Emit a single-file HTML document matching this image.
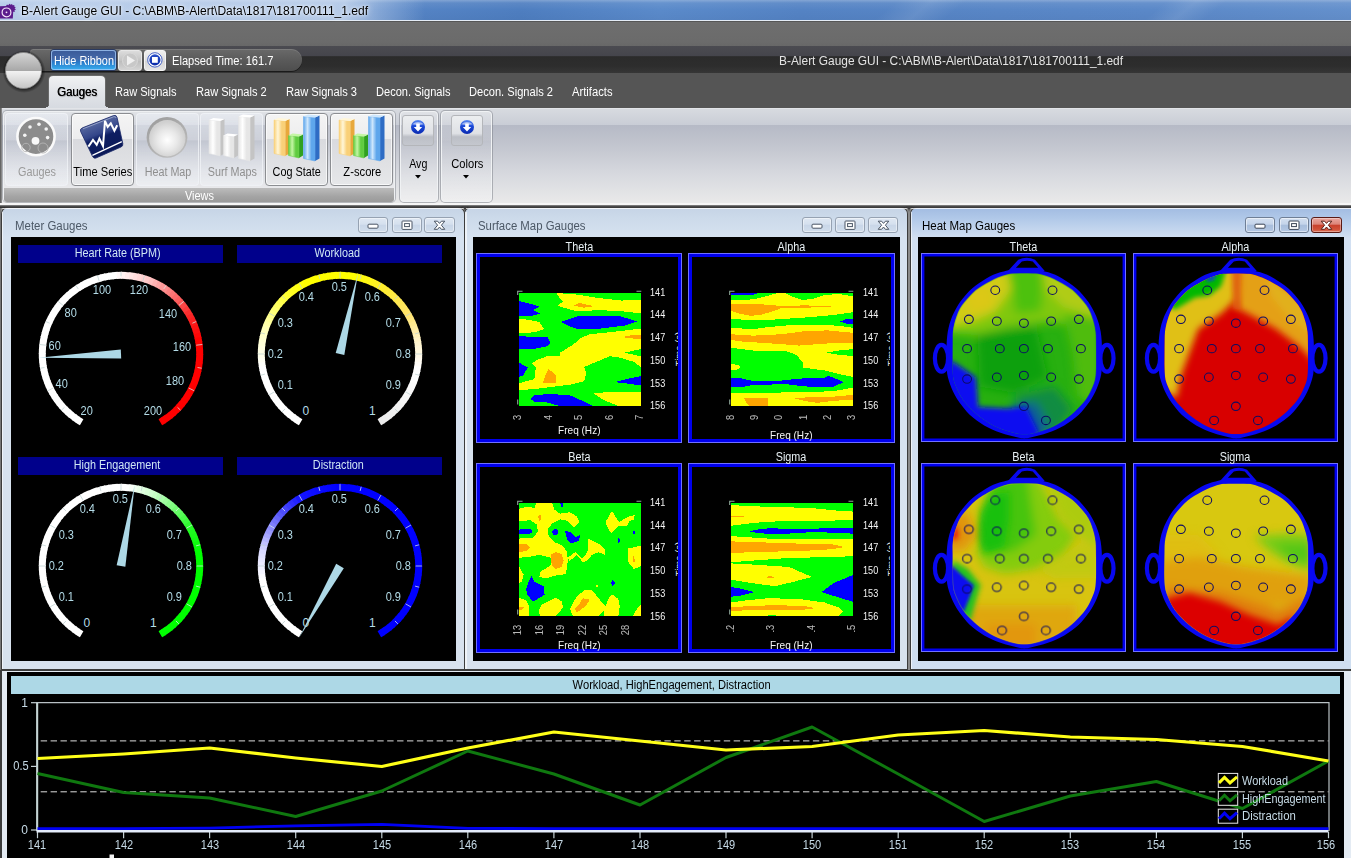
<!DOCTYPE html>
<html><head><meta charset="utf-8"><title>B-Alert Gauge GUI</title>
<style>
html,body{margin:0;padding:0;}
body{width:1351px;height:858px;position:relative;overflow:hidden;background:#d5dae2;font-family:"Liberation Sans",sans-serif;font-size:12px;}
#root{position:absolute;left:0;top:0;width:1351px;height:858px;overflow:hidden;}
svg{display:block;overflow:visible}
</style></head><body><div id="root">
<div style="position:absolute;left:0px;top:0px;width:1351px;height:21px;background:linear-gradient(90deg,#5a88c8 0px,#5584c5 400px,#4e7ec0 520px,#5a8aca 660px,#5483c4 800px,#5886c6 1000px,#5a88c8 1150px,#6490cc 1351px);"></div>
<div style="position:absolute;left:0px;top:0px;width:1351px;height:21px;background:linear-gradient(rgba(255,255,255,.28) 0,rgba(255,255,255,.08) 3px,rgba(255,255,255,0) 10px,rgba(0,0,30,.04) 21px);"></div>
<div style="position:absolute;left:0px;top:0px;width:430px;height:21px;background:linear-gradient(90deg,rgba(235,242,252,.64) 0,rgba(235,242,252,.62) 345px,rgba(235,242,252,.3) 380px,rgba(235,242,252,0) 425px);"></div>
<div style="position:absolute;left:0;top:0;width:1351px;height:21px;overflow:hidden"><div style="position:absolute;left:880px;top:-30px;width:70px;height:90px;transform:skewX(-50deg);background:linear-gradient(90deg,rgba(255,255,255,0),rgba(255,255,255,.10),rgba(255,255,255,0))"></div><div style="position:absolute;left:1150px;top:-30px;width:60px;height:90px;transform:skewX(-50deg);background:linear-gradient(90deg,rgba(255,255,255,0),rgba(255,255,255,.10),rgba(255,255,255,0))"></div></div>
<div style="position:absolute;left:0px;top:20px;width:1351px;height:1px;background:#e4ecf6;"></div>
<div style="position:absolute;left:0px;top:21px;width:1351px;height:1px;background:#565656;"></div>
<svg style="position:absolute;left:0;top:0px" width="18" height="21" viewBox="0 0 18 21"><path d="M0 6.2 L6 6 L7 4.6 L8.3 5.2 L9.4 3.8 L10.6 4.8 L12 3.9 L12.6 5.3 L14.4 5 L14.2 6.6 L15.8 7.2 L14.6 8.3 L16 9.6 L14.4 10.2 L15 11.8 L13.2 11.8 L12.8 18.6 L0 18.6 Z" fill="#5c1c8c"/><circle cx="6.5" cy="12.4" r="4.4" fill="none" stroke="#f4e6fa" stroke-width="1.2"/><circle cx="6.5" cy="12.3" r="0.9" fill="#f4e6fa"/></svg>
<div style="position:absolute;left:21.00px;top:2.50px;font-size:12px;line-height:16px;color:#000;white-space:nowrap;transform:scaleX(1.0017);transform-origin:0 50%;text-shadow:0 0 6px rgba(255,255,255,.9),0 0 3px rgba(255,255,255,.8);">B-Alert Gauge GUI - C:\ABM\B-Alert\Data\1817\181700111_1.edf</div>
<div style="position:absolute;left:0px;top:21.8px;width:1351px;height:24.2px;background:linear-gradient(#6e6e6e,#6b6b6b 80%,#686868);"></div>
<div style="position:absolute;left:0px;top:46px;width:1351px;height:27px;background:linear-gradient(#4b4b51 0,#45454c 10px,#2b2b2b 10.6px,#2d2d2d 20px,#363636 27px);"></div>
<div style="position:absolute;left:0px;top:73px;width:1351px;height:35px;background:#555555;"></div>
<div style="position:absolute;left:30px;top:49px;width:272px;height:22px;border-radius:4px 12px 12px 4px;background:linear-gradient(#6a6a6a,#5a5a5a 50%,#4e4e4e);box-shadow:0 1px 0 rgba(0,0,0,.5), inset 0 1px 0 rgba(255,255,255,.12);"></div>
<svg style="position:absolute;left:2px;top:49px" width="44" height="44" viewBox="0 0 44 44"><defs><linearGradient id="orbt" x1="0" y1="0" x2="0" y2="1"><stop offset="0" stop-color="#d6d6d6"/><stop offset="0.5" stop-color="#a8a8a8"/><stop offset="0.5" stop-color="#f4f4f4"/><stop offset="1" stop-color="#c4c4c4"/></linearGradient><radialGradient id="orbs" cx="0.5" cy="0.5" r="0.5"><stop offset="0.8" stop-color="#000" stop-opacity="0.6"/><stop offset="1" stop-color="#000" stop-opacity="0"/></radialGradient></defs><circle cx="22" cy="22.5" r="21.5" fill="url(#orbs)"/><circle cx="21.5" cy="21.5" r="18" fill="url(#orbt)" stroke="#8a8a8a" stroke-width="0.8"/></svg>
<div style="position:absolute;left:51px;top:50px;width:65px;height:20px;border-radius:3px;background:linear-gradient(#3a5a98 0,#4468a8 45%,#2878c8 60%,#38b0f0 100%);box-shadow:0 0 0 1px #2a3a60, inset 0 0 0 1px rgba(170,205,250,.75);"></div>
<div style="position:absolute;left:54.00px;top:52.50px;font-size:12px;line-height:16px;color:#fff;white-space:nowrap;transform:scaleX(0.9085);transform-origin:0 50%;">Hide Ribbon</div>
<div style="position:absolute;left:118px;top:49.5px;width:23.5px;height:21px;border-radius:3px;background:linear-gradient(#dcdcdc,#c4c4c4 50%,#bcbcbc 52%,#d4d4d4);border:1px solid #e8e8e8;box-sizing:border-box;"></div>
<svg style="position:absolute;left:118px;top:50px" width="24" height="21"><circle cx="12" cy="10.5" r="7.5" fill="#c8c8c8" stroke="#d8d8d8"/><path d="M9 5.5 L17 10.5 L9 15.5 Z" fill="#f0f0f0"/></svg>
<div style="position:absolute;left:144px;top:49.5px;width:22px;height:21px;border-radius:3px;background:linear-gradient(#f0f0f0,#dedede 50%,#d4d4d4 52%,#e6e6e6);border:1px solid #f4f4f4;box-sizing:border-box;"></div>
<svg style="position:absolute;left:144px;top:50px" width="22" height="21"><defs><linearGradient id="stg" x1="0" y1="0" x2="0" y2="1"><stop offset="0" stop-color="#2a50c8"/><stop offset="1" stop-color="#0a2aa8"/></linearGradient></defs><circle cx="10.9" cy="9.9" r="7.2" fill="#fff" stroke="#3050c0" stroke-width="0.9"/><circle cx="10.9" cy="9.9" r="5.6" fill="url(#stg)"/><rect x="8" y="7" width="5.8" height="5.8" fill="#fff"/></svg>
<div style="position:absolute;left:171.50px;top:53.00px;font-size:12px;line-height:16px;color:#fff;white-space:nowrap;transform:scaleX(0.9278);transform-origin:0 50%;">Elapsed Time: 161.7</div>
<div style="position:absolute;left:778.50px;top:52.50px;font-size:12px;line-height:16px;color:#e4e4e4;white-space:nowrap;transform:scaleX(0.9931);transform-origin:0 50%;">B-Alert Gauge GUI - C:\ABM\B-Alert\Data\1817\181700111_1.edf</div>
<div style="position:absolute;left:49px;top:76px;width:55.5px;height:33px;border-radius:4px 4px 0 0;background:linear-gradient(#f0f1f3,#e4e6ea 40%,#d6dae0);box-shadow:0 0 0 1px rgba(120,120,120,.6);"></div>
<div style="position:absolute;left:46px;top:104px;width:3px;height:4px;background:radial-gradient(circle at 0 0,rgba(0,0,0,0) 3px,#d6dae0 3.5px);"></div>
<div style="position:absolute;left:104.5px;top:104px;width:3px;height:4px;background:radial-gradient(circle at 100% 0,rgba(0,0,0,0) 3px,#d6dae0 3.5px);"></div>
<div style="position:absolute;left:56.50px;top:84.00px;font-size:12px;line-height:16px;color:#000;white-space:nowrap;transform:scaleX(0.9517);transform-origin:0 50%;text-shadow:0.4px 0 0 #000,1px 1px 1px rgba(0,0,0,.25);">Gauges</div>
<div style="position:absolute;left:115.00px;top:84.00px;font-size:12px;line-height:16px;color:#fff;white-space:nowrap;transform:scaleX(0.9221);transform-origin:0 50%;">Raw Signals</div>
<div style="position:absolute;left:196.30px;top:84.00px;font-size:12px;line-height:16px;color:#fff;white-space:nowrap;transform:scaleX(0.9217);transform-origin:0 50%;">Raw Signals 2</div>
<div style="position:absolute;left:286.00px;top:84.00px;font-size:12px;line-height:16px;color:#fff;white-space:nowrap;transform:scaleX(0.9256);transform-origin:0 50%;">Raw Signals 3</div>
<div style="position:absolute;left:376.00px;top:84.00px;font-size:12px;line-height:16px;color:#fff;white-space:nowrap;transform:scaleX(0.9230);transform-origin:0 50%;">Decon. Signals</div>
<div style="position:absolute;left:469.00px;top:84.00px;font-size:12px;line-height:16px;color:#fff;white-space:nowrap;transform:scaleX(0.9259);transform-origin:0 50%;">Decon. Signals 2</div>
<div style="position:absolute;left:572.00px;top:84.00px;font-size:12px;line-height:16px;color:#fff;white-space:nowrap;transform:scaleX(0.9344);transform-origin:0 50%;">Artifacts</div>
<div style="position:absolute;left:0px;top:108px;width:1351px;height:97px;background:linear-gradient(#d8dbe0 0,#c9cdd6 17px,#b6bac6 17.5px,#c4c7d0 40px,#d6d8de 65px,#eaeaea 96px);"></div>
<div style="position:absolute;left:0px;top:108px;width:1351px;height:1px;background:#e2e4e8;"></div>
<div style="position:absolute;left:0px;top:108px;width:2px;height:97px;background:linear-gradient(90deg,#555,#999);"></div>
<div style="position:absolute;left:0px;top:203.2px;width:1351px;height:2.2px;background:#f6f6f6;"></div>
<div style="position:absolute;left:0px;top:205.4px;width:1351px;height:2.2px;background:linear-gradient(#909090,#3a3a3a 60%,#2a2a2a);"></div>
<div style="position:absolute;left:3px;top:110.6px;width:392px;height:91.8px;box-sizing:border-box;border:1px solid #eef0f2;border-radius:4px;background:linear-gradient(rgba(255,255,255,.25),rgba(255,255,255,.05) 28px,rgba(255,255,255,0) 29px,rgba(255,255,255,.35));box-shadow:0 0 0 1px rgba(120,124,132,.45);"></div>
<div style="position:absolute;left:4px;top:188.2px;width:390px;height:13.4px;border-radius:0 0 3px 3px;background:linear-gradient(#bcbcbc,#a4a4a4 60%,#9a9a9a);"></div>
<div style="position:absolute;left:185.40px;top:187.50px;font-size:12px;line-height:16px;color:#fff;white-space:nowrap;transform:scaleX(0.9122);transform-origin:0 50%;">Views</div>
<div style="position:absolute;left:5px;top:112.5px;width:63px;height:73px;box-sizing:border-box;border:1px solid rgba(240,242,246,.8);border-radius:4px;background:linear-gradient(rgba(236,240,246,.55),rgba(226,230,238,.35) 36%,rgba(200,206,218,.35) 38%,rgba(238,240,244,.7) 100%);"></div>
<div style="position:absolute;left:70.5px;top:112.5px;width:63px;height:73px;box-sizing:border-box;border:1px solid #8c8e92;border-radius:4px;background:linear-gradient(#f4f4f4,#ededee 34.5%,#d9dade 35.5%,#e6e7e9 100%);box-shadow:inset 0 0 0 1px rgba(255,255,255,.7);"></div>
<div style="position:absolute;left:136px;top:112.5px;width:62.5px;height:73px;box-sizing:border-box;border:1px solid rgba(240,242,246,.8);border-radius:4px;background:linear-gradient(rgba(236,240,246,.55),rgba(226,230,238,.35) 36%,rgba(200,206,218,.35) 38%,rgba(238,240,244,.7) 100%);"></div>
<div style="position:absolute;left:200px;top:112.5px;width:63px;height:73px;box-sizing:border-box;border:1px solid rgba(240,242,246,.8);border-radius:4px;background:linear-gradient(rgba(236,240,246,.55),rgba(226,230,238,.35) 36%,rgba(200,206,218,.35) 38%,rgba(238,240,244,.7) 100%);"></div>
<div style="position:absolute;left:265px;top:112.5px;width:63px;height:73px;box-sizing:border-box;border:1px solid #8c8e92;border-radius:4px;background:linear-gradient(#f4f4f4,#ededee 34.5%,#d9dade 35.5%,#e6e7e9 100%);box-shadow:inset 0 0 0 1px rgba(255,255,255,.7);"></div>
<div style="position:absolute;left:330px;top:112.5px;width:63px;height:73px;box-sizing:border-box;border:1px solid #8c8e92;border-radius:4px;background:linear-gradient(#f4f4f4,#ededee 34.5%,#d9dade 35.5%,#e6e7e9 100%);box-shadow:inset 0 0 0 1px rgba(255,255,255,.7);"></div>
<svg style="position:absolute;left:15px;top:116px" width="42" height="42" viewBox="0 0 42 42"><circle cx="21" cy="20.6" r="18.6" fill="#8c8c8c" stroke="#fafafa" stroke-width="2.6"/><circle cx="20.5" cy="24.8" r="3.9" fill="#f8f8f8"/><circle cx="9.8" cy="19.2" r="1.8" fill="#f4f4f4"/><circle cx="15" cy="11" r="1.8" fill="#f4f4f4"/><circle cx="24" cy="8.2" r="1.8" fill="#f4f4f4"/><circle cx="31.2" cy="13" r="1.8" fill="#f4f4f4"/><circle cx="32.6" cy="21.6" r="1.8" fill="#f4f4f4"/><circle cx="11" cy="31.5" r="4.2" fill="none" stroke="#b4b4b4" stroke-width="0.9"/><circle cx="28" cy="32" r="5" fill="none" stroke="#b4b4b4" stroke-width="0.9"/></svg>
<div style="position:absolute;left:15.79px;top:164.00px;font-size:12px;line-height:16px;color:#9a9a9a;white-space:nowrap;transform:scaleX(0.9041);transform-origin:50% 50%;">Gauges</div>
<svg style="position:absolute;left:76px;top:112px" width="52" height="50" viewBox="76 112 52 50"><defs><linearGradient id="tsg" x1="0.2" y1="0" x2="0.6" y2="1"><stop offset="0" stop-color="#7080b0"/><stop offset="0.45" stop-color="#34468a"/><stop offset="0.55" stop-color="#0e1e62"/><stop offset="1" stop-color="#0a1856"/></linearGradient></defs><path d="M82.5 127.8 L113.5 115.6 Q116.2 114.6 117 117.2 L122.8 143.6 Q123.3 146 121 147 L96 158 Q93.6 158.8 92.6 156.6 L80.6 131.4 Q79.6 129 82.5 127.8 Z" fill="url(#tsg)" stroke="#1a2868" stroke-width="0.8"/><path d="M83 128.8 L113.6 116.8 Q115.6 116.2 116.2 118" fill="none" stroke="#c8d0e8" stroke-width="0.7" opacity=".8"/><path d="M88.4 146.6 L93 139.9 L96.7 144.8 L99.4 138.7 L103 146 L105 120.9 L107.7 127 L110.8 123.4 L114.4 130.7 L117.2 125.2" fill="none" stroke="#fff" stroke-width="2" stroke-linejoin="miter"/><path d="M92.4 155.4 L121.8 141.7" stroke="#fff" stroke-width="1.4"/></svg>
<div style="position:absolute;left:71.02px;top:164.00px;font-size:12px;line-height:16px;color:#000;white-space:nowrap;transform:scaleX(0.9281);transform-origin:50% 50%;">Time Series</div>
<svg style="position:absolute;left:145px;top:115px" width="44" height="44" viewBox="0 0 44 44"><defs><radialGradient id="hmg" cx="0.5" cy="0.55" r="0.5"><stop offset="0" stop-color="#ffffff"/><stop offset="0.55" stop-color="#e8e8e8"/><stop offset="1" stop-color="#d0d0d0"/></radialGradient><linearGradient id="hmr" x1="0" y1="0" x2="0.6" y2="1"><stop offset="0" stop-color="#9a9a9a"/><stop offset="1" stop-color="#bcbcbc"/></linearGradient></defs><circle cx="22" cy="22.4" r="20.4" fill="url(#hmr)"/><circle cx="22.3" cy="23.2" r="18.2" fill="url(#hmg)"/></svg>
<div style="position:absolute;left:141.69px;top:164.00px;font-size:12px;line-height:16px;color:#8e8e8e;white-space:nowrap;transform:scaleX(0.8957);transform-origin:50% 50%;">Heat Map</div>
<svg style="position:absolute;left:209px;top:112px" width="50" height="52" viewBox="0 0 50 52"><defs><linearGradient id="bg209_0" x1="0" y1="0" x2="1" y2="0"><stop offset="0" stop-color="#e6e6e6"/><stop offset="0.35" stop-color="#ffffff"/><stop offset="0.7" stop-color="#e6e6e6"/><stop offset="1" stop-color="#e6e6e6"/></linearGradient><linearGradient id="bg209_1" x1="0" y1="0" x2="1" y2="0"><stop offset="0" stop-color="#e6e6e6"/><stop offset="0.35" stop-color="#ffffff"/><stop offset="0.7" stop-color="#e6e6e6"/><stop offset="1" stop-color="#e6e6e6"/></linearGradient><linearGradient id="bg209_2" x1="0" y1="0" x2="1" y2="0"><stop offset="0" stop-color="#e6e6e6"/><stop offset="0.35" stop-color="#ffffff"/><stop offset="0.7" stop-color="#e6e6e6"/><stop offset="1" stop-color="#e6e6e6"/></linearGradient></defs><path d="M11.16 9.0 L15.5 7.0 L15.5 41.5 L11.16 44 Z" fill="#c4c4c4"/><path d="M0 8.0 L11.16 9.0 L11.16 44 L0 41.5 Z" fill="url(#bg209_0)" stroke="#e6e6e6" stroke-width="0.5"/><path d="M0 8.0 L4.34 6.0 L15.5 7.0 L11.16 9.0 Z" fill="#ffffff"/><path d="M24.939999999999998 24.5 L29.0 22.5 L29.0 43.5 L24.939999999999998 46 Z" fill="#c4c4c4"/><path d="M14.5 23.5 L24.939999999999998 24.5 L24.939999999999998 46 L14.5 43.5 Z" fill="url(#bg209_1)" stroke="#e6e6e6" stroke-width="0.5"/><path d="M14.5 23.5 L18.560000000000002 21.5 L29.0 22.5 L24.939999999999998 24.5 Z" fill="#ffffff"/><path d="M41.019999999999996 5.5 L45.5 3.5 L45.5 46.5 L41.019999999999996 49 Z" fill="#c4c4c4"/><path d="M29.5 4.5 L41.019999999999996 5.5 L41.019999999999996 49 L29.5 46.5 Z" fill="url(#bg209_2)" stroke="#e6e6e6" stroke-width="0.5"/><path d="M29.5 4.5 L33.980000000000004 2.5 L45.5 3.5 L41.019999999999996 5.5 Z" fill="#ffffff"/></svg>
<div style="position:absolute;left:204.56px;top:164.00px;font-size:12px;line-height:16px;color:#8e8e8e;white-space:nowrap;transform:scaleX(0.8960);transform-origin:50% 50%;">Surf Maps</div>
<svg style="position:absolute;left:274px;top:112px" width="50" height="52" viewBox="0 0 50 52"><defs><linearGradient id="bg274_0" x1="0" y1="0" x2="1" y2="0"><stop offset="0" stop-color="#f9d078"/><stop offset="0.35" stop-color="#fff6d8"/><stop offset="0.7" stop-color="#f9d078"/><stop offset="1" stop-color="#f9d078"/></linearGradient><linearGradient id="bg274_1" x1="0" y1="0" x2="1" y2="0"><stop offset="0" stop-color="#60cc40"/><stop offset="0.35" stop-color="#c4f6a4"/><stop offset="0.7" stop-color="#60cc40"/><stop offset="1" stop-color="#60cc40"/></linearGradient><linearGradient id="bg274_2" x1="0" y1="0" x2="1" y2="0"><stop offset="0" stop-color="#5ea6ec"/><stop offset="0.35" stop-color="#cde6fc"/><stop offset="0.7" stop-color="#5ea6ec"/><stop offset="1" stop-color="#5ea6ec"/></linearGradient></defs><path d="M11.16 9.0 L15.5 7.0 L15.5 41.5 L11.16 44 Z" fill="#e8a83c"/><path d="M0 8.0 L11.16 9.0 L11.16 44 L0 41.5 Z" fill="url(#bg274_0)" stroke="#f9d078" stroke-width="0.5"/><path d="M0 8.0 L4.34 6.0 L15.5 7.0 L11.16 9.0 Z" fill="#fff6d8"/><path d="M24.939999999999998 24.5 L29.0 22.5 L29.0 43.5 L24.939999999999998 46 Z" fill="#30a020"/><path d="M14.5 23.5 L24.939999999999998 24.5 L24.939999999999998 46 L14.5 43.5 Z" fill="url(#bg274_1)" stroke="#60cc40" stroke-width="0.5"/><path d="M14.5 23.5 L18.560000000000002 21.5 L29.0 22.5 L24.939999999999998 24.5 Z" fill="#c4f6a4"/><path d="M41.019999999999996 5.5 L45.5 3.5 L45.5 46.5 L41.019999999999996 49 Z" fill="#2e6cc4"/><path d="M29.5 4.5 L41.019999999999996 5.5 L41.019999999999996 49 L29.5 46.5 Z" fill="url(#bg274_2)" stroke="#5ea6ec" stroke-width="0.5"/><path d="M29.5 4.5 L33.980000000000004 2.5 L45.5 3.5 L41.019999999999996 5.5 Z" fill="#cde6fc"/></svg>
<div style="position:absolute;left:270.42px;top:164.00px;font-size:12px;line-height:16px;color:#000;white-space:nowrap;transform:scaleX(0.9032);transform-origin:50% 50%;">Cog State</div>
<svg style="position:absolute;left:339px;top:112px" width="50" height="52" viewBox="0 0 50 52"><defs><linearGradient id="bg339_0" x1="0" y1="0" x2="1" y2="0"><stop offset="0" stop-color="#f9d078"/><stop offset="0.35" stop-color="#fff6d8"/><stop offset="0.7" stop-color="#f9d078"/><stop offset="1" stop-color="#f9d078"/></linearGradient><linearGradient id="bg339_1" x1="0" y1="0" x2="1" y2="0"><stop offset="0" stop-color="#60cc40"/><stop offset="0.35" stop-color="#c4f6a4"/><stop offset="0.7" stop-color="#60cc40"/><stop offset="1" stop-color="#60cc40"/></linearGradient><linearGradient id="bg339_2" x1="0" y1="0" x2="1" y2="0"><stop offset="0" stop-color="#5ea6ec"/><stop offset="0.35" stop-color="#cde6fc"/><stop offset="0.7" stop-color="#5ea6ec"/><stop offset="1" stop-color="#5ea6ec"/></linearGradient></defs><path d="M11.16 9.0 L15.5 7.0 L15.5 41.5 L11.16 44 Z" fill="#e8a83c"/><path d="M0 8.0 L11.16 9.0 L11.16 44 L0 41.5 Z" fill="url(#bg339_0)" stroke="#f9d078" stroke-width="0.5"/><path d="M0 8.0 L4.34 6.0 L15.5 7.0 L11.16 9.0 Z" fill="#fff6d8"/><path d="M24.939999999999998 24.5 L29.0 22.5 L29.0 43.5 L24.939999999999998 46 Z" fill="#30a020"/><path d="M14.5 23.5 L24.939999999999998 24.5 L24.939999999999998 46 L14.5 43.5 Z" fill="url(#bg339_1)" stroke="#60cc40" stroke-width="0.5"/><path d="M14.5 23.5 L18.560000000000002 21.5 L29.0 22.5 L24.939999999999998 24.5 Z" fill="#c4f6a4"/><path d="M41.019999999999996 5.5 L45.5 3.5 L45.5 46.5 L41.019999999999996 49 Z" fill="#2e6cc4"/><path d="M29.5 4.5 L41.019999999999996 5.5 L41.019999999999996 49 L29.5 46.5 Z" fill="url(#bg339_2)" stroke="#5ea6ec" stroke-width="0.5"/><path d="M29.5 4.5 L33.980000000000004 2.5 L45.5 3.5 L41.019999999999996 5.5 Z" fill="#cde6fc"/></svg>
<div style="position:absolute;left:341.87px;top:164.00px;font-size:12px;line-height:16px;color:#000;white-space:nowrap;transform:scaleX(0.9344);transform-origin:50% 50%;">Z-score</div>
<div style="position:absolute;left:399.5px;top:110.8px;width:38px;height:91.2px;box-sizing:border-box;border:1px solid #f0f2f4;border-radius:4px;background:linear-gradient(rgba(255,255,255,.25),rgba(255,255,255,.05) 28px,rgba(255,255,255,0) 29px,rgba(255,255,255,.3));box-shadow:0 0 0 1px rgba(120,124,132,.5);"></div>
<div style="position:absolute;left:441px;top:110.8px;width:51px;height:91.2px;box-sizing:border-box;border:1px solid #f0f2f4;border-radius:4px;background:linear-gradient(rgba(255,255,255,.25),rgba(255,255,255,.05) 28px,rgba(255,255,255,0) 29px,rgba(255,255,255,.3));box-shadow:0 0 0 1px rgba(120,124,132,.5);"></div>
<div style="position:absolute;left:402px;top:115px;width:32px;height:31px;box-sizing:border-box;border:1px solid #b4b6ba;border-radius:3px;background:linear-gradient(#eceef0,#dfe1e5 60%,#bcbfc6 72%,#c4c7ce);"></div><svg style="position:absolute;left:410px;top:119px" width="16" height="16" viewBox="0 0 16 16"><defs><linearGradient id="ab418" x1="0" y1="0" x2="0" y2="1"><stop offset="0" stop-color="#5a8af0"/><stop offset="0.45" stop-color="#1a48d8"/><stop offset="1" stop-color="#0a2ab0"/></linearGradient></defs><circle cx="8" cy="8" r="7" fill="url(#ab418)"/><path d="M2.2 5.2 Q8 1 13.8 5.2 Q8 6.6 2.2 5.2Z" fill="#fff" opacity="0.55"/><path d="M6.2 4.6 H9.8 V8 H12.2 L8 12.6 L3.8 8 H6.2 Z" fill="#fff"/></svg>
<div style="position:absolute;left:450.7px;top:115px;width:32px;height:31px;box-sizing:border-box;border:1px solid #b4b6ba;border-radius:3px;background:linear-gradient(#eceef0,#dfe1e5 60%,#bcbfc6 72%,#c4c7ce);"></div><svg style="position:absolute;left:458.7px;top:119px" width="16" height="16" viewBox="0 0 16 16"><defs><linearGradient id="ab466" x1="0" y1="0" x2="0" y2="1"><stop offset="0" stop-color="#5a8af0"/><stop offset="0.45" stop-color="#1a48d8"/><stop offset="1" stop-color="#0a2ab0"/></linearGradient></defs><circle cx="8" cy="8" r="7" fill="url(#ab466)"/><path d="M2.2 5.2 Q8 1 13.8 5.2 Q8 6.6 2.2 5.2Z" fill="#fff" opacity="0.55"/><path d="M6.2 4.6 H9.8 V8 H12.2 L8 12.6 L3.8 8 H6.2 Z" fill="#fff"/></svg>
<div style="position:absolute;left:408.07px;top:156.00px;font-size:12px;line-height:16px;color:#000;white-space:nowrap;transform:scaleX(0.8895);transform-origin:50% 50%;">Avg</div>
<div style="position:absolute;left:449.66px;top:156.00px;font-size:12px;line-height:16px;color:#000;white-space:nowrap;transform:scaleX(0.9286);transform-origin:50% 50%;">Colors</div>
<svg style="position:absolute;left:415.4px;top:175px" width="6" height="4"><path d="M0 0 H6 L3 3.4 Z" fill="#000"/></svg>
<svg style="position:absolute;left:463.3px;top:175px" width="6" height="4"><path d="M0 0 H6 L3 3.4 Z" fill="#000"/></svg>
<div style="position:absolute;left:0px;top:207.5px;width:1351px;height:465px;background:#8a8a8a;"></div>
<div style="position:absolute;left:0px;top:207.5px;width:2.2px;height:651px;background:linear-gradient(90deg,#6a6a6a,#a0a0a0);"></div>
<div style="position:absolute;left:2.3px;top:207.8px;width:461.5px;height:461.2px;border-radius:6px 6px 0 0;background:linear-gradient(#c6d4e6 0,#ccdaea 10px,#d6e2f0 30px,#d8e2ee 100%);box-shadow:0 0 0 1px #3c3c3c;"></div>
<div style="position:absolute;left:2.3px;top:208px;width:461.5px;height:1.2px;border-radius:6px 6px 0 0;background:rgba(255,255,255,.75);"></div>
<div style="position:absolute;left:2.3px;top:212px;width:1.2px;height:457px;background:rgba(255,255,255,.6);"></div>
<div style="position:absolute;left:10.7px;top:237.4px;width:445.8px;height:423.4px;background:#000;"></div>
<div style="position:absolute;left:14.50px;top:217.55px;font-size:12.5px;line-height:16.5px;color:#4c5866;white-space:nowrap;transform:scaleX(0.9153);transform-origin:0 50%;">Meter Gauges</div>
<div style="position:absolute;left:358.2px;top:217.3px;width:30.3px;height:16.2px;box-sizing:border-box;border:1px solid #96a2b2;border-radius:3px;background:linear-gradient(#dfe8f3 0,#d5e0ee 45%,#c8d6e8 50%,#d2deec 100%);box-shadow:inset 0 0 0 1px rgba(255,255,255,.45);"></div>
<svg style="position:absolute;left:367.3px;top:222px" width="12" height="8"><rect x="1" y="2.2" width="10" height="4" rx="1" fill="#fff" stroke="#4a5564" stroke-width="1"/></svg>
<div style="position:absolute;left:391.59999999999997px;top:217.3px;width:30.3px;height:16.2px;box-sizing:border-box;border:1px solid #96a2b2;border-radius:3px;background:linear-gradient(#dfe8f3 0,#d5e0ee 45%,#c8d6e8 50%,#d2deec 100%);box-shadow:inset 0 0 0 1px rgba(255,255,255,.45);"></div>
<svg style="position:absolute;left:400.7px;top:219.5px" width="12" height="11"><rect x="1" y="1" width="10" height="8.4" rx="0.8" fill="#fff" stroke="#4a5564" stroke-width="1"/><rect x="3.6" y="3.6" width="4.8" height="3" fill="#fff" stroke="#4a5564" stroke-width="1"/></svg>
<div style="position:absolute;left:424.4px;top:217.3px;width:30.3px;height:16.2px;box-sizing:border-box;border:1px solid #96a2b2;border-radius:3px;background:linear-gradient(#dfe8f3 0,#d5e0ee 45%,#c8d6e8 50%,#d2deec 100%);box-shadow:inset 0 0 0 1px rgba(255,255,255,.45);"></div>
<svg style="position:absolute;left:433.0px;top:220px" width="13" height="11"><path d="M1.2 1.2 L4.6 1.2 L6.5 3.4 L8.4 1.2 L11.8 1.2 L8.4 5.2 L11.8 9.3 L8.4 9.3 L6.5 7 L4.6 9.3 L1.2 9.3 L4.6 5.2 Z" fill="#fff" stroke="#4a5564" stroke-width="1" stroke-linejoin="round"/></svg>
<div style="position:absolute;left:465.4px;top:207.8px;width:441.9px;height:461.2px;border-radius:6px 6px 0 0;background:linear-gradient(#c6d4e6 0,#ccdaea 10px,#d6e2f0 30px,#d8e2ee 100%);box-shadow:0 0 0 1px #3c3c3c;"></div>
<div style="position:absolute;left:465.4px;top:208px;width:441.9px;height:1.2px;border-radius:6px 6px 0 0;background:rgba(255,255,255,.75);"></div>
<div style="position:absolute;left:465.4px;top:212px;width:1.2px;height:457px;background:rgba(255,255,255,.6);"></div>
<div style="position:absolute;left:473px;top:237.4px;width:427px;height:423.4px;background:#000;"></div>
<div style="position:absolute;left:477.50px;top:217.55px;font-size:12.5px;line-height:16.5px;color:#4c5866;white-space:nowrap;transform:scaleX(0.9101);transform-origin:0 50%;">Surface Map Gauges</div>
<div style="position:absolute;left:801.7px;top:217.3px;width:30.3px;height:16.2px;box-sizing:border-box;border:1px solid #96a2b2;border-radius:3px;background:linear-gradient(#dfe8f3 0,#d5e0ee 45%,#c8d6e8 50%,#d2deec 100%);box-shadow:inset 0 0 0 1px rgba(255,255,255,.45);"></div>
<svg style="position:absolute;left:810.8000000000001px;top:222px" width="12" height="8"><rect x="1" y="2.2" width="10" height="4" rx="1" fill="#fff" stroke="#4a5564" stroke-width="1"/></svg>
<div style="position:absolute;left:835.1px;top:217.3px;width:30.3px;height:16.2px;box-sizing:border-box;border:1px solid #96a2b2;border-radius:3px;background:linear-gradient(#dfe8f3 0,#d5e0ee 45%,#c8d6e8 50%,#d2deec 100%);box-shadow:inset 0 0 0 1px rgba(255,255,255,.45);"></div>
<svg style="position:absolute;left:844.2px;top:219.5px" width="12" height="11"><rect x="1" y="1" width="10" height="8.4" rx="0.8" fill="#fff" stroke="#4a5564" stroke-width="1"/><rect x="3.6" y="3.6" width="4.8" height="3" fill="#fff" stroke="#4a5564" stroke-width="1"/></svg>
<div style="position:absolute;left:867.9000000000001px;top:217.3px;width:30.3px;height:16.2px;box-sizing:border-box;border:1px solid #96a2b2;border-radius:3px;background:linear-gradient(#dfe8f3 0,#d5e0ee 45%,#c8d6e8 50%,#d2deec 100%);box-shadow:inset 0 0 0 1px rgba(255,255,255,.45);"></div>
<svg style="position:absolute;left:876.5000000000001px;top:220px" width="13" height="11"><path d="M1.2 1.2 L4.6 1.2 L6.5 3.4 L8.4 1.2 L11.8 1.2 L8.4 5.2 L11.8 9.3 L8.4 9.3 L6.5 7 L4.6 9.3 L1.2 9.3 L4.6 5.2 Z" fill="#fff" stroke="#4a5564" stroke-width="1" stroke-linejoin="round"/></svg>
<div style="position:absolute;left:911.3px;top:207.8px;width:444.70000000000005px;height:461.2px;border-radius:6px 6px 0 0;background:linear-gradient(#a2bce2 0,#b0c8e8 10px,#c4d6ee 22px,#d2e0f2 30px,#cfdef0 100%);box-shadow:0 0 0 1px #3c3c3c;"></div>
<div style="position:absolute;left:911.3px;top:208px;width:444.70000000000005px;height:1.2px;border-radius:6px 6px 0 0;background:rgba(255,255,255,.75);"></div>
<div style="position:absolute;left:911.3px;top:212px;width:1.2px;height:457px;background:rgba(255,255,255,.6);"></div>
<div style="position:absolute;left:918px;top:237.4px;width:425.79999999999995px;height:423.4px;background:#000;"></div>
<div style="position:absolute;left:922.40px;top:217.55px;font-size:12.5px;line-height:16.5px;color:#000;white-space:nowrap;transform:scaleX(0.9187);transform-origin:0 50%;">Heat Map Gauges</div>
<div style="position:absolute;left:1245.2px;top:217.3px;width:30.3px;height:16.2px;box-sizing:border-box;border:1px solid #6f7f96;border-radius:3px;background:linear-gradient(#d4e0f0 0,#c4d4ea 45%,#a8bedc 50%,#b4c8e4 100%);box-shadow:inset 0 0 0 1px rgba(255,255,255,.5);"></div>
<svg style="position:absolute;left:1254.3px;top:222px" width="12" height="8"><rect x="1" y="2.2" width="10" height="4" rx="1" fill="#fff" stroke="#3a4454" stroke-width="1"/></svg>
<div style="position:absolute;left:1278.6000000000001px;top:217.3px;width:30.3px;height:16.2px;box-sizing:border-box;border:1px solid #6f7f96;border-radius:3px;background:linear-gradient(#d4e0f0 0,#c4d4ea 45%,#a8bedc 50%,#b4c8e4 100%);box-shadow:inset 0 0 0 1px rgba(255,255,255,.5);"></div>
<svg style="position:absolute;left:1287.7px;top:219.5px" width="12" height="11"><rect x="1" y="1" width="10" height="8.4" rx="0.8" fill="#fff" stroke="#3a4454" stroke-width="1"/><rect x="3.6" y="3.6" width="4.8" height="3" fill="#fff" stroke="#3a4454" stroke-width="1"/></svg>
<div style="position:absolute;left:1311.4px;top:217.3px;width:30.3px;height:16.2px;box-sizing:border-box;border:1px solid #5a1a14;border-radius:3px;background:linear-gradient(#eaa8a0 0,#dc8478 45%,#c8402c 50%,#d05038 80%,#dc7058 100%);box-shadow:inset 0 0 0 1px rgba(255,255,255,.35);"></div>
<svg style="position:absolute;left:1320.0px;top:220px" width="13" height="11"><path d="M1.2 1.2 L4.6 1.2 L6.5 3.4 L8.4 1.2 L11.8 1.2 L8.4 5.2 L11.8 9.3 L8.4 9.3 L6.5 7 L4.6 9.3 L1.2 9.3 L4.6 5.2 Z" fill="#fff" stroke="#5a2018" stroke-width="1" stroke-linejoin="round"/></svg>
<svg style="position:absolute;left:460.6px;top:205.5px" width="8" height="8"><path d="M0 0.5 Q3.6 1.2 4 6 Q4.4 1.2 8 0.5 Z" fill="#3c3c3c"/></svg>
<svg style="position:absolute;left:905.3px;top:205.5px" width="8" height="8"><path d="M0 0.5 Q3.6 1.2 4 6 Q4.4 1.2 8 0.5 Z" fill="#3c3c3c"/></svg>
<div style="position:absolute;left:18px;top:245px;width:205px;height:18px;background:#00008b;"></div>
<div style="position:absolute;left:69.72px;top:245.40px;font-size:12px;line-height:16px;color:#cfe6f4;white-space:nowrap;transform:scaleX(0.9000);transform-origin:50% 50%;">Heart Rate (BPM)</div>
<svg style="position:absolute;left:20.5px;top:254.2px" width="200" height="200" viewBox="20.5 254.2 200 200"><path d="M79.40 425.39 A82.2 82.2 0 0 1 75.01 422.67 L78.88 416.84 A75.2 75.2 0 0 0 82.90 419.33Z" fill="rgb(255,255,255)"/><path d="M75.73 423.14 A82.2 82.2 0 0 1 71.49 420.19 L75.66 414.57 A75.2 75.2 0 0 0 79.54 417.27Z" fill="rgb(255,255,255)"/><path d="M72.18 420.70 A82.2 82.2 0 0 1 68.10 417.54 L72.57 412.14 A75.2 75.2 0 0 0 76.30 415.04Z" fill="rgb(255,255,255)"/><path d="M68.77 418.08 A82.2 82.2 0 0 1 64.86 414.71 L69.60 409.55 A75.2 75.2 0 0 0 73.18 412.64Z" fill="rgb(255,255,255)"/><path d="M65.50 415.29 A82.2 82.2 0 0 1 61.77 411.71 L66.77 406.81 A75.2 75.2 0 0 0 70.18 410.08Z" fill="rgb(255,255,255)"/><path d="M62.38 412.32 A82.2 82.2 0 0 1 58.84 408.56 L64.09 403.93 A75.2 75.2 0 0 0 67.33 407.37Z" fill="rgb(255,255,255)"/><path d="M59.41 409.20 A82.2 82.2 0 0 1 56.08 405.26 L61.57 400.91 A75.2 75.2 0 0 0 64.62 404.52Z" fill="rgb(255,255,255)"/><path d="M56.62 405.93 A82.2 82.2 0 0 1 53.50 401.82 L59.20 397.76 A75.2 75.2 0 0 0 62.06 401.52Z" fill="rgb(255,255,255)"/><path d="M54.00 402.52 A82.2 82.2 0 0 1 51.10 398.24 L57.01 394.49 A75.2 75.2 0 0 0 59.66 398.40Z" fill="rgb(255,255,255)"/><path d="M51.56 398.97 A82.2 82.2 0 0 1 48.89 394.55 L54.98 391.12 A75.2 75.2 0 0 0 57.43 395.16Z" fill="rgb(255,255,255)"/><path d="M49.31 395.30 A82.2 82.2 0 0 1 46.87 390.75 L53.14 387.64 A75.2 75.2 0 0 0 55.37 391.80Z" fill="rgb(255,255,255)"/><path d="M47.26 391.52 A82.2 82.2 0 0 1 45.06 386.85 L51.48 384.07 A75.2 75.2 0 0 0 53.50 388.34Z" fill="rgb(255,255,255)"/><path d="M45.41 387.63 A82.2 82.2 0 0 1 43.46 382.85 L50.02 380.41 A75.2 75.2 0 0 0 51.80 384.79Z" fill="rgb(255,255,255)"/><path d="M43.76 383.66 A82.2 82.2 0 0 1 42.06 378.78 L48.74 376.69 A75.2 75.2 0 0 0 50.29 381.15Z" fill="rgb(255,255,255)"/><path d="M42.32 379.60 A82.2 82.2 0 0 1 40.88 374.64 L47.66 372.90 A75.2 75.2 0 0 0 48.98 377.44Z" fill="rgb(255,255,255)"/><path d="M41.10 375.47 A82.2 82.2 0 0 1 39.92 370.45 L46.78 369.06 A75.2 75.2 0 0 0 47.86 373.66Z" fill="rgb(255,255,255)"/><path d="M40.10 371.29 A82.2 82.2 0 0 1 39.18 366.21 L46.11 365.19 A75.2 75.2 0 0 0 46.94 369.83Z" fill="rgb(255,255,255)"/><path d="M39.31 367.06 A82.2 82.2 0 0 1 38.66 361.94 L45.63 361.28 A75.2 75.2 0 0 0 46.23 365.96Z" fill="rgb(255,255,255)"/><path d="M38.75 362.79 A82.2 82.2 0 0 1 38.37 357.64 L45.37 357.35 A75.2 75.2 0 0 0 45.71 362.06Z" fill="rgb(255,255,255)"/><path d="M38.41 358.50 A82.2 82.2 0 0 1 38.30 353.34 L45.30 353.41 A75.2 75.2 0 0 0 45.40 358.14Z" fill="rgb(255,255,255)"/><path d="M38.30 354.20 A82.2 82.2 0 0 1 38.46 349.04 L45.45 349.48 A75.2 75.2 0 0 0 45.30 354.20Z" fill="rgb(255,255,255)"/><path d="M38.41 349.90 A82.2 82.2 0 0 1 38.84 344.75 L45.80 345.56 A75.2 75.2 0 0 0 45.40 350.26Z" fill="rgb(255,255,255)"/><path d="M38.75 345.61 A82.2 82.2 0 0 1 39.45 340.49 L46.35 341.66 A75.2 75.2 0 0 0 45.71 346.34Z" fill="rgb(255,255,255)"/><path d="M39.31 341.34 A82.2 82.2 0 0 1 40.28 336.27 L47.11 337.80 A75.2 75.2 0 0 0 46.23 342.44Z" fill="rgb(255,255,255)"/><path d="M40.10 337.11 A82.2 82.2 0 0 1 41.33 332.09 L48.07 333.98 A75.2 75.2 0 0 0 46.94 338.57Z" fill="rgb(255,255,255)"/><path d="M41.10 332.93 A82.2 82.2 0 0 1 42.59 327.98 L49.23 330.21 A75.2 75.2 0 0 0 47.86 334.74Z" fill="rgb(255,255,255)"/><path d="M42.32 328.80 A82.2 82.2 0 0 1 44.07 323.94 L50.58 326.52 A75.2 75.2 0 0 0 48.98 330.96Z" fill="rgb(255,255,255)"/><path d="M43.76 324.74 A82.2 82.2 0 0 1 45.76 319.98 L52.13 322.90 A75.2 75.2 0 0 0 50.29 327.25Z" fill="rgb(255,255,255)"/><path d="M45.41 320.77 A82.2 82.2 0 0 1 47.65 316.12 L53.86 319.36 A75.2 75.2 0 0 0 51.80 323.61Z" fill="rgb(255,255,255)"/><path d="M47.26 316.88 A82.2 82.2 0 0 1 49.75 312.36 L55.77 315.92 A75.2 75.2 0 0 0 53.50 320.06Z" fill="rgb(255,255,255)"/><path d="M49.31 313.10 A82.2 82.2 0 0 1 52.03 308.71 L57.86 312.58 A75.2 75.2 0 0 0 55.37 316.60Z" fill="rgb(255,255,255)"/><path d="M51.56 309.43 A82.2 82.2 0 0 1 54.51 305.19 L60.13 309.36 A75.2 75.2 0 0 0 57.43 313.24Z" fill="rgb(255,255,255)"/><path d="M54.00 305.88 A82.2 82.2 0 0 1 57.16 301.80 L62.56 306.27 A75.2 75.2 0 0 0 59.66 310.00Z" fill="rgb(255,255,255)"/><path d="M56.62 302.47 A82.2 82.2 0 0 1 59.99 298.56 L65.15 303.30 A75.2 75.2 0 0 0 62.06 306.88Z" fill="rgb(255,255,255)"/><path d="M59.41 299.20 A82.2 82.2 0 0 1 62.99 295.47 L67.89 300.47 A75.2 75.2 0 0 0 64.62 303.88Z" fill="rgb(255,255,255)"/><path d="M62.38 296.08 A82.2 82.2 0 0 1 66.14 292.54 L70.77 297.79 A75.2 75.2 0 0 0 67.33 301.03Z" fill="rgb(255,255,255)"/><path d="M65.50 293.11 A82.2 82.2 0 0 1 69.44 289.78 L73.79 295.27 A75.2 75.2 0 0 0 70.18 298.32Z" fill="rgb(255,255,255)"/><path d="M68.77 290.32 A82.2 82.2 0 0 1 72.88 287.20 L76.94 292.90 A75.2 75.2 0 0 0 73.18 295.76Z" fill="rgb(255,255,255)"/><path d="M72.18 287.70 A82.2 82.2 0 0 1 76.46 284.80 L80.21 290.71 A75.2 75.2 0 0 0 76.30 293.36Z" fill="rgb(255,255,255)"/><path d="M75.73 285.26 A82.2 82.2 0 0 1 80.15 282.59 L83.58 288.68 A75.2 75.2 0 0 0 79.54 291.13Z" fill="rgb(255,255,255)"/><path d="M79.40 283.01 A82.2 82.2 0 0 1 83.95 280.57 L87.06 286.84 A75.2 75.2 0 0 0 82.90 289.07Z" fill="rgb(255,255,255)"/><path d="M83.18 280.96 A82.2 82.2 0 0 1 87.85 278.76 L90.63 285.18 A75.2 75.2 0 0 0 86.36 287.20Z" fill="rgb(255,255,255)"/><path d="M87.07 279.11 A82.2 82.2 0 0 1 91.85 277.16 L94.29 283.72 A75.2 75.2 0 0 0 89.91 285.50Z" fill="rgb(255,255,255)"/><path d="M91.04 277.46 A82.2 82.2 0 0 1 95.92 275.76 L98.01 282.44 A75.2 75.2 0 0 0 93.55 283.99Z" fill="rgb(255,255,255)"/><path d="M95.10 276.02 A82.2 82.2 0 0 1 100.06 274.58 L101.80 281.36 A75.2 75.2 0 0 0 97.26 282.68Z" fill="rgb(255,255,255)"/><path d="M99.23 274.80 A82.2 82.2 0 0 1 104.25 273.62 L105.64 280.48 A75.2 75.2 0 0 0 101.04 281.56Z" fill="rgb(255,255,255)"/><path d="M103.41 273.80 A82.2 82.2 0 0 1 108.49 272.88 L109.51 279.81 A75.2 75.2 0 0 0 104.87 280.64Z" fill="rgb(255,255,255)"/><path d="M107.64 273.01 A82.2 82.2 0 0 1 112.76 272.36 L113.42 279.33 A75.2 75.2 0 0 0 108.74 279.93Z" fill="rgb(255,255,255)"/><path d="M111.91 272.45 A82.2 82.2 0 0 1 117.06 272.07 L117.35 279.07 A75.2 75.2 0 0 0 112.64 279.41Z" fill="rgb(255,254,254)"/><path d="M116.20 272.11 A82.2 82.2 0 0 1 121.36 272.00 L121.29 279.00 A75.2 75.2 0 0 0 116.56 279.10Z" fill="rgb(255,247,247)"/><path d="M120.50 272.00 A82.2 82.2 0 0 1 125.66 272.16 L125.22 279.15 A75.2 75.2 0 0 0 120.50 279.00Z" fill="rgb(255,241,241)"/><path d="M124.80 272.11 A82.2 82.2 0 0 1 129.95 272.54 L129.14 279.50 A75.2 75.2 0 0 0 124.44 279.10Z" fill="rgb(255,234,234)"/><path d="M129.09 272.45 A82.2 82.2 0 0 1 134.21 273.15 L133.04 280.05 A75.2 75.2 0 0 0 128.36 279.41Z" fill="rgb(255,228,228)"/><path d="M133.36 273.01 A82.2 82.2 0 0 1 138.43 273.98 L136.90 280.81 A75.2 75.2 0 0 0 132.26 279.93Z" fill="rgb(255,221,221)"/><path d="M137.59 273.80 A82.2 82.2 0 0 1 142.61 275.03 L140.72 281.77 A75.2 75.2 0 0 0 136.13 280.64Z" fill="rgb(255,214,214)"/><path d="M141.77 274.80 A82.2 82.2 0 0 1 146.72 276.29 L144.49 282.93 A75.2 75.2 0 0 0 139.96 281.56Z" fill="rgb(255,208,208)"/><path d="M145.90 276.02 A82.2 82.2 0 0 1 150.76 277.77 L148.18 284.28 A75.2 75.2 0 0 0 143.74 282.68Z" fill="rgb(255,201,201)"/><path d="M149.96 277.46 A82.2 82.2 0 0 1 154.72 279.46 L151.80 285.83 A75.2 75.2 0 0 0 147.45 283.99Z" fill="rgb(255,190,190)"/><path d="M153.93 279.11 A82.2 82.2 0 0 1 158.58 281.35 L155.34 287.56 A75.2 75.2 0 0 0 151.09 285.50Z" fill="rgb(254,178,178)"/><path d="M157.82 280.96 A82.2 82.2 0 0 1 162.34 283.45 L158.78 289.47 A75.2 75.2 0 0 0 154.64 287.20Z" fill="rgb(254,166,166)"/><path d="M161.60 283.01 A82.2 82.2 0 0 1 165.99 285.73 L162.12 291.56 A75.2 75.2 0 0 0 158.10 289.07Z" fill="rgb(254,154,154)"/><path d="M165.27 285.26 A82.2 82.2 0 0 1 169.51 288.21 L165.34 293.83 A75.2 75.2 0 0 0 161.46 291.13Z" fill="rgb(253,142,142)"/><path d="M168.82 287.70 A82.2 82.2 0 0 1 172.90 290.86 L168.43 296.26 A75.2 75.2 0 0 0 164.70 293.36Z" fill="rgb(253,130,130)"/><path d="M172.23 290.32 A82.2 82.2 0 0 1 176.14 293.69 L171.40 298.85 A75.2 75.2 0 0 0 167.82 295.76Z" fill="rgb(252,118,118)"/><path d="M175.50 293.11 A82.2 82.2 0 0 1 179.23 296.69 L174.23 301.59 A75.2 75.2 0 0 0 170.82 298.32Z" fill="rgb(252,106,106)"/><path d="M178.62 296.08 A82.2 82.2 0 0 1 182.16 299.84 L176.91 304.47 A75.2 75.2 0 0 0 173.67 301.03Z" fill="rgb(252,94,94)"/><path d="M181.59 299.20 A82.2 82.2 0 0 1 184.92 303.14 L179.43 307.49 A75.2 75.2 0 0 0 176.38 303.88Z" fill="rgb(251,82,82)"/><path d="M184.38 302.47 A82.2 82.2 0 0 1 187.50 306.58 L181.80 310.64 A75.2 75.2 0 0 0 178.94 306.88Z" fill="rgb(251,70,70)"/><path d="M187.00 305.88 A82.2 82.2 0 0 1 189.90 310.16 L183.99 313.91 A75.2 75.2 0 0 0 181.34 310.00Z" fill="rgb(251,58,58)"/><path d="M189.44 309.43 A82.2 82.2 0 0 1 192.11 313.85 L186.02 317.28 A75.2 75.2 0 0 0 183.57 313.24Z" fill="rgb(250,46,46)"/><path d="M191.69 313.10 A82.2 82.2 0 0 1 194.13 317.65 L187.86 320.76 A75.2 75.2 0 0 0 185.63 316.60Z" fill="rgb(250,37,37)"/><path d="M193.74 316.88 A82.2 82.2 0 0 1 195.94 321.55 L189.52 324.33 A75.2 75.2 0 0 0 187.50 320.06Z" fill="rgb(251,31,31)"/><path d="M195.59 320.77 A82.2 82.2 0 0 1 197.54 325.55 L190.98 327.99 A75.2 75.2 0 0 0 189.20 323.61Z" fill="rgb(252,25,25)"/><path d="M197.24 324.74 A82.2 82.2 0 0 1 198.94 329.62 L192.26 331.71 A75.2 75.2 0 0 0 190.71 327.25Z" fill="rgb(253,19,19)"/><path d="M198.68 328.80 A82.2 82.2 0 0 1 200.12 333.76 L193.34 335.50 A75.2 75.2 0 0 0 192.02 330.96Z" fill="rgb(253,13,13)"/><path d="M199.90 332.93 A82.2 82.2 0 0 1 201.08 337.95 L194.22 339.34 A75.2 75.2 0 0 0 193.14 334.74Z" fill="rgb(254,7,7)"/><path d="M200.90 337.11 A82.2 82.2 0 0 1 201.82 342.19 L194.89 343.21 A75.2 75.2 0 0 0 194.06 338.57Z" fill="rgb(255,1,1)"/><path d="M201.69 341.34 A82.2 82.2 0 0 1 202.34 346.46 L195.37 347.12 A75.2 75.2 0 0 0 194.77 342.44Z" fill="rgb(255,0,0)"/><path d="M202.25 345.61 A82.2 82.2 0 0 1 202.63 350.76 L195.63 351.05 A75.2 75.2 0 0 0 195.29 346.34Z" fill="rgb(255,0,0)"/><path d="M202.59 349.90 A82.2 82.2 0 0 1 202.70 355.06 L195.70 354.99 A75.2 75.2 0 0 0 195.60 350.26Z" fill="rgb(255,0,0)"/><path d="M202.70 354.20 A82.2 82.2 0 0 1 202.54 359.36 L195.55 358.92 A75.2 75.2 0 0 0 195.70 354.20Z" fill="rgb(255,0,0)"/><path d="M202.59 358.50 A82.2 82.2 0 0 1 202.16 363.65 L195.20 362.84 A75.2 75.2 0 0 0 195.60 358.14Z" fill="rgb(255,0,0)"/><path d="M202.25 362.79 A82.2 82.2 0 0 1 201.55 367.91 L194.65 366.74 A75.2 75.2 0 0 0 195.29 362.06Z" fill="rgb(255,0,0)"/><path d="M201.69 367.06 A82.2 82.2 0 0 1 200.72 372.13 L193.89 370.60 A75.2 75.2 0 0 0 194.77 365.96Z" fill="rgb(255,0,0)"/><path d="M200.90 371.29 A82.2 82.2 0 0 1 199.67 376.31 L192.93 374.42 A75.2 75.2 0 0 0 194.06 369.83Z" fill="rgb(255,0,0)"/><path d="M199.90 375.47 A82.2 82.2 0 0 1 198.41 380.42 L191.77 378.19 A75.2 75.2 0 0 0 193.14 373.66Z" fill="rgb(255,0,0)"/><path d="M198.68 379.60 A82.2 82.2 0 0 1 196.93 384.46 L190.42 381.88 A75.2 75.2 0 0 0 192.02 377.44Z" fill="rgb(255,0,0)"/><path d="M197.24 383.66 A82.2 82.2 0 0 1 195.24 388.42 L188.87 385.50 A75.2 75.2 0 0 0 190.71 381.15Z" fill="rgb(255,0,0)"/><path d="M195.59 387.63 A82.2 82.2 0 0 1 193.35 392.28 L187.14 389.04 A75.2 75.2 0 0 0 189.20 384.79Z" fill="rgb(255,0,0)"/><path d="M193.74 391.52 A82.2 82.2 0 0 1 191.25 396.04 L185.23 392.48 A75.2 75.2 0 0 0 187.50 388.34Z" fill="rgb(255,0,0)"/><path d="M191.69 395.30 A82.2 82.2 0 0 1 188.97 399.69 L183.14 395.82 A75.2 75.2 0 0 0 185.63 391.80Z" fill="rgb(255,0,0)"/><path d="M189.44 398.97 A82.2 82.2 0 0 1 186.49 403.21 L180.87 399.04 A75.2 75.2 0 0 0 183.57 395.16Z" fill="rgb(255,0,0)"/><path d="M187.00 402.52 A82.2 82.2 0 0 1 183.84 406.60 L178.44 402.13 A75.2 75.2 0 0 0 181.34 398.40Z" fill="rgb(255,0,0)"/><path d="M184.38 405.93 A82.2 82.2 0 0 1 181.01 409.84 L175.85 405.10 A75.2 75.2 0 0 0 178.94 401.52Z" fill="rgb(255,0,0)"/><path d="M181.59 409.20 A82.2 82.2 0 0 1 178.01 412.93 L173.11 407.93 A75.2 75.2 0 0 0 176.38 404.52Z" fill="rgb(255,0,0)"/><path d="M178.62 412.32 A82.2 82.2 0 0 1 174.86 415.86 L170.23 410.61 A75.2 75.2 0 0 0 173.67 407.37Z" fill="rgb(255,0,0)"/><path d="M175.50 415.29 A82.2 82.2 0 0 1 171.56 418.62 L167.21 413.13 A75.2 75.2 0 0 0 170.82 410.08Z" fill="rgb(255,0,0)"/><path d="M172.23 418.08 A82.2 82.2 0 0 1 168.12 421.20 L164.06 415.50 A75.2 75.2 0 0 0 167.82 412.64Z" fill="rgb(255,0,0)"/><path d="M168.82 420.70 A82.2 82.2 0 0 1 164.54 423.60 L160.79 417.69 A75.2 75.2 0 0 0 164.70 415.04Z" fill="rgb(255,0,0)"/><path d="M165.27 423.14 A82.2 82.2 0 0 1 161.60 425.39 L158.10 419.33 A75.2 75.2 0 0 0 161.46 417.27Z" fill="rgb(255,0,0)"/><path d="M63.98 407.52 L60.93 410.40" stroke="#c0d4d4" stroke-width="0.9" opacity="0.85"/><path d="M52.85 388.17 L47.31 390.96" stroke="#c0d4d4" stroke-width="0.9" opacity="0.85"/><path d="M43.98 367.69 L39.84 368.42" stroke="#c0d4d4" stroke-width="0.9" opacity="0.85"/><path d="M45.31 345.41 L39.15 344.69" stroke="#c0d4d4" stroke-width="0.9" opacity="0.85"/><path d="M49.15 323.42 L45.30 321.76" stroke="#c0d4d4" stroke-width="0.9" opacity="0.85"/><path d="M62.51 305.54 L57.76 301.56" stroke="#c0d4d4" stroke-width="0.9" opacity="0.85"/><path d="M77.80 289.28 L75.50 285.77" stroke="#c0d4d4" stroke-width="0.9" opacity="0.85"/><path d="M98.79 281.68 L97.01 275.74" stroke="#c0d4d4" stroke-width="0.9" opacity="0.85"/><path d="M120.50 276.50 L120.50 272.30" stroke="#c0d4d4" stroke-width="0.9" opacity="0.85"/><path d="M142.21 281.68 L143.99 275.74" stroke="#c0d4d4" stroke-width="0.9" opacity="0.85"/><path d="M163.20 289.28 L165.50 285.77" stroke="#d8e8e8" stroke-width="0.9" opacity="0.85"/><path d="M178.49 305.54 L183.24 301.56" stroke="#d8e8e8" stroke-width="0.9" opacity="0.85"/><path d="M191.85 323.42 L195.70 321.76" stroke="#d8e8e8" stroke-width="0.9" opacity="0.85"/><path d="M195.69 345.41 L201.85 344.69" stroke="#d8e8e8" stroke-width="0.9" opacity="0.85"/><path d="M197.02 367.69 L201.16 368.42" stroke="#d8e8e8" stroke-width="0.9" opacity="0.85"/><path d="M188.15 388.17 L193.69 390.96" stroke="#d8e8e8" stroke-width="0.9" opacity="0.85"/><path d="M177.02 407.52 L180.07 410.40" stroke="#d8e8e8" stroke-width="0.9" opacity="0.85"/></svg>
<div style="position:absolute;left:80.33px;top:403.40px;font-size:12px;line-height:16px;color:#b4dce8;white-space:nowrap;transform:scaleX(0.9150);transform-origin:50% 50%;">20</div>
<div style="position:absolute;left:55.23px;top:375.50px;font-size:12px;line-height:16px;color:#b4dce8;white-space:nowrap;transform:scaleX(0.9150);transform-origin:50% 50%;">40</div>
<div style="position:absolute;left:48.33px;top:338.00px;font-size:12px;line-height:16px;color:#b4dce8;white-space:nowrap;transform:scaleX(0.9150);transform-origin:50% 50%;">60</div>
<div style="position:absolute;left:64.33px;top:305.30px;font-size:12px;line-height:16px;color:#b4dce8;white-space:nowrap;transform:scaleX(0.9150);transform-origin:50% 50%;">80</div>
<div style="position:absolute;left:91.99px;top:282.00px;font-size:12px;line-height:16px;color:#b4dce8;white-space:nowrap;transform:scaleX(0.9150);transform-origin:50% 50%;">100</div>
<div style="position:absolute;left:129.49px;top:282.00px;font-size:12px;line-height:16px;color:#b4dce8;white-space:nowrap;transform:scaleX(0.9150);transform-origin:50% 50%;">120</div>
<div style="position:absolute;left:158.39px;top:306.30px;font-size:12px;line-height:16px;color:#b4dce8;white-space:nowrap;transform:scaleX(0.9150);transform-origin:50% 50%;">140</div>
<div style="position:absolute;left:172.29px;top:339.40px;font-size:12px;line-height:16px;color:#b4dce8;white-space:nowrap;transform:scaleX(0.9150);transform-origin:50% 50%;">160</div>
<div style="position:absolute;left:164.69px;top:373.40px;font-size:12px;line-height:16px;color:#b4dce8;white-space:nowrap;transform:scaleX(0.9150);transform-origin:50% 50%;">180</div>
<div style="position:absolute;left:143.09px;top:403.40px;font-size:12px;line-height:16px;color:#b4dce8;white-space:nowrap;transform:scaleX(0.9150);transform-origin:50% 50%;">200</div>
<svg style="position:absolute;left:20.5px;top:254.2px" width="200" height="200" viewBox="20.5 254.2 200 200"><path d="M120.30 349.80 L37.89 357.95 L120.70 358.60Z" fill="#add8e6"/></svg>
<div style="position:absolute;left:237px;top:245px;width:205px;height:18px;background:#00008b;"></div>
<div style="position:absolute;left:312.37px;top:245.40px;font-size:12px;line-height:16px;color:#cfe6f4;white-space:nowrap;transform:scaleX(0.9000);transform-origin:50% 50%;">Workload</div>
<svg style="position:absolute;left:239.5px;top:254.2px" width="200" height="200" viewBox="239.5 254.2 200 200"><path d="M298.40 425.39 A82.2 82.2 0 0 1 294.01 422.67 L297.88 416.84 A75.2 75.2 0 0 0 301.90 419.33Z" fill="rgb(255,255,255)"/><path d="M294.73 423.14 A82.2 82.2 0 0 1 290.49 420.19 L294.66 414.57 A75.2 75.2 0 0 0 298.54 417.27Z" fill="rgb(255,255,255)"/><path d="M291.18 420.70 A82.2 82.2 0 0 1 287.10 417.54 L291.57 412.14 A75.2 75.2 0 0 0 295.30 415.04Z" fill="rgb(255,255,255)"/><path d="M287.77 418.08 A82.2 82.2 0 0 1 283.86 414.71 L288.60 409.55 A75.2 75.2 0 0 0 292.18 412.64Z" fill="rgb(255,255,255)"/><path d="M284.50 415.29 A82.2 82.2 0 0 1 280.77 411.71 L285.77 406.81 A75.2 75.2 0 0 0 289.18 410.08Z" fill="rgb(255,255,255)"/><path d="M281.38 412.32 A82.2 82.2 0 0 1 277.84 408.56 L283.09 403.93 A75.2 75.2 0 0 0 286.33 407.37Z" fill="rgb(255,255,255)"/><path d="M278.41 409.20 A82.2 82.2 0 0 1 275.08 405.26 L280.57 400.91 A75.2 75.2 0 0 0 283.62 404.52Z" fill="rgb(255,255,255)"/><path d="M275.62 405.93 A82.2 82.2 0 0 1 272.50 401.82 L278.20 397.76 A75.2 75.2 0 0 0 281.06 401.52Z" fill="rgb(255,255,255)"/><path d="M273.00 402.52 A82.2 82.2 0 0 1 270.10 398.24 L276.01 394.49 A75.2 75.2 0 0 0 278.66 398.40Z" fill="rgb(255,255,255)"/><path d="M270.56 398.97 A82.2 82.2 0 0 1 267.89 394.55 L273.98 391.12 A75.2 75.2 0 0 0 276.43 395.16Z" fill="rgb(255,255,255)"/><path d="M268.31 395.30 A82.2 82.2 0 0 1 265.87 390.75 L272.14 387.64 A75.2 75.2 0 0 0 274.37 391.80Z" fill="rgb(255,255,255)"/><path d="M266.26 391.52 A82.2 82.2 0 0 1 264.06 386.85 L270.48 384.07 A75.2 75.2 0 0 0 272.50 388.34Z" fill="rgb(255,255,255)"/><path d="M264.41 387.63 A82.2 82.2 0 0 1 262.46 382.85 L269.02 380.41 A75.2 75.2 0 0 0 270.80 384.79Z" fill="rgb(255,255,255)"/><path d="M262.76 383.66 A82.2 82.2 0 0 1 261.06 378.78 L267.74 376.69 A75.2 75.2 0 0 0 269.29 381.15Z" fill="rgb(255,255,255)"/><path d="M261.32 379.60 A82.2 82.2 0 0 1 259.88 374.64 L266.66 372.90 A75.2 75.2 0 0 0 267.98 377.44Z" fill="rgb(255,255,255)"/><path d="M260.10 375.47 A82.2 82.2 0 0 1 258.92 370.45 L265.78 369.06 A75.2 75.2 0 0 0 266.86 373.66Z" fill="rgb(255,255,255)"/><path d="M259.10 371.29 A82.2 82.2 0 0 1 258.18 366.21 L265.11 365.19 A75.2 75.2 0 0 0 265.94 369.83Z" fill="rgb(255,255,255)"/><path d="M258.31 367.06 A82.2 82.2 0 0 1 257.66 361.94 L264.63 361.28 A75.2 75.2 0 0 0 265.23 365.96Z" fill="rgb(255,255,250)"/><path d="M257.75 362.79 A82.2 82.2 0 0 1 257.37 357.64 L264.37 357.35 A75.2 75.2 0 0 0 264.71 362.06Z" fill="rgb(255,255,243)"/><path d="M257.41 358.50 A82.2 82.2 0 0 1 257.30 353.34 L264.30 353.41 A75.2 75.2 0 0 0 264.40 358.14Z" fill="rgb(255,255,236)"/><path d="M257.30 354.20 A82.2 82.2 0 0 1 257.46 349.04 L264.45 349.48 A75.2 75.2 0 0 0 264.30 354.20Z" fill="rgb(255,255,230)"/><path d="M257.41 349.90 A82.2 82.2 0 0 1 257.84 344.75 L264.80 345.56 A75.2 75.2 0 0 0 264.40 350.26Z" fill="rgb(255,255,223)"/><path d="M257.75 345.61 A82.2 82.2 0 0 1 258.45 340.49 L265.35 341.66 A75.2 75.2 0 0 0 264.71 346.34Z" fill="rgb(255,255,216)"/><path d="M258.31 341.34 A82.2 82.2 0 0 1 259.28 336.27 L266.11 337.80 A75.2 75.2 0 0 0 265.23 342.44Z" fill="rgb(255,255,210)"/><path d="M259.10 337.11 A82.2 82.2 0 0 1 260.33 332.09 L267.07 333.98 A75.2 75.2 0 0 0 265.94 338.57Z" fill="rgb(255,255,203)"/><path d="M260.10 332.93 A82.2 82.2 0 0 1 261.59 327.98 L268.23 330.21 A75.2 75.2 0 0 0 266.86 334.74Z" fill="rgb(255,255,193)"/><path d="M261.32 328.80 A82.2 82.2 0 0 1 263.07 323.94 L269.58 326.52 A75.2 75.2 0 0 0 267.98 330.96Z" fill="rgb(255,255,179)"/><path d="M262.76 324.74 A82.2 82.2 0 0 1 264.76 319.98 L271.13 322.90 A75.2 75.2 0 0 0 269.29 327.25Z" fill="rgb(255,255,166)"/><path d="M264.41 320.77 A82.2 82.2 0 0 1 266.65 316.12 L272.86 319.36 A75.2 75.2 0 0 0 270.80 323.61Z" fill="rgb(255,255,152)"/><path d="M266.26 316.88 A82.2 82.2 0 0 1 268.75 312.36 L274.77 315.92 A75.2 75.2 0 0 0 272.50 320.06Z" fill="rgb(255,255,138)"/><path d="M268.31 313.10 A82.2 82.2 0 0 1 271.03 308.71 L276.86 312.58 A75.2 75.2 0 0 0 274.37 316.60Z" fill="rgb(255,255,125)"/><path d="M270.56 309.43 A82.2 82.2 0 0 1 273.51 305.19 L279.13 309.36 A75.2 75.2 0 0 0 276.43 313.24Z" fill="rgb(255,255,111)"/><path d="M273.00 305.88 A82.2 82.2 0 0 1 276.16 301.80 L281.56 306.27 A75.2 75.2 0 0 0 278.66 310.00Z" fill="rgb(255,255,97)"/><path d="M275.62 302.47 A82.2 82.2 0 0 1 278.99 298.56 L284.15 303.30 A75.2 75.2 0 0 0 281.06 306.88Z" fill="rgb(255,255,83)"/><path d="M278.41 299.20 A82.2 82.2 0 0 1 281.99 295.47 L286.89 300.47 A75.2 75.2 0 0 0 283.62 303.88Z" fill="rgb(255,255,70)"/><path d="M281.38 296.08 A82.2 82.2 0 0 1 285.14 292.54 L289.77 297.79 A75.2 75.2 0 0 0 286.33 301.03Z" fill="rgb(255,255,56)"/><path d="M284.50 293.11 A82.2 82.2 0 0 1 288.44 289.78 L292.79 295.27 A75.2 75.2 0 0 0 289.18 298.32Z" fill="rgb(255,255,42)"/><path d="M287.77 290.32 A82.2 82.2 0 0 1 291.88 287.20 L295.94 292.90 A75.2 75.2 0 0 0 292.18 295.76Z" fill="rgb(255,255,33)"/><path d="M291.18 287.70 A82.2 82.2 0 0 1 295.46 284.80 L299.21 290.71 A75.2 75.2 0 0 0 295.30 293.36Z" fill="rgb(255,255,25)"/><path d="M294.73 285.26 A82.2 82.2 0 0 1 299.15 282.59 L302.58 288.68 A75.2 75.2 0 0 0 298.54 291.13Z" fill="rgb(255,255,17)"/><path d="M298.40 283.01 A82.2 82.2 0 0 1 302.95 280.57 L306.06 286.84 A75.2 75.2 0 0 0 301.90 289.07Z" fill="rgb(255,255,9)"/><path d="M302.18 280.96 A82.2 82.2 0 0 1 306.85 278.76 L309.63 285.18 A75.2 75.2 0 0 0 305.36 287.20Z" fill="rgb(255,255,1)"/><path d="M306.07 279.11 A82.2 82.2 0 0 1 310.85 277.16 L313.29 283.72 A75.2 75.2 0 0 0 308.91 285.50Z" fill="rgb(255,255,0)"/><path d="M310.04 277.46 A82.2 82.2 0 0 1 314.92 275.76 L317.01 282.44 A75.2 75.2 0 0 0 312.55 283.99Z" fill="rgb(255,255,0)"/><path d="M314.10 276.02 A82.2 82.2 0 0 1 319.06 274.58 L320.80 281.36 A75.2 75.2 0 0 0 316.26 282.68Z" fill="rgb(255,255,0)"/><path d="M318.23 274.80 A82.2 82.2 0 0 1 323.25 273.62 L324.64 280.48 A75.2 75.2 0 0 0 320.04 281.56Z" fill="rgb(255,255,0)"/><path d="M322.41 273.80 A82.2 82.2 0 0 1 327.49 272.88 L328.51 279.81 A75.2 75.2 0 0 0 323.87 280.64Z" fill="rgb(255,255,0)"/><path d="M326.64 273.01 A82.2 82.2 0 0 1 331.76 272.36 L332.42 279.33 A75.2 75.2 0 0 0 327.74 279.93Z" fill="rgb(255,255,0)"/><path d="M330.91 272.45 A82.2 82.2 0 0 1 336.06 272.07 L336.35 279.07 A75.2 75.2 0 0 0 331.64 279.41Z" fill="rgb(255,255,0)"/><path d="M335.20 272.11 A82.2 82.2 0 0 1 340.36 272.00 L340.29 279.00 A75.2 75.2 0 0 0 335.56 279.10Z" fill="rgb(255,255,0)"/><path d="M339.50 272.00 A82.2 82.2 0 0 1 344.66 272.16 L344.22 279.15 A75.2 75.2 0 0 0 339.50 279.00Z" fill="rgb(255,255,0)"/><path d="M343.80 272.11 A82.2 82.2 0 0 1 348.95 272.54 L348.14 279.50 A75.2 75.2 0 0 0 343.44 279.10Z" fill="rgb(255,255,0)"/><path d="M348.09 272.45 A82.2 82.2 0 0 1 353.21 273.15 L352.04 280.05 A75.2 75.2 0 0 0 347.36 279.41Z" fill="rgb(255,255,0)"/><path d="M352.36 273.01 A82.2 82.2 0 0 1 357.43 273.98 L355.90 280.81 A75.2 75.2 0 0 0 351.26 279.93Z" fill="rgb(255,255,1)"/><path d="M356.59 273.80 A82.2 82.2 0 0 1 361.61 275.03 L359.72 281.77 A75.2 75.2 0 0 0 355.13 280.64Z" fill="rgb(255,252,7)"/><path d="M360.77 274.80 A82.2 82.2 0 0 1 365.72 276.29 L363.49 282.93 A75.2 75.2 0 0 0 358.96 281.56Z" fill="rgb(255,250,13)"/><path d="M364.90 276.02 A82.2 82.2 0 0 1 369.76 277.77 L367.18 284.28 A75.2 75.2 0 0 0 362.74 282.68Z" fill="rgb(255,248,19)"/><path d="M368.96 277.46 A82.2 82.2 0 0 1 373.72 279.46 L370.80 285.83 A75.2 75.2 0 0 0 366.45 283.99Z" fill="rgb(255,246,25)"/><path d="M372.93 279.11 A82.2 82.2 0 0 1 377.58 281.35 L374.34 287.56 A75.2 75.2 0 0 0 370.09 285.50Z" fill="rgb(255,243,31)"/><path d="M376.82 280.96 A82.2 82.2 0 0 1 381.34 283.45 L377.78 289.47 A75.2 75.2 0 0 0 373.64 287.20Z" fill="rgb(255,241,37)"/><path d="M380.60 283.01 A82.2 82.2 0 0 1 384.99 285.73 L381.12 291.56 A75.2 75.2 0 0 0 377.10 289.07Z" fill="rgb(255,239,43)"/><path d="M384.27 285.26 A82.2 82.2 0 0 1 388.51 288.21 L384.34 293.83 A75.2 75.2 0 0 0 380.46 291.13Z" fill="rgb(255,236,49)"/><path d="M387.82 287.70 A82.2 82.2 0 0 1 391.90 290.86 L387.43 296.26 A75.2 75.2 0 0 0 383.70 293.36Z" fill="rgb(255,235,56)"/><path d="M391.23 290.32 A82.2 82.2 0 0 1 395.14 293.69 L390.40 298.85 A75.2 75.2 0 0 0 386.82 295.76Z" fill="rgb(255,234,63)"/><path d="M394.50 293.11 A82.2 82.2 0 0 1 398.23 296.69 L393.23 301.59 A75.2 75.2 0 0 0 389.82 298.32Z" fill="rgb(255,233,70)"/><path d="M397.62 296.08 A82.2 82.2 0 0 1 401.16 299.84 L395.91 304.47 A75.2 75.2 0 0 0 392.67 301.03Z" fill="rgb(255,232,78)"/><path d="M400.59 299.20 A82.2 82.2 0 0 1 403.92 303.14 L398.43 307.49 A75.2 75.2 0 0 0 395.38 303.88Z" fill="rgb(255,231,85)"/><path d="M403.38 302.47 A82.2 82.2 0 0 1 406.50 306.58 L400.80 310.64 A75.2 75.2 0 0 0 397.94 306.88Z" fill="rgb(255,230,92)"/><path d="M406.00 305.88 A82.2 82.2 0 0 1 408.90 310.16 L402.99 313.91 A75.2 75.2 0 0 0 400.34 310.00Z" fill="rgb(255,229,99)"/><path d="M408.44 309.43 A82.2 82.2 0 0 1 411.11 313.85 L405.02 317.28 A75.2 75.2 0 0 0 402.57 313.24Z" fill="rgb(255,228,106)"/><path d="M410.69 313.10 A82.2 82.2 0 0 1 413.13 317.65 L406.86 320.76 A75.2 75.2 0 0 0 404.63 316.60Z" fill="rgb(255,229,117)"/><path d="M412.74 316.88 A82.2 82.2 0 0 1 414.94 321.55 L408.52 324.33 A75.2 75.2 0 0 0 406.50 320.06Z" fill="rgb(255,231,130)"/><path d="M414.59 320.77 A82.2 82.2 0 0 1 416.54 325.55 L409.98 327.99 A75.2 75.2 0 0 0 408.20 323.61Z" fill="rgb(255,233,144)"/><path d="M416.24 324.74 A82.2 82.2 0 0 1 417.94 329.62 L411.26 331.71 A75.2 75.2 0 0 0 409.71 327.25Z" fill="rgb(255,235,157)"/><path d="M417.68 328.80 A82.2 82.2 0 0 1 419.12 333.76 L412.34 335.50 A75.2 75.2 0 0 0 411.02 330.96Z" fill="rgb(255,237,171)"/><path d="M418.90 332.93 A82.2 82.2 0 0 1 420.08 337.95 L413.22 339.34 A75.2 75.2 0 0 0 412.14 334.74Z" fill="rgb(255,240,184)"/><path d="M419.90 337.11 A82.2 82.2 0 0 1 420.82 342.19 L413.89 343.21 A75.2 75.2 0 0 0 413.06 338.57Z" fill="rgb(255,242,198)"/><path d="M420.69 341.34 A82.2 82.2 0 0 1 421.34 346.46 L414.37 347.12 A75.2 75.2 0 0 0 413.77 342.44Z" fill="rgb(255,244,207)"/><path d="M421.25 345.61 A82.2 82.2 0 0 1 421.63 350.76 L414.63 351.05 A75.2 75.2 0 0 0 414.29 346.34Z" fill="rgb(255,246,215)"/><path d="M421.59 349.90 A82.2 82.2 0 0 1 421.70 355.06 L414.70 354.99 A75.2 75.2 0 0 0 414.60 350.26Z" fill="rgb(255,248,223)"/><path d="M421.70 354.20 A82.2 82.2 0 0 1 421.54 359.36 L414.55 358.92 A75.2 75.2 0 0 0 414.70 354.20Z" fill="rgb(255,249,232)"/><path d="M421.59 358.50 A82.2 82.2 0 0 1 421.16 363.65 L414.20 362.84 A75.2 75.2 0 0 0 414.60 358.14Z" fill="rgb(255,251,240)"/><path d="M421.25 362.79 A82.2 82.2 0 0 1 420.55 367.91 L413.65 366.74 A75.2 75.2 0 0 0 414.29 362.06Z" fill="rgb(255,253,248)"/><path d="M420.69 367.06 A82.2 82.2 0 0 1 419.72 372.13 L412.89 370.60 A75.2 75.2 0 0 0 413.77 365.96Z" fill="rgb(255,255,255)"/><path d="M419.90 371.29 A82.2 82.2 0 0 1 418.67 376.31 L411.93 374.42 A75.2 75.2 0 0 0 413.06 369.83Z" fill="rgb(254,254,254)"/><path d="M418.90 375.47 A82.2 82.2 0 0 1 417.41 380.42 L410.77 378.19 A75.2 75.2 0 0 0 412.14 373.66Z" fill="rgb(253,253,253)"/><path d="M417.68 379.60 A82.2 82.2 0 0 1 415.93 384.46 L409.42 381.88 A75.2 75.2 0 0 0 411.02 377.44Z" fill="rgb(252,252,252)"/><path d="M416.24 383.66 A82.2 82.2 0 0 1 414.24 388.42 L407.87 385.50 A75.2 75.2 0 0 0 409.71 381.15Z" fill="rgb(250,250,250)"/><path d="M414.59 387.63 A82.2 82.2 0 0 1 412.35 392.28 L406.14 389.04 A75.2 75.2 0 0 0 408.20 384.79Z" fill="rgb(249,249,249)"/><path d="M412.74 391.52 A82.2 82.2 0 0 1 410.25 396.04 L404.23 392.48 A75.2 75.2 0 0 0 406.50 388.34Z" fill="rgb(248,248,248)"/><path d="M410.69 395.30 A82.2 82.2 0 0 1 407.97 399.69 L402.14 395.82 A75.2 75.2 0 0 0 404.63 391.80Z" fill="rgb(247,247,247)"/><path d="M408.44 398.97 A82.2 82.2 0 0 1 405.49 403.21 L399.87 399.04 A75.2 75.2 0 0 0 402.57 395.16Z" fill="rgb(246,246,246)"/><path d="M406.00 402.52 A82.2 82.2 0 0 1 402.84 406.60 L397.44 402.13 A75.2 75.2 0 0 0 400.34 398.40Z" fill="rgb(245,245,245)"/><path d="M403.38 405.93 A82.2 82.2 0 0 1 400.01 409.84 L394.85 405.10 A75.2 75.2 0 0 0 397.94 401.52Z" fill="rgb(243,243,243)"/><path d="M400.59 409.20 A82.2 82.2 0 0 1 397.01 412.93 L392.11 407.93 A75.2 75.2 0 0 0 395.38 404.52Z" fill="rgb(242,242,242)"/><path d="M397.62 412.32 A82.2 82.2 0 0 1 393.86 415.86 L389.23 410.61 A75.2 75.2 0 0 0 392.67 407.37Z" fill="rgb(240,240,240)"/><path d="M394.50 415.29 A82.2 82.2 0 0 1 390.56 418.62 L386.21 413.13 A75.2 75.2 0 0 0 389.82 410.08Z" fill="rgb(239,239,239)"/><path d="M391.23 418.08 A82.2 82.2 0 0 1 387.12 421.20 L383.06 415.50 A75.2 75.2 0 0 0 386.82 412.64Z" fill="rgb(238,238,238)"/><path d="M387.82 420.70 A82.2 82.2 0 0 1 383.54 423.60 L379.79 417.69 A75.2 75.2 0 0 0 383.70 415.04Z" fill="rgb(236,236,236)"/><path d="M384.27 423.14 A82.2 82.2 0 0 1 380.60 425.39 L377.10 419.33 A75.2 75.2 0 0 0 380.46 417.27Z" fill="rgb(235,235,235)"/><path d="M284.56 409.14 L281.59 412.11" stroke="#c0d4d4" stroke-width="0.9" opacity="0.85"/><path d="M273.94 392.05 L268.57 395.15" stroke="#c0d4d4" stroke-width="0.9" opacity="0.85"/><path d="M264.45 374.31 L260.39 375.40" stroke="#c0d4d4" stroke-width="0.9" opacity="0.85"/><path d="M263.80 354.20 L257.60 354.20" stroke="#c0d4d4" stroke-width="0.9" opacity="0.85"/><path d="M264.45 334.09 L260.39 333.00" stroke="#c0d4d4" stroke-width="0.9" opacity="0.85"/><path d="M273.94 316.35 L268.57 313.25" stroke="#c0d4d4" stroke-width="0.9" opacity="0.85"/><path d="M284.56 299.26 L281.59 296.29" stroke="#c0d4d4" stroke-width="0.9" opacity="0.85"/><path d="M301.65 288.64 L298.55 283.27" stroke="#c0d4d4" stroke-width="0.9" opacity="0.85"/><path d="M319.39 279.15 L318.30 275.09" stroke="#c0d4d4" stroke-width="0.9" opacity="0.85"/><path d="M339.50 278.50 L339.50 272.30" stroke="#c0d4d4" stroke-width="0.9" opacity="0.85"/><path d="M359.61 279.15 L360.70 275.09" stroke="#c0d4d4" stroke-width="0.9" opacity="0.85"/><path d="M377.35 288.64 L380.45 283.27" stroke="#c0d4d4" stroke-width="0.9" opacity="0.85"/><path d="M394.44 299.26 L397.41 296.29" stroke="#c0d4d4" stroke-width="0.9" opacity="0.85"/><path d="M405.06 316.35 L410.43 313.25" stroke="#c0d4d4" stroke-width="0.9" opacity="0.85"/><path d="M414.55 334.09 L418.61 333.00" stroke="#c0d4d4" stroke-width="0.9" opacity="0.85"/><path d="M415.20 354.20 L421.40 354.20" stroke="#c0d4d4" stroke-width="0.9" opacity="0.85"/><path d="M414.55 374.31 L418.61 375.40" stroke="#c0d4d4" stroke-width="0.9" opacity="0.85"/><path d="M405.06 392.05 L410.43 395.15" stroke="#c0d4d4" stroke-width="0.9" opacity="0.85"/><path d="M394.44 409.14 L397.41 412.11" stroke="#c0d4d4" stroke-width="0.9" opacity="0.85"/></svg>
<div style="position:absolute;left:302.46px;top:403.40px;font-size:12px;line-height:16px;color:#b4dce8;white-space:nowrap;">0</div>
<div style="position:absolute;left:276.96px;top:377.30px;font-size:12px;line-height:16px;color:#b4dce8;white-space:nowrap;transform:scaleX(0.9150);transform-origin:50% 50%;">0.1</div>
<div style="position:absolute;left:267.26px;top:346.30px;font-size:12px;line-height:16px;color:#b4dce8;white-space:nowrap;transform:scaleX(0.9150);transform-origin:50% 50%;">0.2</div>
<div style="position:absolute;left:276.96px;top:315.00px;font-size:12px;line-height:16px;color:#b4dce8;white-space:nowrap;transform:scaleX(0.9150);transform-origin:50% 50%;">0.3</div>
<div style="position:absolute;left:298.16px;top:289.30px;font-size:12px;line-height:16px;color:#b4dce8;white-space:nowrap;transform:scaleX(0.9150);transform-origin:50% 50%;">0.4</div>
<div style="position:absolute;left:331.26px;top:279.30px;font-size:12px;line-height:16px;color:#b4dce8;white-space:nowrap;transform:scaleX(0.9150);transform-origin:50% 50%;">0.5</div>
<div style="position:absolute;left:363.96px;top:289.30px;font-size:12px;line-height:16px;color:#b4dce8;white-space:nowrap;transform:scaleX(0.9150);transform-origin:50% 50%;">0.6</div>
<div style="position:absolute;left:385.16px;top:315.00px;font-size:12px;line-height:16px;color:#b4dce8;white-space:nowrap;transform:scaleX(0.9150);transform-origin:50% 50%;">0.7</div>
<div style="position:absolute;left:395.26px;top:346.30px;font-size:12px;line-height:16px;color:#b4dce8;white-space:nowrap;transform:scaleX(0.9150);transform-origin:50% 50%;">0.8</div>
<div style="position:absolute;left:385.16px;top:377.30px;font-size:12px;line-height:16px;color:#b4dce8;white-space:nowrap;transform:scaleX(0.9150);transform-origin:50% 50%;">0.9</div>
<div style="position:absolute;left:368.96px;top:403.40px;font-size:12px;line-height:16px;color:#b4dce8;white-space:nowrap;">1</div>
<svg style="position:absolute;left:239.5px;top:254.2px" width="200" height="200" viewBox="239.5 254.2 200 200"><path d="M343.79 355.16 L357.54 273.49 L335.21 353.24Z" fill="#add8e6"/></svg>
<div style="position:absolute;left:18px;top:457px;width:205px;height:18px;background:#00008b;"></div>
<div style="position:absolute;left:68.77px;top:457.40px;font-size:12px;line-height:16px;color:#cfe6f4;white-space:nowrap;transform:scaleX(0.9000);transform-origin:50% 50%;">High Engagement</div>
<svg style="position:absolute;left:20.5px;top:466.20000000000005px" width="200" height="200" viewBox="20.5 466.20000000000005 200 200"><path d="M79.40 637.39 A82.2 82.2 0 0 1 75.01 634.67 L78.88 628.84 A75.2 75.2 0 0 0 82.90 631.33Z" fill="rgb(255,255,255)"/><path d="M75.73 635.14 A82.2 82.2 0 0 1 71.49 632.19 L75.66 626.57 A75.2 75.2 0 0 0 79.54 629.27Z" fill="rgb(255,255,255)"/><path d="M72.18 632.70 A82.2 82.2 0 0 1 68.10 629.54 L72.57 624.14 A75.2 75.2 0 0 0 76.30 627.04Z" fill="rgb(255,255,255)"/><path d="M68.77 630.08 A82.2 82.2 0 0 1 64.86 626.71 L69.60 621.55 A75.2 75.2 0 0 0 73.18 624.64Z" fill="rgb(255,255,255)"/><path d="M65.50 627.29 A82.2 82.2 0 0 1 61.77 623.71 L66.77 618.81 A75.2 75.2 0 0 0 70.18 622.08Z" fill="rgb(255,255,255)"/><path d="M62.38 624.32 A82.2 82.2 0 0 1 58.84 620.56 L64.09 615.93 A75.2 75.2 0 0 0 67.33 619.37Z" fill="rgb(255,255,255)"/><path d="M59.41 621.20 A82.2 82.2 0 0 1 56.08 617.26 L61.57 612.91 A75.2 75.2 0 0 0 64.62 616.52Z" fill="rgb(255,255,255)"/><path d="M56.62 617.93 A82.2 82.2 0 0 1 53.50 613.82 L59.20 609.76 A75.2 75.2 0 0 0 62.06 613.52Z" fill="rgb(255,255,255)"/><path d="M54.00 614.52 A82.2 82.2 0 0 1 51.10 610.24 L57.01 606.49 A75.2 75.2 0 0 0 59.66 610.40Z" fill="rgb(255,255,255)"/><path d="M51.56 610.97 A82.2 82.2 0 0 1 48.89 606.55 L54.98 603.12 A75.2 75.2 0 0 0 57.43 607.16Z" fill="rgb(255,255,255)"/><path d="M49.31 607.30 A82.2 82.2 0 0 1 46.87 602.75 L53.14 599.64 A75.2 75.2 0 0 0 55.37 603.80Z" fill="rgb(255,255,255)"/><path d="M47.26 603.52 A82.2 82.2 0 0 1 45.06 598.85 L51.48 596.07 A75.2 75.2 0 0 0 53.50 600.34Z" fill="rgb(255,255,255)"/><path d="M45.41 599.63 A82.2 82.2 0 0 1 43.46 594.85 L50.02 592.41 A75.2 75.2 0 0 0 51.80 596.79Z" fill="rgb(255,255,255)"/><path d="M43.76 595.66 A82.2 82.2 0 0 1 42.06 590.78 L48.74 588.69 A75.2 75.2 0 0 0 50.29 593.15Z" fill="rgb(255,255,255)"/><path d="M42.32 591.60 A82.2 82.2 0 0 1 40.88 586.64 L47.66 584.90 A75.2 75.2 0 0 0 48.98 589.44Z" fill="rgb(255,255,255)"/><path d="M41.10 587.47 A82.2 82.2 0 0 1 39.92 582.45 L46.78 581.06 A75.2 75.2 0 0 0 47.86 585.66Z" fill="rgb(255,255,255)"/><path d="M40.10 583.29 A82.2 82.2 0 0 1 39.18 578.21 L46.11 577.19 A75.2 75.2 0 0 0 46.94 581.83Z" fill="rgb(255,255,255)"/><path d="M39.31 579.06 A82.2 82.2 0 0 1 38.66 573.94 L45.63 573.28 A75.2 75.2 0 0 0 46.23 577.96Z" fill="rgb(255,255,255)"/><path d="M38.75 574.79 A82.2 82.2 0 0 1 38.37 569.64 L45.37 569.35 A75.2 75.2 0 0 0 45.71 574.06Z" fill="rgb(255,255,255)"/><path d="M38.41 570.50 A82.2 82.2 0 0 1 38.30 565.34 L45.30 565.41 A75.2 75.2 0 0 0 45.40 570.14Z" fill="rgb(255,255,255)"/><path d="M38.30 566.20 A82.2 82.2 0 0 1 38.46 561.04 L45.45 561.48 A75.2 75.2 0 0 0 45.30 566.20Z" fill="rgb(255,255,255)"/><path d="M38.41 561.90 A82.2 82.2 0 0 1 38.84 556.75 L45.80 557.56 A75.2 75.2 0 0 0 45.40 562.26Z" fill="rgb(255,255,255)"/><path d="M38.75 557.61 A82.2 82.2 0 0 1 39.45 552.49 L46.35 553.66 A75.2 75.2 0 0 0 45.71 558.34Z" fill="rgb(255,255,255)"/><path d="M39.31 553.34 A82.2 82.2 0 0 1 40.28 548.27 L47.11 549.80 A75.2 75.2 0 0 0 46.23 554.44Z" fill="rgb(255,255,255)"/><path d="M40.10 549.11 A82.2 82.2 0 0 1 41.33 544.09 L48.07 545.98 A75.2 75.2 0 0 0 46.94 550.57Z" fill="rgb(255,255,255)"/><path d="M41.10 544.93 A82.2 82.2 0 0 1 42.59 539.98 L49.23 542.21 A75.2 75.2 0 0 0 47.86 546.74Z" fill="rgb(255,255,255)"/><path d="M42.32 540.80 A82.2 82.2 0 0 1 44.07 535.94 L50.58 538.52 A75.2 75.2 0 0 0 48.98 542.96Z" fill="rgb(255,255,255)"/><path d="M43.76 536.74 A82.2 82.2 0 0 1 45.76 531.98 L52.13 534.90 A75.2 75.2 0 0 0 50.29 539.25Z" fill="rgb(255,255,255)"/><path d="M45.41 532.77 A82.2 82.2 0 0 1 47.65 528.12 L53.86 531.36 A75.2 75.2 0 0 0 51.80 535.61Z" fill="rgb(255,255,255)"/><path d="M47.26 528.88 A82.2 82.2 0 0 1 49.75 524.36 L55.77 527.92 A75.2 75.2 0 0 0 53.50 532.06Z" fill="rgb(255,255,255)"/><path d="M49.31 525.10 A82.2 82.2 0 0 1 52.03 520.71 L57.86 524.58 A75.2 75.2 0 0 0 55.37 528.60Z" fill="rgb(255,255,255)"/><path d="M51.56 521.43 A82.2 82.2 0 0 1 54.51 517.19 L60.13 521.36 A75.2 75.2 0 0 0 57.43 525.24Z" fill="rgb(255,255,255)"/><path d="M54.00 517.88 A82.2 82.2 0 0 1 57.16 513.80 L62.56 518.27 A75.2 75.2 0 0 0 59.66 522.00Z" fill="rgb(255,255,255)"/><path d="M56.62 514.47 A82.2 82.2 0 0 1 59.99 510.56 L65.15 515.30 A75.2 75.2 0 0 0 62.06 518.88Z" fill="rgb(255,255,255)"/><path d="M59.41 511.20 A82.2 82.2 0 0 1 62.99 507.47 L67.89 512.47 A75.2 75.2 0 0 0 64.62 515.88Z" fill="rgb(255,255,255)"/><path d="M62.38 508.08 A82.2 82.2 0 0 1 66.14 504.54 L70.77 509.79 A75.2 75.2 0 0 0 67.33 513.03Z" fill="rgb(255,255,255)"/><path d="M65.50 505.11 A82.2 82.2 0 0 1 69.44 501.78 L73.79 507.27 A75.2 75.2 0 0 0 70.18 510.32Z" fill="rgb(255,255,255)"/><path d="M68.77 502.32 A82.2 82.2 0 0 1 72.88 499.20 L76.94 504.90 A75.2 75.2 0 0 0 73.18 507.76Z" fill="rgb(255,255,255)"/><path d="M72.18 499.70 A82.2 82.2 0 0 1 76.46 496.80 L80.21 502.71 A75.2 75.2 0 0 0 76.30 505.36Z" fill="rgb(255,255,255)"/><path d="M75.73 497.26 A82.2 82.2 0 0 1 80.15 494.59 L83.58 500.68 A75.2 75.2 0 0 0 79.54 503.13Z" fill="rgb(255,255,255)"/><path d="M79.40 495.01 A82.2 82.2 0 0 1 83.95 492.57 L87.06 498.84 A75.2 75.2 0 0 0 82.90 501.07Z" fill="rgb(255,255,255)"/><path d="M83.18 492.96 A82.2 82.2 0 0 1 87.85 490.76 L90.63 497.18 A75.2 75.2 0 0 0 86.36 499.20Z" fill="rgb(255,255,255)"/><path d="M87.07 491.11 A82.2 82.2 0 0 1 91.85 489.16 L94.29 495.72 A75.2 75.2 0 0 0 89.91 497.50Z" fill="rgb(255,255,255)"/><path d="M91.04 489.46 A82.2 82.2 0 0 1 95.92 487.76 L98.01 494.44 A75.2 75.2 0 0 0 93.55 495.99Z" fill="rgb(255,255,255)"/><path d="M95.10 488.02 A82.2 82.2 0 0 1 100.06 486.58 L101.80 493.36 A75.2 75.2 0 0 0 97.26 494.68Z" fill="rgb(255,255,255)"/><path d="M99.23 486.80 A82.2 82.2 0 0 1 104.25 485.62 L105.64 492.48 A75.2 75.2 0 0 0 101.04 493.56Z" fill="rgb(255,255,255)"/><path d="M103.41 485.80 A82.2 82.2 0 0 1 108.49 484.88 L109.51 491.81 A75.2 75.2 0 0 0 104.87 492.64Z" fill="rgb(255,255,255)"/><path d="M107.64 485.01 A82.2 82.2 0 0 1 112.76 484.36 L113.42 491.33 A75.2 75.2 0 0 0 108.74 491.93Z" fill="rgb(255,255,255)"/><path d="M111.91 484.45 A82.2 82.2 0 0 1 117.06 484.07 L117.35 491.07 A75.2 75.2 0 0 0 112.64 491.41Z" fill="rgb(255,255,255)"/><path d="M116.20 484.11 A82.2 82.2 0 0 1 121.36 484.00 L121.29 491.00 A75.2 75.2 0 0 0 116.56 491.10Z" fill="rgb(255,255,255)"/><path d="M120.50 484.00 A82.2 82.2 0 0 1 125.66 484.16 L125.22 491.15 A75.2 75.2 0 0 0 120.50 491.00Z" fill="rgb(255,255,255)"/><path d="M124.80 484.11 A82.2 82.2 0 0 1 129.95 484.54 L129.14 491.50 A75.2 75.2 0 0 0 124.44 491.10Z" fill="rgb(255,255,255)"/><path d="M129.09 484.45 A82.2 82.2 0 0 1 134.21 485.15 L133.04 492.05 A75.2 75.2 0 0 0 128.36 491.41Z" fill="rgb(248,255,248)"/><path d="M133.36 485.01 A82.2 82.2 0 0 1 138.43 485.98 L136.90 492.81 A75.2 75.2 0 0 0 132.26 491.93Z" fill="rgb(240,255,240)"/><path d="M137.59 485.80 A82.2 82.2 0 0 1 142.61 487.03 L140.72 493.77 A75.2 75.2 0 0 0 136.13 492.64Z" fill="rgb(232,255,232)"/><path d="M141.77 486.80 A82.2 82.2 0 0 1 146.72 488.29 L144.49 494.93 A75.2 75.2 0 0 0 139.96 493.56Z" fill="rgb(223,255,223)"/><path d="M145.90 488.02 A82.2 82.2 0 0 1 150.76 489.77 L148.18 496.28 A75.2 75.2 0 0 0 143.74 494.68Z" fill="rgb(215,255,215)"/><path d="M149.96 489.46 A82.2 82.2 0 0 1 154.72 491.46 L151.80 497.83 A75.2 75.2 0 0 0 147.45 495.99Z" fill="rgb(207,255,207)"/><path d="M153.93 491.11 A82.2 82.2 0 0 1 158.58 493.35 L155.34 499.56 A75.2 75.2 0 0 0 151.09 497.50Z" fill="rgb(198,255,198)"/><path d="M157.82 492.96 A82.2 82.2 0 0 1 162.34 495.45 L158.78 501.47 A75.2 75.2 0 0 0 154.64 499.20Z" fill="rgb(184,254,184)"/><path d="M161.60 495.01 A82.2 82.2 0 0 1 165.99 497.73 L162.12 503.56 A75.2 75.2 0 0 0 158.10 501.07Z" fill="rgb(170,254,170)"/><path d="M165.27 497.26 A82.2 82.2 0 0 1 169.51 500.21 L165.34 505.83 A75.2 75.2 0 0 0 161.46 503.13Z" fill="rgb(157,254,157)"/><path d="M168.82 499.70 A82.2 82.2 0 0 1 172.90 502.86 L168.43 508.26 A75.2 75.2 0 0 0 164.70 505.36Z" fill="rgb(143,253,143)"/><path d="M172.23 502.32 A82.2 82.2 0 0 1 176.14 505.69 L171.40 510.85 A75.2 75.2 0 0 0 167.82 507.76Z" fill="rgb(129,253,129)"/><path d="M175.50 505.11 A82.2 82.2 0 0 1 179.23 508.69 L174.23 513.59 A75.2 75.2 0 0 0 170.82 510.32Z" fill="rgb(115,252,115)"/><path d="M178.62 508.08 A82.2 82.2 0 0 1 182.16 511.84 L176.91 516.47 A75.2 75.2 0 0 0 173.67 513.03Z" fill="rgb(102,252,102)"/><path d="M181.59 511.20 A82.2 82.2 0 0 1 184.92 515.14 L179.43 519.49 A75.2 75.2 0 0 0 176.38 515.88Z" fill="rgb(88,252,88)"/><path d="M184.38 514.47 A82.2 82.2 0 0 1 187.50 518.58 L181.80 522.64 A75.2 75.2 0 0 0 178.94 518.88Z" fill="rgb(74,251,74)"/><path d="M187.00 517.88 A82.2 82.2 0 0 1 189.90 522.16 L183.99 525.91 A75.2 75.2 0 0 0 181.34 522.00Z" fill="rgb(61,251,61)"/><path d="M189.44 521.43 A82.2 82.2 0 0 1 192.11 525.85 L186.02 529.28 A75.2 75.2 0 0 0 183.57 525.24Z" fill="rgb(47,250,47)"/><path d="M191.69 525.10 A82.2 82.2 0 0 1 194.13 529.65 L187.86 532.76 A75.2 75.2 0 0 0 185.63 528.60Z" fill="rgb(37,250,37)"/><path d="M193.74 528.88 A82.2 82.2 0 0 1 195.94 533.55 L189.52 536.33 A75.2 75.2 0 0 0 187.50 532.06Z" fill="rgb(31,251,31)"/><path d="M195.59 532.77 A82.2 82.2 0 0 1 197.54 537.55 L190.98 539.99 A75.2 75.2 0 0 0 189.20 535.61Z" fill="rgb(25,252,25)"/><path d="M197.24 536.74 A82.2 82.2 0 0 1 198.94 541.62 L192.26 543.71 A75.2 75.2 0 0 0 190.71 539.25Z" fill="rgb(19,253,19)"/><path d="M198.68 540.80 A82.2 82.2 0 0 1 200.12 545.76 L193.34 547.50 A75.2 75.2 0 0 0 192.02 542.96Z" fill="rgb(13,253,13)"/><path d="M199.90 544.93 A82.2 82.2 0 0 1 201.08 549.95 L194.22 551.34 A75.2 75.2 0 0 0 193.14 546.74Z" fill="rgb(7,254,7)"/><path d="M200.90 549.11 A82.2 82.2 0 0 1 201.82 554.19 L194.89 555.21 A75.2 75.2 0 0 0 194.06 550.57Z" fill="rgb(1,255,1)"/><path d="M201.69 553.34 A82.2 82.2 0 0 1 202.34 558.46 L195.37 559.12 A75.2 75.2 0 0 0 194.77 554.44Z" fill="rgb(0,255,0)"/><path d="M202.25 557.61 A82.2 82.2 0 0 1 202.63 562.76 L195.63 563.05 A75.2 75.2 0 0 0 195.29 558.34Z" fill="rgb(0,255,0)"/><path d="M202.59 561.90 A82.2 82.2 0 0 1 202.70 567.06 L195.70 566.99 A75.2 75.2 0 0 0 195.60 562.26Z" fill="rgb(0,255,0)"/><path d="M202.70 566.20 A82.2 82.2 0 0 1 202.54 571.36 L195.55 570.92 A75.2 75.2 0 0 0 195.70 566.20Z" fill="rgb(0,255,0)"/><path d="M202.59 570.50 A82.2 82.2 0 0 1 202.16 575.65 L195.20 574.84 A75.2 75.2 0 0 0 195.60 570.14Z" fill="rgb(0,255,0)"/><path d="M202.25 574.79 A82.2 82.2 0 0 1 201.55 579.91 L194.65 578.74 A75.2 75.2 0 0 0 195.29 574.06Z" fill="rgb(0,255,0)"/><path d="M201.69 579.06 A82.2 82.2 0 0 1 200.72 584.13 L193.89 582.60 A75.2 75.2 0 0 0 194.77 577.96Z" fill="rgb(0,255,0)"/><path d="M200.90 583.29 A82.2 82.2 0 0 1 199.67 588.31 L192.93 586.42 A75.2 75.2 0 0 0 194.06 581.83Z" fill="rgb(0,255,0)"/><path d="M199.90 587.47 A82.2 82.2 0 0 1 198.41 592.42 L191.77 590.19 A75.2 75.2 0 0 0 193.14 585.66Z" fill="rgb(0,255,0)"/><path d="M198.68 591.60 A82.2 82.2 0 0 1 196.93 596.46 L190.42 593.88 A75.2 75.2 0 0 0 192.02 589.44Z" fill="rgb(0,255,0)"/><path d="M197.24 595.66 A82.2 82.2 0 0 1 195.24 600.42 L188.87 597.50 A75.2 75.2 0 0 0 190.71 593.15Z" fill="rgb(0,255,0)"/><path d="M195.59 599.63 A82.2 82.2 0 0 1 193.35 604.28 L187.14 601.04 A75.2 75.2 0 0 0 189.20 596.79Z" fill="rgb(0,255,0)"/><path d="M193.74 603.52 A82.2 82.2 0 0 1 191.25 608.04 L185.23 604.48 A75.2 75.2 0 0 0 187.50 600.34Z" fill="rgb(0,255,0)"/><path d="M191.69 607.30 A82.2 82.2 0 0 1 188.97 611.69 L183.14 607.82 A75.2 75.2 0 0 0 185.63 603.80Z" fill="rgb(0,255,0)"/><path d="M189.44 610.97 A82.2 82.2 0 0 1 186.49 615.21 L180.87 611.04 A75.2 75.2 0 0 0 183.57 607.16Z" fill="rgb(0,255,0)"/><path d="M187.00 614.52 A82.2 82.2 0 0 1 183.84 618.60 L178.44 614.13 A75.2 75.2 0 0 0 181.34 610.40Z" fill="rgb(0,255,0)"/><path d="M184.38 617.93 A82.2 82.2 0 0 1 181.01 621.84 L175.85 617.10 A75.2 75.2 0 0 0 178.94 613.52Z" fill="rgb(0,255,0)"/><path d="M181.59 621.20 A82.2 82.2 0 0 1 178.01 624.93 L173.11 619.93 A75.2 75.2 0 0 0 176.38 616.52Z" fill="rgb(0,255,0)"/><path d="M178.62 624.32 A82.2 82.2 0 0 1 174.86 627.86 L170.23 622.61 A75.2 75.2 0 0 0 173.67 619.37Z" fill="rgb(0,255,0)"/><path d="M175.50 627.29 A82.2 82.2 0 0 1 171.56 630.62 L167.21 625.13 A75.2 75.2 0 0 0 170.82 622.08Z" fill="rgb(0,255,0)"/><path d="M172.23 630.08 A82.2 82.2 0 0 1 168.12 633.20 L164.06 627.50 A75.2 75.2 0 0 0 167.82 624.64Z" fill="rgb(0,255,0)"/><path d="M168.82 632.70 A82.2 82.2 0 0 1 164.54 635.60 L160.79 629.69 A75.2 75.2 0 0 0 164.70 627.04Z" fill="rgb(0,255,0)"/><path d="M165.27 635.14 A82.2 82.2 0 0 1 161.60 637.39 L158.10 631.33 A75.2 75.2 0 0 0 161.46 629.27Z" fill="rgb(0,255,0)"/><path d="M65.56 621.14 L62.59 624.11" stroke="#c0d4d4" stroke-width="0.9" opacity="0.85"/><path d="M54.94 604.05 L49.57 607.15" stroke="#c0d4d4" stroke-width="0.9" opacity="0.85"/><path d="M45.45 586.31 L41.39 587.40" stroke="#c0d4d4" stroke-width="0.9" opacity="0.85"/><path d="M44.80 566.20 L38.60 566.20" stroke="#c0d4d4" stroke-width="0.9" opacity="0.85"/><path d="M45.45 546.09 L41.39 545.00" stroke="#c0d4d4" stroke-width="0.9" opacity="0.85"/><path d="M54.94 528.35 L49.57 525.25" stroke="#c0d4d4" stroke-width="0.9" opacity="0.85"/><path d="M65.56 511.26 L62.59 508.29" stroke="#c0d4d4" stroke-width="0.9" opacity="0.85"/><path d="M82.65 500.64 L79.55 495.27" stroke="#c0d4d4" stroke-width="0.9" opacity="0.85"/><path d="M100.39 491.15 L99.30 487.09" stroke="#c0d4d4" stroke-width="0.9" opacity="0.85"/><path d="M120.50 490.50 L120.50 484.30" stroke="#c0d4d4" stroke-width="0.9" opacity="0.85"/><path d="M140.61 491.15 L141.70 487.09" stroke="#c0d4d4" stroke-width="0.9" opacity="0.85"/><path d="M158.35 500.64 L161.45 495.27" stroke="#c0d4d4" stroke-width="0.9" opacity="0.85"/><path d="M175.44 511.26 L178.41 508.29" stroke="#d8e8e8" stroke-width="0.9" opacity="0.85"/><path d="M186.06 528.35 L191.43 525.25" stroke="#d8e8e8" stroke-width="0.9" opacity="0.85"/><path d="M195.55 546.09 L199.61 545.00" stroke="#d8e8e8" stroke-width="0.9" opacity="0.85"/><path d="M196.20 566.20 L202.40 566.20" stroke="#d8e8e8" stroke-width="0.9" opacity="0.85"/><path d="M195.55 586.31 L199.61 587.40" stroke="#d8e8e8" stroke-width="0.9" opacity="0.85"/><path d="M186.06 604.05 L191.43 607.15" stroke="#d8e8e8" stroke-width="0.9" opacity="0.85"/><path d="M175.44 621.14 L178.41 624.11" stroke="#d8e8e8" stroke-width="0.9" opacity="0.85"/></svg>
<div style="position:absolute;left:83.46px;top:615.40px;font-size:12px;line-height:16px;color:#b4dce8;white-space:nowrap;">0</div>
<div style="position:absolute;left:57.96px;top:589.30px;font-size:12px;line-height:16px;color:#b4dce8;white-space:nowrap;transform:scaleX(0.9150);transform-origin:50% 50%;">0.1</div>
<div style="position:absolute;left:48.26px;top:558.30px;font-size:12px;line-height:16px;color:#b4dce8;white-space:nowrap;transform:scaleX(0.9150);transform-origin:50% 50%;">0.2</div>
<div style="position:absolute;left:57.96px;top:527.00px;font-size:12px;line-height:16px;color:#b4dce8;white-space:nowrap;transform:scaleX(0.9150);transform-origin:50% 50%;">0.3</div>
<div style="position:absolute;left:79.16px;top:501.30px;font-size:12px;line-height:16px;color:#b4dce8;white-space:nowrap;transform:scaleX(0.9150);transform-origin:50% 50%;">0.4</div>
<div style="position:absolute;left:112.26px;top:491.30px;font-size:12px;line-height:16px;color:#b4dce8;white-space:nowrap;transform:scaleX(0.9150);transform-origin:50% 50%;">0.5</div>
<div style="position:absolute;left:144.96px;top:501.30px;font-size:12px;line-height:16px;color:#b4dce8;white-space:nowrap;transform:scaleX(0.9150);transform-origin:50% 50%;">0.6</div>
<div style="position:absolute;left:166.16px;top:527.00px;font-size:12px;line-height:16px;color:#b4dce8;white-space:nowrap;transform:scaleX(0.9150);transform-origin:50% 50%;">0.7</div>
<div style="position:absolute;left:176.26px;top:558.30px;font-size:12px;line-height:16px;color:#b4dce8;white-space:nowrap;transform:scaleX(0.9150);transform-origin:50% 50%;">0.8</div>
<div style="position:absolute;left:166.16px;top:589.30px;font-size:12px;line-height:16px;color:#b4dce8;white-space:nowrap;transform:scaleX(0.9150);transform-origin:50% 50%;">0.9</div>
<div style="position:absolute;left:149.96px;top:615.40px;font-size:12px;line-height:16px;color:#b4dce8;white-space:nowrap;">1</div>
<svg style="position:absolute;left:20.5px;top:466.20000000000005px" width="200" height="200" viewBox="20.5 466.20000000000005 200 200"><path d="M124.84 566.93 L134.29 484.66 L116.16 565.47Z" fill="#add8e6"/></svg>
<div style="position:absolute;left:237px;top:457px;width:205px;height:18px;background:#00008b;"></div>
<div style="position:absolute;left:310.06px;top:457.40px;font-size:12px;line-height:16px;color:#cfe6f4;white-space:nowrap;transform:scaleX(0.9000);transform-origin:50% 50%;">Distraction</div>
<svg style="position:absolute;left:239.5px;top:466.20000000000005px" width="200" height="200" viewBox="239.5 466.20000000000005 200 200"><path d="M298.40 637.39 A82.2 82.2 0 0 1 294.01 634.67 L297.88 628.84 A75.2 75.2 0 0 0 301.90 631.33Z" fill="rgb(255,255,255)"/><path d="M294.73 635.14 A82.2 82.2 0 0 1 290.49 632.19 L294.66 626.57 A75.2 75.2 0 0 0 298.54 629.27Z" fill="rgb(255,255,255)"/><path d="M291.18 632.70 A82.2 82.2 0 0 1 287.10 629.54 L291.57 624.14 A75.2 75.2 0 0 0 295.30 627.04Z" fill="rgb(255,255,255)"/><path d="M287.77 630.08 A82.2 82.2 0 0 1 283.86 626.71 L288.60 621.55 A75.2 75.2 0 0 0 292.18 624.64Z" fill="rgb(255,255,255)"/><path d="M284.50 627.29 A82.2 82.2 0 0 1 280.77 623.71 L285.77 618.81 A75.2 75.2 0 0 0 289.18 622.08Z" fill="rgb(255,255,255)"/><path d="M281.38 624.32 A82.2 82.2 0 0 1 277.84 620.56 L283.09 615.93 A75.2 75.2 0 0 0 286.33 619.37Z" fill="rgb(255,255,255)"/><path d="M278.41 621.20 A82.2 82.2 0 0 1 275.08 617.26 L280.57 612.91 A75.2 75.2 0 0 0 283.62 616.52Z" fill="rgb(255,255,255)"/><path d="M275.62 617.93 A82.2 82.2 0 0 1 272.50 613.82 L278.20 609.76 A75.2 75.2 0 0 0 281.06 613.52Z" fill="rgb(255,255,255)"/><path d="M273.00 614.52 A82.2 82.2 0 0 1 270.10 610.24 L276.01 606.49 A75.2 75.2 0 0 0 278.66 610.40Z" fill="rgb(255,255,255)"/><path d="M270.56 610.97 A82.2 82.2 0 0 1 267.89 606.55 L273.98 603.12 A75.2 75.2 0 0 0 276.43 607.16Z" fill="rgb(255,255,255)"/><path d="M268.31 607.30 A82.2 82.2 0 0 1 265.87 602.75 L272.14 599.64 A75.2 75.2 0 0 0 274.37 603.80Z" fill="rgb(255,255,255)"/><path d="M266.26 603.52 A82.2 82.2 0 0 1 264.06 598.85 L270.48 596.07 A75.2 75.2 0 0 0 272.50 600.34Z" fill="rgb(255,255,255)"/><path d="M264.41 599.63 A82.2 82.2 0 0 1 262.46 594.85 L269.02 592.41 A75.2 75.2 0 0 0 270.80 596.79Z" fill="rgb(255,255,255)"/><path d="M262.76 595.66 A82.2 82.2 0 0 1 261.06 590.78 L267.74 588.69 A75.2 75.2 0 0 0 269.29 593.15Z" fill="rgb(255,255,255)"/><path d="M261.32 591.60 A82.2 82.2 0 0 1 259.88 586.64 L266.66 584.90 A75.2 75.2 0 0 0 267.98 589.44Z" fill="rgb(255,255,255)"/><path d="M260.10 587.47 A82.2 82.2 0 0 1 258.92 582.45 L265.78 581.06 A75.2 75.2 0 0 0 266.86 585.66Z" fill="rgb(255,255,255)"/><path d="M259.10 583.29 A82.2 82.2 0 0 1 258.18 578.21 L265.11 577.19 A75.2 75.2 0 0 0 265.94 581.83Z" fill="rgb(255,255,255)"/><path d="M258.31 579.06 A82.2 82.2 0 0 1 257.66 573.94 L264.63 573.28 A75.2 75.2 0 0 0 265.23 577.96Z" fill="rgb(251,251,255)"/><path d="M257.75 574.79 A82.2 82.2 0 0 1 257.37 569.64 L264.37 569.35 A75.2 75.2 0 0 0 264.71 574.06Z" fill="rgb(245,245,255)"/><path d="M257.41 570.50 A82.2 82.2 0 0 1 257.30 565.34 L264.30 565.41 A75.2 75.2 0 0 0 264.40 570.14Z" fill="rgb(240,240,255)"/><path d="M257.30 566.20 A82.2 82.2 0 0 1 257.46 561.04 L264.45 561.48 A75.2 75.2 0 0 0 264.30 566.20Z" fill="rgb(235,235,255)"/><path d="M257.41 561.90 A82.2 82.2 0 0 1 257.84 556.75 L264.80 557.56 A75.2 75.2 0 0 0 264.40 562.26Z" fill="rgb(230,230,255)"/><path d="M257.75 557.61 A82.2 82.2 0 0 1 258.45 552.49 L265.35 553.66 A75.2 75.2 0 0 0 264.71 558.34Z" fill="rgb(224,224,255)"/><path d="M258.31 553.34 A82.2 82.2 0 0 1 259.28 548.27 L266.11 549.80 A75.2 75.2 0 0 0 265.23 554.44Z" fill="rgb(218,218,255)"/><path d="M259.10 549.11 A82.2 82.2 0 0 1 260.33 544.09 L267.07 545.98 A75.2 75.2 0 0 0 265.94 550.57Z" fill="rgb(205,205,254)"/><path d="M260.10 544.93 A82.2 82.2 0 0 1 261.59 539.98 L268.23 542.21 A75.2 75.2 0 0 0 266.86 546.74Z" fill="rgb(192,192,254)"/><path d="M261.32 540.80 A82.2 82.2 0 0 1 263.07 535.94 L269.58 538.52 A75.2 75.2 0 0 0 267.98 542.96Z" fill="rgb(179,179,253)"/><path d="M262.76 536.74 A82.2 82.2 0 0 1 264.76 531.98 L271.13 534.90 A75.2 75.2 0 0 0 269.29 539.25Z" fill="rgb(166,166,253)"/><path d="M264.41 532.77 A82.2 82.2 0 0 1 266.65 528.12 L272.86 531.36 A75.2 75.2 0 0 0 270.80 535.61Z" fill="rgb(153,153,252)"/><path d="M266.26 528.88 A82.2 82.2 0 0 1 268.75 524.36 L274.77 527.92 A75.2 75.2 0 0 0 272.50 532.06Z" fill="rgb(140,140,252)"/><path d="M268.31 525.10 A82.2 82.2 0 0 1 271.03 520.71 L276.86 524.58 A75.2 75.2 0 0 0 274.37 528.60Z" fill="rgb(127,127,251)"/><path d="M270.56 521.43 A82.2 82.2 0 0 1 273.51 517.19 L279.13 521.36 A75.2 75.2 0 0 0 276.43 525.24Z" fill="rgb(114,114,251)"/><path d="M273.00 517.88 A82.2 82.2 0 0 1 276.16 513.80 L281.56 518.27 A75.2 75.2 0 0 0 278.66 522.00Z" fill="rgb(101,101,250)"/><path d="M275.62 514.47 A82.2 82.2 0 0 1 278.99 510.56 L284.15 515.30 A75.2 75.2 0 0 0 281.06 518.88Z" fill="rgb(88,88,250)"/><path d="M278.41 511.20 A82.2 82.2 0 0 1 281.99 507.47 L286.89 512.47 A75.2 75.2 0 0 0 283.62 515.88Z" fill="rgb(78,78,251)"/><path d="M281.38 508.08 A82.2 82.2 0 0 1 285.14 504.54 L289.77 509.79 A75.2 75.2 0 0 0 286.33 513.03Z" fill="rgb(67,67,252)"/><path d="M284.50 505.11 A82.2 82.2 0 0 1 288.44 501.78 L292.79 507.27 A75.2 75.2 0 0 0 289.18 510.32Z" fill="rgb(57,57,252)"/><path d="M287.77 502.32 A82.2 82.2 0 0 1 291.88 499.20 L295.94 504.90 A75.2 75.2 0 0 0 292.18 507.76Z" fill="rgb(46,46,253)"/><path d="M291.18 499.70 A82.2 82.2 0 0 1 295.46 496.80 L299.21 502.71 A75.2 75.2 0 0 0 295.30 505.36Z" fill="rgb(36,36,254)"/><path d="M294.73 497.26 A82.2 82.2 0 0 1 299.15 494.59 L302.58 500.68 A75.2 75.2 0 0 0 298.54 503.13Z" fill="rgb(25,25,255)"/><path d="M298.40 495.01 A82.2 82.2 0 0 1 302.95 492.57 L306.06 498.84 A75.2 75.2 0 0 0 301.90 501.07Z" fill="rgb(19,19,255)"/><path d="M302.18 492.96 A82.2 82.2 0 0 1 306.85 490.76 L309.63 497.18 A75.2 75.2 0 0 0 305.36 499.20Z" fill="rgb(17,17,255)"/><path d="M306.07 491.11 A82.2 82.2 0 0 1 310.85 489.16 L313.29 495.72 A75.2 75.2 0 0 0 308.91 497.50Z" fill="rgb(15,15,255)"/><path d="M310.04 489.46 A82.2 82.2 0 0 1 314.92 487.76 L317.01 494.44 A75.2 75.2 0 0 0 312.55 495.99Z" fill="rgb(13,13,255)"/><path d="M314.10 488.02 A82.2 82.2 0 0 1 319.06 486.58 L320.80 493.36 A75.2 75.2 0 0 0 316.26 494.68Z" fill="rgb(11,11,255)"/><path d="M318.23 486.80 A82.2 82.2 0 0 1 323.25 485.62 L324.64 492.48 A75.2 75.2 0 0 0 320.04 493.56Z" fill="rgb(9,9,255)"/><path d="M322.41 485.80 A82.2 82.2 0 0 1 327.49 484.88 L328.51 491.81 A75.2 75.2 0 0 0 323.87 492.64Z" fill="rgb(7,7,255)"/><path d="M326.64 485.01 A82.2 82.2 0 0 1 331.76 484.36 L332.42 491.33 A75.2 75.2 0 0 0 327.74 491.93Z" fill="rgb(5,5,255)"/><path d="M330.91 484.45 A82.2 82.2 0 0 1 336.06 484.07 L336.35 491.07 A75.2 75.2 0 0 0 331.64 491.41Z" fill="rgb(3,3,255)"/><path d="M335.20 484.11 A82.2 82.2 0 0 1 340.36 484.00 L340.29 491.00 A75.2 75.2 0 0 0 335.56 491.10Z" fill="rgb(1,1,255)"/><path d="M339.50 484.00 A82.2 82.2 0 0 1 344.66 484.16 L344.22 491.15 A75.2 75.2 0 0 0 339.50 491.00Z" fill="rgb(0,0,255)"/><path d="M343.80 484.11 A82.2 82.2 0 0 1 348.95 484.54 L348.14 491.50 A75.2 75.2 0 0 0 343.44 491.10Z" fill="rgb(0,0,255)"/><path d="M348.09 484.45 A82.2 82.2 0 0 1 353.21 485.15 L352.04 492.05 A75.2 75.2 0 0 0 347.36 491.41Z" fill="rgb(0,0,255)"/><path d="M352.36 485.01 A82.2 82.2 0 0 1 357.43 485.98 L355.90 492.81 A75.2 75.2 0 0 0 351.26 491.93Z" fill="rgb(0,0,255)"/><path d="M356.59 485.80 A82.2 82.2 0 0 1 361.61 487.03 L359.72 493.77 A75.2 75.2 0 0 0 355.13 492.64Z" fill="rgb(0,0,255)"/><path d="M360.77 486.80 A82.2 82.2 0 0 1 365.72 488.29 L363.49 494.93 A75.2 75.2 0 0 0 358.96 493.56Z" fill="rgb(0,0,255)"/><path d="M364.90 488.02 A82.2 82.2 0 0 1 369.76 489.77 L367.18 496.28 A75.2 75.2 0 0 0 362.74 494.68Z" fill="rgb(0,0,255)"/><path d="M368.96 489.46 A82.2 82.2 0 0 1 373.72 491.46 L370.80 497.83 A75.2 75.2 0 0 0 366.45 495.99Z" fill="rgb(0,0,255)"/><path d="M372.93 491.11 A82.2 82.2 0 0 1 377.58 493.35 L374.34 499.56 A75.2 75.2 0 0 0 370.09 497.50Z" fill="rgb(0,0,255)"/><path d="M376.82 492.96 A82.2 82.2 0 0 1 381.34 495.45 L377.78 501.47 A75.2 75.2 0 0 0 373.64 499.20Z" fill="rgb(0,0,255)"/><path d="M380.60 495.01 A82.2 82.2 0 0 1 384.99 497.73 L381.12 503.56 A75.2 75.2 0 0 0 377.10 501.07Z" fill="rgb(0,0,255)"/><path d="M384.27 497.26 A82.2 82.2 0 0 1 388.51 500.21 L384.34 505.83 A75.2 75.2 0 0 0 380.46 503.13Z" fill="rgb(0,0,255)"/><path d="M387.82 499.70 A82.2 82.2 0 0 1 391.90 502.86 L387.43 508.26 A75.2 75.2 0 0 0 383.70 505.36Z" fill="rgb(0,0,255)"/><path d="M391.23 502.32 A82.2 82.2 0 0 1 395.14 505.69 L390.40 510.85 A75.2 75.2 0 0 0 386.82 507.76Z" fill="rgb(0,0,255)"/><path d="M394.50 505.11 A82.2 82.2 0 0 1 398.23 508.69 L393.23 513.59 A75.2 75.2 0 0 0 389.82 510.32Z" fill="rgb(0,0,255)"/><path d="M397.62 508.08 A82.2 82.2 0 0 1 401.16 511.84 L395.91 516.47 A75.2 75.2 0 0 0 392.67 513.03Z" fill="rgb(0,0,255)"/><path d="M400.59 511.20 A82.2 82.2 0 0 1 403.92 515.14 L398.43 519.49 A75.2 75.2 0 0 0 395.38 515.88Z" fill="rgb(0,0,255)"/><path d="M403.38 514.47 A82.2 82.2 0 0 1 406.50 518.58 L400.80 522.64 A75.2 75.2 0 0 0 397.94 518.88Z" fill="rgb(0,0,255)"/><path d="M406.00 517.88 A82.2 82.2 0 0 1 408.90 522.16 L402.99 525.91 A75.2 75.2 0 0 0 400.34 522.00Z" fill="rgb(0,0,255)"/><path d="M408.44 521.43 A82.2 82.2 0 0 1 411.11 525.85 L405.02 529.28 A75.2 75.2 0 0 0 402.57 525.24Z" fill="rgb(0,0,255)"/><path d="M410.69 525.10 A82.2 82.2 0 0 1 413.13 529.65 L406.86 532.76 A75.2 75.2 0 0 0 404.63 528.60Z" fill="rgb(0,0,255)"/><path d="M412.74 528.88 A82.2 82.2 0 0 1 414.94 533.55 L408.52 536.33 A75.2 75.2 0 0 0 406.50 532.06Z" fill="rgb(0,0,255)"/><path d="M414.59 532.77 A82.2 82.2 0 0 1 416.54 537.55 L409.98 539.99 A75.2 75.2 0 0 0 408.20 535.61Z" fill="rgb(0,0,255)"/><path d="M416.24 536.74 A82.2 82.2 0 0 1 417.94 541.62 L411.26 543.71 A75.2 75.2 0 0 0 409.71 539.25Z" fill="rgb(0,0,255)"/><path d="M417.68 540.80 A82.2 82.2 0 0 1 419.12 545.76 L412.34 547.50 A75.2 75.2 0 0 0 411.02 542.96Z" fill="rgb(0,0,255)"/><path d="M418.90 544.93 A82.2 82.2 0 0 1 420.08 549.95 L413.22 551.34 A75.2 75.2 0 0 0 412.14 546.74Z" fill="rgb(0,0,255)"/><path d="M419.90 549.11 A82.2 82.2 0 0 1 420.82 554.19 L413.89 555.21 A75.2 75.2 0 0 0 413.06 550.57Z" fill="rgb(0,0,255)"/><path d="M420.69 553.34 A82.2 82.2 0 0 1 421.34 558.46 L414.37 559.12 A75.2 75.2 0 0 0 413.77 554.44Z" fill="rgb(0,0,255)"/><path d="M421.25 557.61 A82.2 82.2 0 0 1 421.63 562.76 L414.63 563.05 A75.2 75.2 0 0 0 414.29 558.34Z" fill="rgb(0,0,255)"/><path d="M421.59 561.90 A82.2 82.2 0 0 1 421.70 567.06 L414.70 566.99 A75.2 75.2 0 0 0 414.60 562.26Z" fill="rgb(0,0,255)"/><path d="M421.70 566.20 A82.2 82.2 0 0 1 421.54 571.36 L414.55 570.92 A75.2 75.2 0 0 0 414.70 566.20Z" fill="rgb(0,0,255)"/><path d="M421.59 570.50 A82.2 82.2 0 0 1 421.16 575.65 L414.20 574.84 A75.2 75.2 0 0 0 414.60 570.14Z" fill="rgb(0,0,255)"/><path d="M421.25 574.79 A82.2 82.2 0 0 1 420.55 579.91 L413.65 578.74 A75.2 75.2 0 0 0 414.29 574.06Z" fill="rgb(0,0,255)"/><path d="M420.69 579.06 A82.2 82.2 0 0 1 419.72 584.13 L412.89 582.60 A75.2 75.2 0 0 0 413.77 577.96Z" fill="rgb(0,0,255)"/><path d="M419.90 583.29 A82.2 82.2 0 0 1 418.67 588.31 L411.93 586.42 A75.2 75.2 0 0 0 413.06 581.83Z" fill="rgb(0,0,255)"/><path d="M418.90 587.47 A82.2 82.2 0 0 1 417.41 592.42 L410.77 590.19 A75.2 75.2 0 0 0 412.14 585.66Z" fill="rgb(0,0,255)"/><path d="M417.68 591.60 A82.2 82.2 0 0 1 415.93 596.46 L409.42 593.88 A75.2 75.2 0 0 0 411.02 589.44Z" fill="rgb(0,0,255)"/><path d="M416.24 595.66 A82.2 82.2 0 0 1 414.24 600.42 L407.87 597.50 A75.2 75.2 0 0 0 409.71 593.15Z" fill="rgb(0,0,255)"/><path d="M414.59 599.63 A82.2 82.2 0 0 1 412.35 604.28 L406.14 601.04 A75.2 75.2 0 0 0 408.20 596.79Z" fill="rgb(0,0,255)"/><path d="M412.74 603.52 A82.2 82.2 0 0 1 410.25 608.04 L404.23 604.48 A75.2 75.2 0 0 0 406.50 600.34Z" fill="rgb(0,0,255)"/><path d="M410.69 607.30 A82.2 82.2 0 0 1 407.97 611.69 L402.14 607.82 A75.2 75.2 0 0 0 404.63 603.80Z" fill="rgb(0,0,255)"/><path d="M408.44 610.97 A82.2 82.2 0 0 1 405.49 615.21 L399.87 611.04 A75.2 75.2 0 0 0 402.57 607.16Z" fill="rgb(0,0,255)"/><path d="M406.00 614.52 A82.2 82.2 0 0 1 402.84 618.60 L397.44 614.13 A75.2 75.2 0 0 0 400.34 610.40Z" fill="rgb(0,0,255)"/><path d="M403.38 617.93 A82.2 82.2 0 0 1 400.01 621.84 L394.85 617.10 A75.2 75.2 0 0 0 397.94 613.52Z" fill="rgb(0,0,255)"/><path d="M400.59 621.20 A82.2 82.2 0 0 1 397.01 624.93 L392.11 619.93 A75.2 75.2 0 0 0 395.38 616.52Z" fill="rgb(0,0,255)"/><path d="M397.62 624.32 A82.2 82.2 0 0 1 393.86 627.86 L389.23 622.61 A75.2 75.2 0 0 0 392.67 619.37Z" fill="rgb(0,0,255)"/><path d="M394.50 627.29 A82.2 82.2 0 0 1 390.56 630.62 L386.21 625.13 A75.2 75.2 0 0 0 389.82 622.08Z" fill="rgb(0,0,255)"/><path d="M391.23 630.08 A82.2 82.2 0 0 1 387.12 633.20 L383.06 627.50 A75.2 75.2 0 0 0 386.82 624.64Z" fill="rgb(0,0,255)"/><path d="M387.82 632.70 A82.2 82.2 0 0 1 383.54 635.60 L379.79 629.69 A75.2 75.2 0 0 0 383.70 627.04Z" fill="rgb(0,0,255)"/><path d="M384.27 635.14 A82.2 82.2 0 0 1 380.60 637.39 L377.10 631.33 A75.2 75.2 0 0 0 380.46 629.27Z" fill="rgb(0,0,255)"/><path d="M284.56 621.14 L281.59 624.11" stroke="#c0d4d4" stroke-width="0.9" opacity="0.85"/><path d="M273.94 604.05 L268.57 607.15" stroke="#c0d4d4" stroke-width="0.9" opacity="0.85"/><path d="M264.45 586.31 L260.39 587.40" stroke="#c0d4d4" stroke-width="0.9" opacity="0.85"/><path d="M263.80 566.20 L257.60 566.20" stroke="#c0d4d4" stroke-width="0.9" opacity="0.85"/><path d="M264.45 546.09 L260.39 545.00" stroke="#c0d4d4" stroke-width="0.9" opacity="0.85"/><path d="M273.94 528.35 L268.57 525.25" stroke="#d8e8e8" stroke-width="0.9" opacity="0.85"/><path d="M284.56 511.26 L281.59 508.29" stroke="#d8e8e8" stroke-width="0.9" opacity="0.85"/><path d="M301.65 500.64 L298.55 495.27" stroke="#d8e8e8" stroke-width="0.9" opacity="0.85"/><path d="M319.39 491.15 L318.30 487.09" stroke="#d8e8e8" stroke-width="0.9" opacity="0.85"/><path d="M339.50 490.50 L339.50 484.30" stroke="#d8e8e8" stroke-width="0.9" opacity="0.85"/><path d="M359.61 491.15 L360.70 487.09" stroke="#d8e8e8" stroke-width="0.9" opacity="0.85"/><path d="M377.35 500.64 L380.45 495.27" stroke="#d8e8e8" stroke-width="0.9" opacity="0.85"/><path d="M394.44 511.26 L397.41 508.29" stroke="#d8e8e8" stroke-width="0.9" opacity="0.85"/><path d="M405.06 528.35 L410.43 525.25" stroke="#d8e8e8" stroke-width="0.9" opacity="0.85"/><path d="M414.55 546.09 L418.61 545.00" stroke="#d8e8e8" stroke-width="0.9" opacity="0.85"/><path d="M415.20 566.20 L421.40 566.20" stroke="#d8e8e8" stroke-width="0.9" opacity="0.85"/><path d="M414.55 586.31 L418.61 587.40" stroke="#d8e8e8" stroke-width="0.9" opacity="0.85"/><path d="M405.06 604.05 L410.43 607.15" stroke="#d8e8e8" stroke-width="0.9" opacity="0.85"/><path d="M394.44 621.14 L397.41 624.11" stroke="#d8e8e8" stroke-width="0.9" opacity="0.85"/></svg>
<div style="position:absolute;left:302.46px;top:615.40px;font-size:12px;line-height:16px;color:#b4dce8;white-space:nowrap;">0</div>
<div style="position:absolute;left:276.96px;top:589.30px;font-size:12px;line-height:16px;color:#b4dce8;white-space:nowrap;transform:scaleX(0.9150);transform-origin:50% 50%;">0.1</div>
<div style="position:absolute;left:267.26px;top:558.30px;font-size:12px;line-height:16px;color:#b4dce8;white-space:nowrap;transform:scaleX(0.9150);transform-origin:50% 50%;">0.2</div>
<div style="position:absolute;left:276.96px;top:527.00px;font-size:12px;line-height:16px;color:#b4dce8;white-space:nowrap;transform:scaleX(0.9150);transform-origin:50% 50%;">0.3</div>
<div style="position:absolute;left:298.16px;top:501.30px;font-size:12px;line-height:16px;color:#b4dce8;white-space:nowrap;transform:scaleX(0.9150);transform-origin:50% 50%;">0.4</div>
<div style="position:absolute;left:331.26px;top:491.30px;font-size:12px;line-height:16px;color:#b4dce8;white-space:nowrap;transform:scaleX(0.9150);transform-origin:50% 50%;">0.5</div>
<div style="position:absolute;left:363.96px;top:501.30px;font-size:12px;line-height:16px;color:#b4dce8;white-space:nowrap;transform:scaleX(0.9150);transform-origin:50% 50%;">0.6</div>
<div style="position:absolute;left:385.16px;top:527.00px;font-size:12px;line-height:16px;color:#b4dce8;white-space:nowrap;transform:scaleX(0.9150);transform-origin:50% 50%;">0.7</div>
<div style="position:absolute;left:395.26px;top:558.30px;font-size:12px;line-height:16px;color:#b4dce8;white-space:nowrap;transform:scaleX(0.9150);transform-origin:50% 50%;">0.8</div>
<div style="position:absolute;left:385.16px;top:589.30px;font-size:12px;line-height:16px;color:#b4dce8;white-space:nowrap;transform:scaleX(0.9150);transform-origin:50% 50%;">0.9</div>
<div style="position:absolute;left:368.96px;top:615.40px;font-size:12px;line-height:16px;color:#b4dce8;white-space:nowrap;">1</div>
<svg style="position:absolute;left:239.5px;top:466.20000000000005px" width="200" height="200" viewBox="239.5 466.20000000000005 200 200"><path d="M335.68 564.02 L298.53 638.04 L343.32 568.38Z" fill="#add8e6"/></svg>
<div style="position:absolute;left:475.9px;top:252.9px;width:206.5px;height:190px;box-sizing:border-box;border:1.2px solid #7070ff;box-shadow:inset 0 0 0 3px #0000ee;"></div>
<div style="position:absolute;left:563.66px;top:238.80px;font-size:12px;line-height:16px;color:#e8f0f4;white-space:nowrap;transform:scaleX(0.9000);transform-origin:50% 50%;">Theta</div>
<svg style="position:absolute;left:519.0px;top:293.0px" width="121.8" height="113" viewBox="42 35 856 795" preserveAspectRatio="none" shape-rendering="crispEdges"><rect x="42" y="35" width="856" height="795" fill="#00ff00"/><polygon points="305,35 440,45 600,70 760,88 898,85 898,178 780,165 600,155 450,165 380,145 315,125 350,95 320,60" fill="#ffff00"/><polygon points="42,215 120,225 185,240 218,290 160,310 42,320" fill="#ffff00"/><polygon points="898,285 780,300 640,315 540,325 480,350 420,400 330,455 330,475 240,480 170,505 135,530 160,560 150,640 42,670 42,720 200,705 400,680 500,655 515,600 500,555 560,530 620,505 680,480 750,490 850,520 898,555 898,480 780,455 898,430" fill="#ffff00"/><polygon points="565,740 700,730 898,728 898,830 740,830 640,790" fill="#ffff00"/><polygon points="42,92 100,105 185,130 140,155 190,180 120,200 42,195" fill="#0000ff"/><polygon points="335,238 450,200 600,196 760,200 870,235 780,265 620,285 460,290 400,270" fill="#0000ff"/><polygon points="42,340 130,342 245,348 262,385 240,410 130,432 42,432" fill="#0000ff"/><polygon points="42,525 105,560 70,615 42,625" fill="#0000ff"/><polygon points="715,662 820,635 898,620 898,685 800,672" fill="#0000ff"/><polygon points="120,780 150,755 260,745 400,755 480,790 555,828 320,828 240,805 150,800" fill="#0000ff"/><polygon points="425,125 465,105 520,118 570,128 500,138" fill="#ffa500"/><polygon points="760,345 850,330 898,332 898,360 840,355" fill="#ffa500"/><polygon points="210,670 228,610 250,570 300,610 300,665" fill="#ffa500"/></svg>
<svg style="position:absolute;left:517.0px;top:290.0px" width="128" height="120"><path d="M0.7 5 V1.2 H5.5 M119.5 1.2 H124.3 M0.7 109.5 V114.5" fill="none" stroke="#8fa89a" stroke-width="1.1"/></svg>
<div style="position:absolute;left:650.30px;top:284.75px;font-size:11.5px;line-height:15.5px;color:#f4f4f4;white-space:nowrap;transform:scaleX(0.7922);transform-origin:0 50%;">141</div>
<div style="position:absolute;left:650.30px;top:307.47px;font-size:11.5px;line-height:15.5px;color:#f4f4f4;white-space:nowrap;transform:scaleX(0.7922);transform-origin:0 50%;">144</div>
<div style="position:absolute;left:650.30px;top:330.19px;font-size:11.5px;line-height:15.5px;color:#f4f4f4;white-space:nowrap;transform:scaleX(0.7922);transform-origin:0 50%;">147</div>
<div style="position:absolute;left:650.30px;top:352.91px;font-size:11.5px;line-height:15.5px;color:#f4f4f4;white-space:nowrap;transform:scaleX(0.7922);transform-origin:0 50%;">150</div>
<div style="position:absolute;left:650.30px;top:375.63px;font-size:11.5px;line-height:15.5px;color:#f4f4f4;white-space:nowrap;transform:scaleX(0.7922);transform-origin:0 50%;">153</div>
<div style="position:absolute;left:650.30px;top:398.35px;font-size:11.5px;line-height:15.5px;color:#f4f4f4;white-space:nowrap;transform:scaleX(0.7922);transform-origin:0 50%;">156</div>
<div style="position:absolute;left:671.9px;top:320.6px;width:6.2px;height:56px;overflow:hidden"><div style="position:absolute;left:0;top:0;width:56px;height:14px;line-height:14px;font-size:9.5px;color:#f4f4f4;text-align:center;transform-origin:0 0;transform:translate(0px,56px) rotate(-90deg)">Time (s)</div></div>
<div style="position:absolute;left:511.3px;top:413.0px;width:12px;height:16px;overflow:hidden"><div style="position:absolute;left:0;top:0;width:16px;height:12px;line-height:12px;font-size:10.5px;color:#e8e8e8;text-align:right;transform-origin:0 0;transform:translate(0px,16px) rotate(-90deg) scaleX(0.88);opacity:.8">3</div></div>
<div style="position:absolute;left:541.8px;top:413.0px;width:12px;height:16px;overflow:hidden"><div style="position:absolute;left:0;top:0;width:16px;height:12px;line-height:12px;font-size:10.5px;color:#e8e8e8;text-align:right;transform-origin:0 0;transform:translate(0px,16px) rotate(-90deg) scaleX(0.88);opacity:.8">4</div></div>
<div style="position:absolute;left:572.2px;top:413.0px;width:12px;height:16px;overflow:hidden"><div style="position:absolute;left:0;top:0;width:16px;height:12px;line-height:12px;font-size:10.5px;color:#e8e8e8;text-align:right;transform-origin:0 0;transform:translate(0px,16px) rotate(-90deg) scaleX(0.88);opacity:.8">5</div></div>
<div style="position:absolute;left:602.6px;top:413.0px;width:12px;height:16px;overflow:hidden"><div style="position:absolute;left:0;top:0;width:16px;height:12px;line-height:12px;font-size:10.5px;color:#e8e8e8;text-align:right;transform-origin:0 0;transform:translate(0px,16px) rotate(-90deg) scaleX(0.88);opacity:.8">6</div></div>
<div style="position:absolute;left:633.1px;top:413.0px;width:12px;height:16px;overflow:hidden"><div style="position:absolute;left:0;top:0;width:16px;height:12px;line-height:12px;font-size:10.5px;color:#e8e8e8;text-align:right;transform-origin:0 0;transform:translate(0px,16px) rotate(-90deg) scaleX(0.88);opacity:.8">7</div></div>
<div style="position:absolute;left:555.12px;top:422.85px;font-size:11.5px;line-height:15.5px;color:#f4f4f4;white-space:nowrap;transform:scaleX(0.8753);transform-origin:50% 50%;">Freq (Hz)</div>
<div style="position:absolute;left:688.1px;top:252.9px;width:206.5px;height:190px;box-sizing:border-box;border:1.2px solid #7070ff;box-shadow:inset 0 0 0 3px #0000ee;"></div>
<div style="position:absolute;left:775.85px;top:238.80px;font-size:12px;line-height:16px;color:#e8f0f4;white-space:nowrap;transform:scaleX(0.9000);transform-origin:50% 50%;">Alpha</div>
<svg style="position:absolute;left:731.2px;top:293.0px" width="121.8" height="113" viewBox="42 35 856 795" preserveAspectRatio="none" shape-rendering="crispEdges"><rect x="42" y="35" width="856" height="795" fill="#ffff00"/><polygon points="42,35 370,35 300,55 200,80 42,85" fill="#00ff00"/><polygon points="420,35 898,35 898,58 800,42 700,50 620,75 545,85 470,60" fill="#00ff00"/><polygon points="42,215 150,225 300,225 450,215 600,205 760,190 898,170 898,280 800,265 600,258 450,262 300,275 200,290 42,280" fill="#00ff00"/><polygon points="42,420 200,440 420,440 500,470 545,520 550,560 700,580 820,610 898,625 898,700 800,720 600,735 400,735 200,740 42,740" fill="#00ff00"/><polygon points="42,535 90,540 110,558 85,575 42,578" fill="#ffff00"/><polygon points="710,455 800,440 898,430 898,478 800,470" fill="#00ff00"/><polygon points="42,115 200,110 330,120 400,128 550,122 780,128 550,140 400,140 330,165 250,190 180,195 100,180 42,160" fill="#ffa500"/><polygon points="42,325 200,335 400,325 550,305 720,298 898,315 898,385 800,385 650,395 520,405 400,395 250,385 100,375 42,365" fill="#ffa500"/><polygon points="135,775 300,775 300,830 170,830 145,800" fill="#ffa500"/><polygon points="480,775 600,768 750,765 898,752 898,785 750,795 650,808 560,795" fill="#ffa500"/><polygon points="42,35 230,35 225,45 42,50" fill="#0000ff"/><polygon points="810,235 850,220 898,218 898,250 850,250" fill="#0000ff"/><polygon points="42,635 100,632 200,655 360,655 500,640 620,630 700,632 720,618 760,630 835,662 760,695 600,695 500,685 420,675 300,680 200,680 130,695 42,695" fill="#0000ff"/></svg>
<svg style="position:absolute;left:729.2px;top:290.0px" width="128" height="120"><path d="M0.7 5 V1.2 H5.5 M119.5 1.2 H124.3 M0.7 109.5 V114.5" fill="none" stroke="#8fa89a" stroke-width="1.1"/></svg>
<div style="position:absolute;left:862.50px;top:284.75px;font-size:11.5px;line-height:15.5px;color:#f4f4f4;white-space:nowrap;transform:scaleX(0.7922);transform-origin:0 50%;">141</div>
<div style="position:absolute;left:862.50px;top:307.47px;font-size:11.5px;line-height:15.5px;color:#f4f4f4;white-space:nowrap;transform:scaleX(0.7922);transform-origin:0 50%;">144</div>
<div style="position:absolute;left:862.50px;top:330.19px;font-size:11.5px;line-height:15.5px;color:#f4f4f4;white-space:nowrap;transform:scaleX(0.7922);transform-origin:0 50%;">147</div>
<div style="position:absolute;left:862.50px;top:352.91px;font-size:11.5px;line-height:15.5px;color:#f4f4f4;white-space:nowrap;transform:scaleX(0.7922);transform-origin:0 50%;">150</div>
<div style="position:absolute;left:862.50px;top:375.63px;font-size:11.5px;line-height:15.5px;color:#f4f4f4;white-space:nowrap;transform:scaleX(0.7922);transform-origin:0 50%;">153</div>
<div style="position:absolute;left:862.50px;top:398.35px;font-size:11.5px;line-height:15.5px;color:#f4f4f4;white-space:nowrap;transform:scaleX(0.7922);transform-origin:0 50%;">156</div>
<div style="position:absolute;left:884.1px;top:320.6px;width:6.2px;height:56px;overflow:hidden"><div style="position:absolute;left:0;top:0;width:56px;height:14px;line-height:14px;font-size:9.5px;color:#f4f4f4;text-align:center;transform-origin:0 0;transform:translate(0px,56px) rotate(-90deg)">Time (s)</div></div>
<div style="position:absolute;left:723.5px;top:413.0px;width:12px;height:6.5px;overflow:hidden"><div style="position:absolute;left:0;top:0;width:16px;height:12px;line-height:12px;font-size:10.5px;color:#e8e8e8;text-align:right;transform-origin:0 0;transform:translate(0px,16px) rotate(-90deg) scaleX(0.88);opacity:.8">8</div></div>
<div style="position:absolute;left:747.9px;top:413.0px;width:12px;height:6.5px;overflow:hidden"><div style="position:absolute;left:0;top:0;width:16px;height:12px;line-height:12px;font-size:10.5px;color:#e8e8e8;text-align:right;transform-origin:0 0;transform:translate(0px,16px) rotate(-90deg) scaleX(0.88);opacity:.8">9</div></div>
<div style="position:absolute;left:772.2px;top:413.0px;width:12px;height:6.5px;overflow:hidden"><div style="position:absolute;left:0;top:0;width:16px;height:12px;line-height:12px;font-size:10.5px;color:#e8e8e8;text-align:right;transform-origin:0 0;transform:translate(0px,16px) rotate(-90deg) scaleX(0.88);opacity:.8">10</div></div>
<div style="position:absolute;left:796.6px;top:413.0px;width:12px;height:6.5px;overflow:hidden"><div style="position:absolute;left:0;top:0;width:16px;height:12px;line-height:12px;font-size:10.5px;color:#e8e8e8;text-align:right;transform-origin:0 0;transform:translate(0px,16px) rotate(-90deg) scaleX(0.88);opacity:.8">11</div></div>
<div style="position:absolute;left:820.9px;top:413.0px;width:12px;height:6.5px;overflow:hidden"><div style="position:absolute;left:0;top:0;width:16px;height:12px;line-height:12px;font-size:10.5px;color:#e8e8e8;text-align:right;transform-origin:0 0;transform:translate(0px,16px) rotate(-90deg) scaleX(0.88);opacity:.8">12</div></div>
<div style="position:absolute;left:845.3px;top:413.0px;width:12px;height:6.5px;overflow:hidden"><div style="position:absolute;left:0;top:0;width:16px;height:12px;line-height:12px;font-size:10.5px;color:#e8e8e8;text-align:right;transform-origin:0 0;transform:translate(0px,16px) rotate(-90deg) scaleX(0.88);opacity:.8">13</div></div>
<div style="position:absolute;left:767.32px;top:427.85px;font-size:11.5px;line-height:15.5px;color:#f4f4f4;white-space:nowrap;transform:scaleX(0.8753);transform-origin:50% 50%;">Freq (Hz)</div>
<div style="position:absolute;left:475.9px;top:463.1px;width:206.5px;height:190px;box-sizing:border-box;border:1.2px solid #7070ff;box-shadow:inset 0 0 0 3px #0000ee;"></div>
<div style="position:absolute;left:566.66px;top:449.00px;font-size:12px;line-height:16px;color:#e8f0f4;white-space:nowrap;transform:scaleX(0.9000);transform-origin:50% 50%;">Beta</div>
<svg style="position:absolute;left:519.0px;top:503.2px" width="121.8" height="113" viewBox="42 35 856 795" preserveAspectRatio="none" shape-rendering="crispEdges"><rect x="42" y="35" width="856" height="795" fill="#00ff00"/><polygon points="42,75 100,60 150,70 165,35 275,35 290,80 330,110 400,100 450,130 465,170 430,205 380,160 330,150 280,175 245,215 250,270 290,310 340,330 375,370 385,430 380,490 370,535 300,545 230,565 185,555 190,520 240,490 270,470 265,420 230,410 180,400 110,415 42,420" fill="#ffff00"/><polygon points="42,165 120,155 165,185 175,235 140,280 42,285" fill="#00ff00"/><polygon points="42,480 75,540 60,590 42,600" fill="#ffff00"/><polygon points="530,285 600,320 645,360 650,400 600,382 555,400 520,440 490,452 465,420 445,400 420,425 395,445 385,420 440,378 485,425 510,400 530,360" fill="#ffff00"/><polygon points="650,170 695,90 745,170 790,140 830,125 855,120 850,150 815,165 800,200 745,195 690,250 660,200" fill="#ffff00"/><polygon points="810,355 898,335 898,480 850,500 810,450" fill="#ffff00"/><polygon points="42,700 90,720 115,760 115,830 42,830" fill="#ffff00"/><polygon points="180,790 200,750 260,720 300,700 345,730 350,770 320,810 300,830 190,830" fill="#ffff00"/><polygon points="400,780 420,740 450,690 500,650 550,645 590,690 620,730 650,760 680,690 700,680 740,710 750,760 740,830 640,830 640,790 600,830 420,830" fill="#ffff00"/><polygon points="845,830 870,780 898,750 898,830" fill="#ffff00"/><polygon points="601,620 596,628 588,628 583,620 588,612 596,612" fill="#ffff00"/><polygon points="42,320 100,325 120,350 90,375 42,378" fill="#ffa500"/><polygon points="265,400 300,380 340,395 355,440 340,485 300,498 272,470" fill="#ffa500"/><polygon points="175,125 195,120 200,140 188,165" fill="#ffa500"/><polygon points="435,775 470,740 490,705 540,715 510,760 470,790 445,805" fill="#ffa500"/><polygon points="42,765 75,770 60,785 42,785" fill="#ffa500"/><polygon points="845,410 853,410 855,450 847,450" fill="#ffa500"/><polygon points="42,222 110,215 135,225 135,245 110,252 42,250" fill="#0000ff"/><polygon points="319,240 315,253 304,261 290,261 279,253 275,240 279,227 290,219 304,219 315,227" fill="#0000ff"/><polygon points="362,232 400,238 440,275 470,260 465,300 410,320 378,295 375,260" fill="#0000ff"/><polygon points="130,545 150,590 215,620 222,680 140,730 100,680 92,640 110,590" fill="#0000ff"/><polygon points="333,35 350,35 348,60 335,60" fill="#0000ff"/><polygon points="735,290 745,280 752,300 745,322 735,312" fill="#0000ff"/><polygon points="688,595 700,578 715,595 712,612 695,617" fill="#0000ff"/><polygon points="845,235 856,235 855,250 846,250" fill="#0000ff"/></svg>
<svg style="position:absolute;left:517.0px;top:500.2px" width="128" height="120"><path d="M0.7 5 V1.2 H5.5 M119.5 1.2 H124.3 M0.7 109.5 V114.5" fill="none" stroke="#8fa89a" stroke-width="1.1"/></svg>
<div style="position:absolute;left:650.30px;top:494.95px;font-size:11.5px;line-height:15.5px;color:#f4f4f4;white-space:nowrap;transform:scaleX(0.7922);transform-origin:0 50%;">141</div>
<div style="position:absolute;left:650.30px;top:517.67px;font-size:11.5px;line-height:15.5px;color:#f4f4f4;white-space:nowrap;transform:scaleX(0.7922);transform-origin:0 50%;">144</div>
<div style="position:absolute;left:650.30px;top:540.39px;font-size:11.5px;line-height:15.5px;color:#f4f4f4;white-space:nowrap;transform:scaleX(0.7922);transform-origin:0 50%;">147</div>
<div style="position:absolute;left:650.30px;top:563.11px;font-size:11.5px;line-height:15.5px;color:#f4f4f4;white-space:nowrap;transform:scaleX(0.7922);transform-origin:0 50%;">150</div>
<div style="position:absolute;left:650.30px;top:585.83px;font-size:11.5px;line-height:15.5px;color:#f4f4f4;white-space:nowrap;transform:scaleX(0.7922);transform-origin:0 50%;">153</div>
<div style="position:absolute;left:650.30px;top:608.55px;font-size:11.5px;line-height:15.5px;color:#f4f4f4;white-space:nowrap;transform:scaleX(0.7922);transform-origin:0 50%;">156</div>
<div style="position:absolute;left:671.9px;top:530.8px;width:6.2px;height:56px;overflow:hidden"><div style="position:absolute;left:0;top:0;width:56px;height:14px;line-height:14px;font-size:9.5px;color:#f4f4f4;text-align:center;transform-origin:0 0;transform:translate(0px,56px) rotate(-90deg)">Time (s)</div></div>
<div style="position:absolute;left:511.3px;top:623.2px;width:12px;height:16px;overflow:hidden"><div style="position:absolute;left:0;top:0;width:16px;height:12px;line-height:12px;font-size:10.5px;color:#e8e8e8;text-align:right;transform-origin:0 0;transform:translate(0px,16px) rotate(-90deg) scaleX(0.88);opacity:.8">13</div></div>
<div style="position:absolute;left:532.8px;top:623.2px;width:12px;height:16px;overflow:hidden"><div style="position:absolute;left:0;top:0;width:16px;height:12px;line-height:12px;font-size:10.5px;color:#e8e8e8;text-align:right;transform-origin:0 0;transform:translate(0px,16px) rotate(-90deg) scaleX(0.88);opacity:.8">16</div></div>
<div style="position:absolute;left:554.3px;top:623.2px;width:12px;height:16px;overflow:hidden"><div style="position:absolute;left:0;top:0;width:16px;height:12px;line-height:12px;font-size:10.5px;color:#e8e8e8;text-align:right;transform-origin:0 0;transform:translate(0px,16px) rotate(-90deg) scaleX(0.88);opacity:.8">19</div></div>
<div style="position:absolute;left:575.9px;top:623.2px;width:12px;height:16px;overflow:hidden"><div style="position:absolute;left:0;top:0;width:16px;height:12px;line-height:12px;font-size:10.5px;color:#e8e8e8;text-align:right;transform-origin:0 0;transform:translate(0px,16px) rotate(-90deg) scaleX(0.88);opacity:.8">22</div></div>
<div style="position:absolute;left:597.4px;top:623.2px;width:12px;height:16px;overflow:hidden"><div style="position:absolute;left:0;top:0;width:16px;height:12px;line-height:12px;font-size:10.5px;color:#e8e8e8;text-align:right;transform-origin:0 0;transform:translate(0px,16px) rotate(-90deg) scaleX(0.88);opacity:.8">25</div></div>
<div style="position:absolute;left:618.9px;top:623.2px;width:12px;height:16px;overflow:hidden"><div style="position:absolute;left:0;top:0;width:16px;height:12px;line-height:12px;font-size:10.5px;color:#e8e8e8;text-align:right;transform-origin:0 0;transform:translate(0px,16px) rotate(-90deg) scaleX(0.88);opacity:.8">28</div></div>
<div style="position:absolute;left:555.12px;top:638.05px;font-size:11.5px;line-height:15.5px;color:#f4f4f4;white-space:nowrap;transform:scaleX(0.8753);transform-origin:50% 50%;">Freq (Hz)</div>
<div style="position:absolute;left:688.1px;top:463.1px;width:206.5px;height:190px;box-sizing:border-box;border:1.2px solid #7070ff;box-shadow:inset 0 0 0 3px #0000ee;"></div>
<div style="position:absolute;left:774.19px;top:449.00px;font-size:12px;line-height:16px;color:#e8f0f4;white-space:nowrap;transform:scaleX(0.9000);transform-origin:50% 50%;">Sigma</div>
<svg style="position:absolute;left:731.2px;top:503.2px" width="121.8" height="113" viewBox="42 35 856 795" preserveAspectRatio="none" shape-rendering="crispEdges"><rect x="42" y="35" width="856" height="795" fill="#00ff00"/><polygon points="42,50 250,60 600,70 800,90 898,95 898,155 700,160 400,162 200,175 42,195" fill="#ffff00"/><polygon points="42,268 300,285 600,290 898,285 898,410 700,415 400,425 200,440 42,452" fill="#ffff00"/><polygon points="42,460 150,465 450,485 610,555 480,590 350,620 200,600 42,575" fill="#ffff00"/><polygon points="42,735 150,720 300,705 520,710 700,735 800,770 830,795 800,830 380,830 330,822 280,830 42,830" fill="#ffff00"/><polygon points="42,305 200,310 500,320 750,325 840,345 750,360 500,375 200,378 42,390" fill="#ffa500"/><polygon points="42,770 200,757 400,755 560,760 640,775 560,785 300,785 150,790 42,795" fill="#ffa500"/><polygon points="285,558 320,548 350,558 320,562" fill="#ffa500"/><polygon points="42,125 130,128 130,132 42,131" fill="#ffa500"/><polygon points="170,235 230,222 320,212 450,218 640,215 800,210 898,210 898,250 800,248 640,238 450,250 300,252 220,245" fill="#0000ff"/><polygon points="42,625 120,640 205,662 120,685 42,695" fill="#0000ff"/><polygon points="678,662 760,600 898,542 898,730 800,700" fill="#0000ff"/></svg>
<svg style="position:absolute;left:729.2px;top:500.2px" width="128" height="120"><path d="M0.7 5 V1.2 H5.5 M119.5 1.2 H124.3 M0.7 109.5 V114.5" fill="none" stroke="#8fa89a" stroke-width="1.1"/></svg>
<div style="position:absolute;left:862.50px;top:494.95px;font-size:11.5px;line-height:15.5px;color:#f4f4f4;white-space:nowrap;transform:scaleX(0.7922);transform-origin:0 50%;">141</div>
<div style="position:absolute;left:862.50px;top:517.67px;font-size:11.5px;line-height:15.5px;color:#f4f4f4;white-space:nowrap;transform:scaleX(0.7922);transform-origin:0 50%;">144</div>
<div style="position:absolute;left:862.50px;top:540.39px;font-size:11.5px;line-height:15.5px;color:#f4f4f4;white-space:nowrap;transform:scaleX(0.7922);transform-origin:0 50%;">147</div>
<div style="position:absolute;left:862.50px;top:563.11px;font-size:11.5px;line-height:15.5px;color:#f4f4f4;white-space:nowrap;transform:scaleX(0.7922);transform-origin:0 50%;">150</div>
<div style="position:absolute;left:862.50px;top:585.83px;font-size:11.5px;line-height:15.5px;color:#f4f4f4;white-space:nowrap;transform:scaleX(0.7922);transform-origin:0 50%;">153</div>
<div style="position:absolute;left:862.50px;top:608.55px;font-size:11.5px;line-height:15.5px;color:#f4f4f4;white-space:nowrap;transform:scaleX(0.7922);transform-origin:0 50%;">156</div>
<div style="position:absolute;left:884.1px;top:530.8px;width:6.2px;height:56px;overflow:hidden"><div style="position:absolute;left:0;top:0;width:56px;height:14px;line-height:14px;font-size:9.5px;color:#f4f4f4;text-align:center;transform-origin:0 0;transform:translate(0px,56px) rotate(-90deg)">Time (s)</div></div>
<div style="position:absolute;left:723.5px;top:623.2px;width:12px;height:8.5px;overflow:hidden"><div style="position:absolute;left:0;top:0;width:16px;height:12px;line-height:12px;font-size:10.5px;color:#e8e8e8;text-align:right;transform-origin:0 0;transform:translate(0px,16px) rotate(-90deg) scaleX(0.88);opacity:.8">12</div></div>
<div style="position:absolute;left:764.1px;top:623.2px;width:12px;height:8.5px;overflow:hidden"><div style="position:absolute;left:0;top:0;width:16px;height:12px;line-height:12px;font-size:10.5px;color:#e8e8e8;text-align:right;transform-origin:0 0;transform:translate(0px,16px) rotate(-90deg) scaleX(0.88);opacity:.8">13</div></div>
<div style="position:absolute;left:804.7px;top:623.2px;width:12px;height:8.5px;overflow:hidden"><div style="position:absolute;left:0;top:0;width:16px;height:12px;line-height:12px;font-size:10.5px;color:#e8e8e8;text-align:right;transform-origin:0 0;transform:translate(0px,16px) rotate(-90deg) scaleX(0.88);opacity:.8">14</div></div>
<div style="position:absolute;left:845.3px;top:623.2px;width:12px;height:8.5px;overflow:hidden"><div style="position:absolute;left:0;top:0;width:16px;height:12px;line-height:12px;font-size:10.5px;color:#e8e8e8;text-align:right;transform-origin:0 0;transform:translate(0px,16px) rotate(-90deg) scaleX(0.88);opacity:.8">15</div></div>
<div style="position:absolute;left:767.32px;top:638.05px;font-size:11.5px;line-height:15.5px;color:#f4f4f4;white-space:nowrap;transform:scaleX(0.8753);transform-origin:50% 50%;">Freq (Hz)</div>
<div style="position:absolute;left:921.4px;top:253px;width:204.2px;height:189.2px;box-sizing:border-box;border:1.2px solid #7070ff;box-shadow:inset 0 0 0 2.4px #0000ee;"></div>
<div style="position:absolute;left:1008.16px;top:239.00px;font-size:12px;line-height:16px;color:#e8f0f4;white-space:nowrap;transform:scaleX(0.9000);transform-origin:50% 50%;">Theta</div>
<svg style="position:absolute;left:918px;top:250px" width="212" height="195" viewBox="0 0 933 858"><defs><clipPath id="hct"><polygon points="467.5,103.0 450.8,103.1 434.2,103.4 420.0,104.0 410.7,104.7 403.8,105.8 395.0,108.0 382.3,111.5 367.7,116.1 352.0,122.0 335.1,129.6 317.2,138.6 300.0,148.0 283.9,157.4 268.5,167.2 254.0,178.0 240.5,190.3 227.9,203.5 216.0,217.0 204.7,230.1 194.3,243.5 185.0,258.0 177.2,274.3 170.6,291.6 165.0,309.0 160.3,326.0 156.7,342.9 154.0,360.0 152.6,377.4 152.2,394.9 152.0,412.0 151.7,427.8 151.6,443.2 151.5,460.0 151.3,479.6 151.2,500.6 151.7,520.6 152.6,538.5 154.0,555.5 156.8,571.8 161.6,587.8 167.9,603.2 174.7,618.0 181.5,632.1 189.0,645.5 197.8,659.0 208.6,672.9 220.9,686.7 233.7,700.0 246.8,712.6 260.5,724.6 274.8,736.0 289.6,746.9 305.0,757.2 321.0,766.7 337.7,775.2 355.0,783.0 372.3,789.8 389.6,795.9 407.0,801.1 423.5,805.2 438.7,808.3 453.1,810.3 467.5,811.0 481.9,810.3 496.3,808.3 511.5,805.2 528.0,801.1 545.4,795.9 562.7,789.8 580.0,783.0 597.3,775.2 614.0,766.7 630.0,757.2 645.4,746.9 660.2,736.0 674.5,724.6 688.2,712.6 701.3,700.0 714.1,686.7 726.4,672.9 737.2,659.0 746.0,645.5 753.5,632.1 760.3,618.0 767.1,603.2 773.4,587.8 778.2,571.8 781.0,555.5 782.4,538.5 783.3,520.6 783.8,500.6 783.7,479.6 783.5,460.0 783.4,443.2 783.3,427.8 783.0,412.0 782.8,394.9 782.4,377.4 781.0,360.0 778.3,342.9 774.7,326.0 770.0,309.0 764.4,291.6 757.8,274.3 750.0,258.0 740.7,243.5 730.3,230.1 719.0,217.0 707.1,203.5 694.5,190.3 681.0,178.0 666.5,167.2 651.1,157.4 635.0,148.0 617.8,138.6 599.9,129.6 583.0,122.0 567.3,116.1 552.7,111.5 540.0,108.0 531.2,105.8 524.3,104.7 515.0,104.0 500.8,103.4 484.2,103.1" fill="#000"/></clipPath><filter id="hbt_8" filterUnits="userSpaceOnUse" x="-100" y="-100" width="1133" height="1058"><feGaussianBlur stdDeviation="8"/></filter><filter id="hbt_12" filterUnits="userSpaceOnUse" x="-100" y="-100" width="1133" height="1058"><feGaussianBlur stdDeviation="12"/></filter><filter id="hbt_16" filterUnits="userSpaceOnUse" x="-100" y="-100" width="1133" height="1058"><feGaussianBlur stdDeviation="16"/></filter><filter id="hbt_22" filterUnits="userSpaceOnUse" x="-100" y="-100" width="1133" height="1058"><feGaussianBlur stdDeviation="22"/></filter><filter id="hbt_30" filterUnits="userSpaceOnUse" x="-100" y="-100" width="1133" height="1058"><feGaussianBlur stdDeviation="30"/></filter></defs><path d="M396 92 L441 43 Q478 24 515 43 L558 92 Z M431 78 L457 50 Q480 44 505 50 L529 78 Z" fill="#0808f0" fill-rule="evenodd"/><ellipse cx="103.4" cy="476.5" rx="29" ry="59" fill="#000" stroke="#0808f0" stroke-width="18.5"/><ellipse cx="831.6" cy="476.5" rx="29" ry="59" fill="#000" stroke="#0808f0" stroke-width="18.5"/><polygon points="467.5,80.0 452.7,80.5 437.9,81.9 423.0,84.0 407.8,86.7 392.4,90.1 377.0,94.0 361.7,98.2 346.3,103.0 331.0,109.0 315.7,116.6 300.3,125.4 285.0,135.0 269.5,145.1 254.0,155.9 239.0,168.0 224.6,181.8 210.7,196.8 198.0,212.0 186.6,227.0 176.4,242.2 167.0,258.0 158.4,274.6 150.6,291.8 144.0,309.0 138.6,326.0 134.4,342.9 131.0,360.0 128.6,377.6 127.0,395.3 126.0,412.0 125.5,426.9 125.4,440.9 125.5,455.0 125.5,469.8 125.6,484.9 126.0,500.0 126.3,515.3 126.9,530.6 128.6,546.0 131.8,561.3 136.2,576.6 141.4,592.0 147.3,607.5 154.1,623.0 162.0,638.5 171.3,654.1 181.7,669.7 192.7,684.7 203.9,698.9 215.7,712.6 228.6,725.7 243.1,738.3 258.6,750.4 274.8,761.6 291.3,771.9 308.4,781.3 326.0,789.8 344.3,797.4 363.1,804.1 382.5,810.3 404.0,816.3 426.1,821.7 444.0,825.7 454.6,827.9 461.1,828.8 467.5,829.0 473.9,828.8 480.4,827.9 491.0,825.7 508.9,821.7 531.0,816.3 552.5,810.3 571.9,804.1 590.7,797.4 609.0,789.8 626.6,781.3 643.7,771.9 660.2,761.6 676.4,750.4 691.9,738.3 706.4,725.7 719.3,712.6 731.1,698.9 742.3,684.7 753.3,669.7 763.7,654.1 773.0,638.5 780.9,623.0 787.7,607.5 793.6,592.0 798.8,576.6 803.2,561.3 806.4,546.0 808.1,530.6 808.7,515.3 809.0,500.0 809.4,484.9 809.5,469.8 809.5,455.0 809.6,440.9 809.5,426.9 809.0,412.0 808.0,395.3 806.4,377.6 804.0,360.0 800.6,342.9 796.4,326.0 791.0,309.0 784.4,291.8 776.6,274.6 768.0,258.0 758.6,242.2 748.4,227.0 737.0,212.0 724.3,196.8 710.4,181.8 696.0,168.0 681.0,155.9 665.5,145.1 650.0,135.0 634.7,125.4 619.3,116.6 604.0,109.0 588.7,103.0 573.3,98.2 558.0,94.0 542.6,90.1 527.2,86.7 512.0,84.0 497.1,81.9 482.3,80.5" fill="#0808f0"/><g clip-path="url(#hct)"><rect x="0" y="0" width="933" height="858" fill="#28b010"/><g filter="url(#hbt_22)"><polygon points="100.0,60.0 800.0,60.0 800.0,330.0 560.0,320.0 400.0,340.0 250.0,372.0 100.0,360.0" fill="#80c810"/><polygon points="400.0,60.0 560.0,60.0 540.0,270.0 430.0,280.0" fill="#48c010" opacity="0.9"/><polygon points="100.0,80.0 380.0,60.0 410.0,170.0 340.0,270.0 250.0,310.0 120.0,340.0" fill="#d0cc14"/><polygon points="200.0,170.0 320.0,150.0 330.0,250.0 230.0,280.0" fill="#dcc818"/><polygon points="540.0,60.0 800.0,80.0 800.0,300.0 640.0,250.0 560.0,170.0" fill="#b0cc14"/><polygon points="640.0,280.0 800.0,300.0 800.0,700.0 700.0,640.0 680.0,450.0" fill="#50bc10"/><polygon points="262.0,372.0 520.0,338.0 570.0,560.0 430.0,630.0 270.0,600.0" fill="#0ca00c"/><polygon points="430.0,640.0 600.0,600.0 680.0,700.0 600.0,820.0 430.0,800.0" fill="#0a8848" opacity="0.9"/><polygon points="400.0,690.0 520.0,670.0 580.0,790.0 450.0,850.0" fill="#0a50b0" opacity="0.8"/></g><g filter="url(#hbt_12)"><polygon points="80.0,470.0 160.0,495.0 255.0,560.0 265.0,690.0 400.0,698.0 475.0,690.0 510.0,760.0 560.0,860.0 80.0,860.0" fill="#0808f0"/></g></g><ellipse cx="340" cy="177" rx="19.5" ry="18.5" fill="none" stroke="#0c0c64" stroke-width="4.6"/><ellipse cx="592" cy="177" rx="19.5" ry="18.5" fill="none" stroke="#0c0c64" stroke-width="4.6"/><ellipse cx="224" cy="305" rx="19.5" ry="18.5" fill="none" stroke="#0c0c64" stroke-width="4.6"/><ellipse cx="347" cy="313" rx="19.5" ry="18.5" fill="none" stroke="#0c0c64" stroke-width="4.6"/><ellipse cx="466" cy="322" rx="19.5" ry="18.5" fill="none" stroke="#0c0c64" stroke-width="4.6"/><ellipse cx="586" cy="313" rx="19.5" ry="18.5" fill="none" stroke="#0c0c64" stroke-width="4.6"/><ellipse cx="708" cy="305" rx="19.5" ry="18.5" fill="none" stroke="#0c0c64" stroke-width="4.6"/><ellipse cx="216" cy="434" rx="19.5" ry="18.5" fill="none" stroke="#0c0c64" stroke-width="4.6"/><ellipse cx="360" cy="434" rx="19.5" ry="18.5" fill="none" stroke="#0c0c64" stroke-width="4.6"/><ellipse cx="466" cy="434" rx="19.5" ry="18.5" fill="none" stroke="#0c0c64" stroke-width="4.6"/><ellipse cx="572" cy="434" rx="19.5" ry="18.5" fill="none" stroke="#0c0c64" stroke-width="4.6"/><ellipse cx="717" cy="434" rx="19.5" ry="18.5" fill="none" stroke="#0c0c64" stroke-width="4.6"/><ellipse cx="216" cy="568" rx="19.5" ry="18.5" fill="none" stroke="#0c0c64" stroke-width="4.6"/><ellipse cx="347" cy="560" rx="19.5" ry="18.5" fill="none" stroke="#0c0c64" stroke-width="4.6"/><ellipse cx="466" cy="552" rx="19.5" ry="18.5" fill="none" stroke="#0c0c64" stroke-width="4.6"/><ellipse cx="586" cy="560" rx="19.5" ry="18.5" fill="none" stroke="#0c0c64" stroke-width="4.6"/><ellipse cx="708" cy="568" rx="19.5" ry="18.5" fill="none" stroke="#0c0c64" stroke-width="4.6"/><ellipse cx="466" cy="688" rx="19.5" ry="18.5" fill="none" stroke="#0c0c64" stroke-width="4.6"/><ellipse cx="563" cy="750" rx="19.5" ry="18.5" fill="none" stroke="#0c0c64" stroke-width="4.6"/></svg>
<div style="position:absolute;left:1133.4px;top:253px;width:204.2px;height:189.2px;box-sizing:border-box;border:1.2px solid #7070ff;box-shadow:inset 0 0 0 2.4px #0000ee;"></div>
<div style="position:absolute;left:1220.15px;top:239.00px;font-size:12px;line-height:16px;color:#e8f0f4;white-space:nowrap;transform:scaleX(0.9000);transform-origin:50% 50%;">Alpha</div>
<svg style="position:absolute;left:1130px;top:250px" width="212" height="195" viewBox="0 0 933 858"><defs><clipPath id="hca"><polygon points="467.5,103.0 450.8,103.1 434.2,103.4 420.0,104.0 410.7,104.7 403.8,105.8 395.0,108.0 382.3,111.5 367.7,116.1 352.0,122.0 335.1,129.6 317.2,138.6 300.0,148.0 283.9,157.4 268.5,167.2 254.0,178.0 240.5,190.3 227.9,203.5 216.0,217.0 204.7,230.1 194.3,243.5 185.0,258.0 177.2,274.3 170.6,291.6 165.0,309.0 160.3,326.0 156.7,342.9 154.0,360.0 152.6,377.4 152.2,394.9 152.0,412.0 151.7,427.8 151.6,443.2 151.5,460.0 151.3,479.6 151.2,500.6 151.7,520.6 152.6,538.5 154.0,555.5 156.8,571.8 161.6,587.8 167.9,603.2 174.7,618.0 181.5,632.1 189.0,645.5 197.8,659.0 208.6,672.9 220.9,686.7 233.7,700.0 246.8,712.6 260.5,724.6 274.8,736.0 289.6,746.9 305.0,757.2 321.0,766.7 337.7,775.2 355.0,783.0 372.3,789.8 389.6,795.9 407.0,801.1 423.5,805.2 438.7,808.3 453.1,810.3 467.5,811.0 481.9,810.3 496.3,808.3 511.5,805.2 528.0,801.1 545.4,795.9 562.7,789.8 580.0,783.0 597.3,775.2 614.0,766.7 630.0,757.2 645.4,746.9 660.2,736.0 674.5,724.6 688.2,712.6 701.3,700.0 714.1,686.7 726.4,672.9 737.2,659.0 746.0,645.5 753.5,632.1 760.3,618.0 767.1,603.2 773.4,587.8 778.2,571.8 781.0,555.5 782.4,538.5 783.3,520.6 783.8,500.6 783.7,479.6 783.5,460.0 783.4,443.2 783.3,427.8 783.0,412.0 782.8,394.9 782.4,377.4 781.0,360.0 778.3,342.9 774.7,326.0 770.0,309.0 764.4,291.6 757.8,274.3 750.0,258.0 740.7,243.5 730.3,230.1 719.0,217.0 707.1,203.5 694.5,190.3 681.0,178.0 666.5,167.2 651.1,157.4 635.0,148.0 617.8,138.6 599.9,129.6 583.0,122.0 567.3,116.1 552.7,111.5 540.0,108.0 531.2,105.8 524.3,104.7 515.0,104.0 500.8,103.4 484.2,103.1" fill="#000"/></clipPath><filter id="hba_8" filterUnits="userSpaceOnUse" x="-100" y="-100" width="1133" height="1058"><feGaussianBlur stdDeviation="8"/></filter><filter id="hba_12" filterUnits="userSpaceOnUse" x="-100" y="-100" width="1133" height="1058"><feGaussianBlur stdDeviation="12"/></filter><filter id="hba_16" filterUnits="userSpaceOnUse" x="-100" y="-100" width="1133" height="1058"><feGaussianBlur stdDeviation="16"/></filter><filter id="hba_22" filterUnits="userSpaceOnUse" x="-100" y="-100" width="1133" height="1058"><feGaussianBlur stdDeviation="22"/></filter><filter id="hba_30" filterUnits="userSpaceOnUse" x="-100" y="-100" width="1133" height="1058"><feGaussianBlur stdDeviation="30"/></filter></defs><path d="M396 92 L441 43 Q478 24 515 43 L558 92 Z M431 78 L457 50 Q480 44 505 50 L529 78 Z" fill="#0808f0" fill-rule="evenodd"/><ellipse cx="103.4" cy="476.5" rx="29" ry="59" fill="#000" stroke="#0808f0" stroke-width="18.5"/><ellipse cx="831.6" cy="476.5" rx="29" ry="59" fill="#000" stroke="#0808f0" stroke-width="18.5"/><polygon points="467.5,80.0 452.7,80.5 437.9,81.9 423.0,84.0 407.8,86.7 392.4,90.1 377.0,94.0 361.7,98.2 346.3,103.0 331.0,109.0 315.7,116.6 300.3,125.4 285.0,135.0 269.5,145.1 254.0,155.9 239.0,168.0 224.6,181.8 210.7,196.8 198.0,212.0 186.6,227.0 176.4,242.2 167.0,258.0 158.4,274.6 150.6,291.8 144.0,309.0 138.6,326.0 134.4,342.9 131.0,360.0 128.6,377.6 127.0,395.3 126.0,412.0 125.5,426.9 125.4,440.9 125.5,455.0 125.5,469.8 125.6,484.9 126.0,500.0 126.3,515.3 126.9,530.6 128.6,546.0 131.8,561.3 136.2,576.6 141.4,592.0 147.3,607.5 154.1,623.0 162.0,638.5 171.3,654.1 181.7,669.7 192.7,684.7 203.9,698.9 215.7,712.6 228.6,725.7 243.1,738.3 258.6,750.4 274.8,761.6 291.3,771.9 308.4,781.3 326.0,789.8 344.3,797.4 363.1,804.1 382.5,810.3 404.0,816.3 426.1,821.7 444.0,825.7 454.6,827.9 461.1,828.8 467.5,829.0 473.9,828.8 480.4,827.9 491.0,825.7 508.9,821.7 531.0,816.3 552.5,810.3 571.9,804.1 590.7,797.4 609.0,789.8 626.6,781.3 643.7,771.9 660.2,761.6 676.4,750.4 691.9,738.3 706.4,725.7 719.3,712.6 731.1,698.9 742.3,684.7 753.3,669.7 763.7,654.1 773.0,638.5 780.9,623.0 787.7,607.5 793.6,592.0 798.8,576.6 803.2,561.3 806.4,546.0 808.1,530.6 808.7,515.3 809.0,500.0 809.4,484.9 809.5,469.8 809.5,455.0 809.6,440.9 809.5,426.9 809.0,412.0 808.0,395.3 806.4,377.6 804.0,360.0 800.6,342.9 796.4,326.0 791.0,309.0 784.4,291.8 776.6,274.6 768.0,258.0 758.6,242.2 748.4,227.0 737.0,212.0 724.3,196.8 710.4,181.8 696.0,168.0 681.0,155.9 665.5,145.1 650.0,135.0 634.7,125.4 619.3,116.6 604.0,109.0 588.7,103.0 573.3,98.2 558.0,94.0 542.6,90.1 527.2,86.7 512.0,84.0 497.1,81.9 482.3,80.5" fill="#0808f0"/><g clip-path="url(#hca)"><rect x="0" y="0" width="933" height="858" fill="#d80000"/><g filter="url(#hba_16)"><polygon points="100.0,330.0 100.0,60.0 470.0,60.0 470.0,215.0 400.0,280.0 300.0,348.0 262.0,450.0 225.0,550.0 205.0,650.0 100.0,600.0" fill="#e0c018"/><polygon points="470.0,60.0 620.0,100.0 760.0,230.0 820.0,340.0 820.0,500.0 745.0,425.0 640.0,345.0 540.0,292.0 470.0,255.0" fill="#e4a018"/><polygon points="600.0,100.0 780.0,220.0 800.0,380.0 700.0,300.0 620.0,200.0" fill="#e0b41c" opacity="0.8"/></g><g filter="url(#hba_12)"><polygon points="448.0,60.0 492.0,60.0 488.0,262.0 452.0,262.0" fill="#e05c0c" opacity="0.9"/><polygon points="140.0,240.0 280.0,125.0 375.0,70.0 425.0,85.0 400.0,160.0 350.0,200.0 285.0,210.0 200.0,262.0" fill="#00b800"/></g><g filter="url(#hba_8)"><polygon points="330.0,95.0 385.0,85.0 372.0,132.0 340.0,142.0" fill="#1040d0" opacity="0.85"/></g></g><ellipse cx="340" cy="177" rx="19.5" ry="18.5" fill="none" stroke="#0c0c64" stroke-width="4.6"/><ellipse cx="592" cy="177" rx="19.5" ry="18.5" fill="none" stroke="#0c0c64" stroke-width="4.6"/><ellipse cx="224" cy="305" rx="19.5" ry="18.5" fill="none" stroke="#0c0c64" stroke-width="4.6"/><ellipse cx="347" cy="313" rx="19.5" ry="18.5" fill="none" stroke="#0c0c64" stroke-width="4.6"/><ellipse cx="466" cy="322" rx="19.5" ry="18.5" fill="none" stroke="#0c0c64" stroke-width="4.6"/><ellipse cx="586" cy="313" rx="19.5" ry="18.5" fill="none" stroke="#0c0c64" stroke-width="4.6"/><ellipse cx="708" cy="305" rx="19.5" ry="18.5" fill="none" stroke="#0c0c64" stroke-width="4.6"/><ellipse cx="216" cy="434" rx="19.5" ry="18.5" fill="none" stroke="#0c0c64" stroke-width="4.6"/><ellipse cx="360" cy="434" rx="19.5" ry="18.5" fill="none" stroke="#0c0c64" stroke-width="4.6"/><ellipse cx="466" cy="434" rx="19.5" ry="18.5" fill="none" stroke="#0c0c64" stroke-width="4.6"/><ellipse cx="572" cy="434" rx="19.5" ry="18.5" fill="none" stroke="#0c0c64" stroke-width="4.6"/><ellipse cx="717" cy="434" rx="19.5" ry="18.5" fill="none" stroke="#0c0c64" stroke-width="4.6"/><ellipse cx="216" cy="568" rx="19.5" ry="18.5" fill="none" stroke="#0c0c64" stroke-width="4.6"/><ellipse cx="347" cy="560" rx="19.5" ry="18.5" fill="none" stroke="#0c0c64" stroke-width="4.6"/><ellipse cx="466" cy="552" rx="19.5" ry="18.5" fill="none" stroke="#0c0c64" stroke-width="4.6"/><ellipse cx="586" cy="560" rx="19.5" ry="18.5" fill="none" stroke="#0c0c64" stroke-width="4.6"/><ellipse cx="708" cy="568" rx="19.5" ry="18.5" fill="none" stroke="#0c0c64" stroke-width="4.6"/><ellipse cx="466" cy="688" rx="19.5" ry="18.5" fill="none" stroke="#0c0c64" stroke-width="4.6"/><ellipse cx="370" cy="750" rx="19.5" ry="18.5" fill="none" stroke="#0c0c64" stroke-width="4.6"/><ellipse cx="563" cy="750" rx="19.5" ry="18.5" fill="none" stroke="#0c0c64" stroke-width="4.6"/></svg>
<div style="position:absolute;left:921.4px;top:463px;width:204.2px;height:189.2px;box-sizing:border-box;border:1.2px solid #7070ff;box-shadow:inset 0 0 0 2.4px #0000ee;"></div>
<div style="position:absolute;left:1011.16px;top:449.00px;font-size:12px;line-height:16px;color:#e8f0f4;white-space:nowrap;transform:scaleX(0.9000);transform-origin:50% 50%;">Beta</div>
<svg style="position:absolute;left:918px;top:460px" width="212" height="195" viewBox="0 0 933 858"><defs><clipPath id="hcb"><polygon points="467.5,103.0 450.8,103.1 434.2,103.4 420.0,104.0 410.7,104.7 403.8,105.8 395.0,108.0 382.3,111.5 367.7,116.1 352.0,122.0 335.1,129.6 317.2,138.6 300.0,148.0 283.9,157.4 268.5,167.2 254.0,178.0 240.5,190.3 227.9,203.5 216.0,217.0 204.7,230.1 194.3,243.5 185.0,258.0 177.2,274.3 170.6,291.6 165.0,309.0 160.3,326.0 156.7,342.9 154.0,360.0 152.6,377.4 152.2,394.9 152.0,412.0 151.7,427.8 151.6,443.2 151.5,460.0 151.3,479.6 151.2,500.6 151.7,520.6 152.6,538.5 154.0,555.5 156.8,571.8 161.6,587.8 167.9,603.2 174.7,618.0 181.5,632.1 189.0,645.5 197.8,659.0 208.6,672.9 220.9,686.7 233.7,700.0 246.8,712.6 260.5,724.6 274.8,736.0 289.6,746.9 305.0,757.2 321.0,766.7 337.7,775.2 355.0,783.0 372.3,789.8 389.6,795.9 407.0,801.1 423.5,805.2 438.7,808.3 453.1,810.3 467.5,811.0 481.9,810.3 496.3,808.3 511.5,805.2 528.0,801.1 545.4,795.9 562.7,789.8 580.0,783.0 597.3,775.2 614.0,766.7 630.0,757.2 645.4,746.9 660.2,736.0 674.5,724.6 688.2,712.6 701.3,700.0 714.1,686.7 726.4,672.9 737.2,659.0 746.0,645.5 753.5,632.1 760.3,618.0 767.1,603.2 773.4,587.8 778.2,571.8 781.0,555.5 782.4,538.5 783.3,520.6 783.8,500.6 783.7,479.6 783.5,460.0 783.4,443.2 783.3,427.8 783.0,412.0 782.8,394.9 782.4,377.4 781.0,360.0 778.3,342.9 774.7,326.0 770.0,309.0 764.4,291.6 757.8,274.3 750.0,258.0 740.7,243.5 730.3,230.1 719.0,217.0 707.1,203.5 694.5,190.3 681.0,178.0 666.5,167.2 651.1,157.4 635.0,148.0 617.8,138.6 599.9,129.6 583.0,122.0 567.3,116.1 552.7,111.5 540.0,108.0 531.2,105.8 524.3,104.7 515.0,104.0 500.8,103.4 484.2,103.1" fill="#000"/></clipPath><filter id="hbb_8" filterUnits="userSpaceOnUse" x="-100" y="-100" width="1133" height="1058"><feGaussianBlur stdDeviation="8"/></filter><filter id="hbb_12" filterUnits="userSpaceOnUse" x="-100" y="-100" width="1133" height="1058"><feGaussianBlur stdDeviation="12"/></filter><filter id="hbb_16" filterUnits="userSpaceOnUse" x="-100" y="-100" width="1133" height="1058"><feGaussianBlur stdDeviation="16"/></filter><filter id="hbb_22" filterUnits="userSpaceOnUse" x="-100" y="-100" width="1133" height="1058"><feGaussianBlur stdDeviation="22"/></filter><filter id="hbb_30" filterUnits="userSpaceOnUse" x="-100" y="-100" width="1133" height="1058"><feGaussianBlur stdDeviation="30"/></filter></defs><path d="M396 92 L441 43 Q478 24 515 43 L558 92 Z M431 78 L457 50 Q480 44 505 50 L529 78 Z" fill="#0808f0" fill-rule="evenodd"/><ellipse cx="103.4" cy="476.5" rx="29" ry="59" fill="#000" stroke="#0808f0" stroke-width="18.5"/><ellipse cx="831.6" cy="476.5" rx="29" ry="59" fill="#000" stroke="#0808f0" stroke-width="18.5"/><polygon points="467.5,80.0 452.7,80.5 437.9,81.9 423.0,84.0 407.8,86.7 392.4,90.1 377.0,94.0 361.7,98.2 346.3,103.0 331.0,109.0 315.7,116.6 300.3,125.4 285.0,135.0 269.5,145.1 254.0,155.9 239.0,168.0 224.6,181.8 210.7,196.8 198.0,212.0 186.6,227.0 176.4,242.2 167.0,258.0 158.4,274.6 150.6,291.8 144.0,309.0 138.6,326.0 134.4,342.9 131.0,360.0 128.6,377.6 127.0,395.3 126.0,412.0 125.5,426.9 125.4,440.9 125.5,455.0 125.5,469.8 125.6,484.9 126.0,500.0 126.3,515.3 126.9,530.6 128.6,546.0 131.8,561.3 136.2,576.6 141.4,592.0 147.3,607.5 154.1,623.0 162.0,638.5 171.3,654.1 181.7,669.7 192.7,684.7 203.9,698.9 215.7,712.6 228.6,725.7 243.1,738.3 258.6,750.4 274.8,761.6 291.3,771.9 308.4,781.3 326.0,789.8 344.3,797.4 363.1,804.1 382.5,810.3 404.0,816.3 426.1,821.7 444.0,825.7 454.6,827.9 461.1,828.8 467.5,829.0 473.9,828.8 480.4,827.9 491.0,825.7 508.9,821.7 531.0,816.3 552.5,810.3 571.9,804.1 590.7,797.4 609.0,789.8 626.6,781.3 643.7,771.9 660.2,761.6 676.4,750.4 691.9,738.3 706.4,725.7 719.3,712.6 731.1,698.9 742.3,684.7 753.3,669.7 763.7,654.1 773.0,638.5 780.9,623.0 787.7,607.5 793.6,592.0 798.8,576.6 803.2,561.3 806.4,546.0 808.1,530.6 808.7,515.3 809.0,500.0 809.4,484.9 809.5,469.8 809.5,455.0 809.6,440.9 809.5,426.9 809.0,412.0 808.0,395.3 806.4,377.6 804.0,360.0 800.6,342.9 796.4,326.0 791.0,309.0 784.4,291.8 776.6,274.6 768.0,258.0 758.6,242.2 748.4,227.0 737.0,212.0 724.3,196.8 710.4,181.8 696.0,168.0 681.0,155.9 665.5,145.1 650.0,135.0 634.7,125.4 619.3,116.6 604.0,109.0 588.7,103.0 573.3,98.2 558.0,94.0 542.6,90.1 527.2,86.7 512.0,84.0 497.1,81.9 482.3,80.5" fill="#0808f0"/><g clip-path="url(#hcb)"><rect x="0" y="0" width="933" height="858" fill="#d8c410"/><g filter="url(#hbb_22)"><polygon points="200.0,640.0 700.0,640.0 700.0,850.0 200.0,850.0" fill="#e0a410" opacity="0.9"/><polygon points="300.0,720.0 520.0,720.0 520.0,850.0 300.0,850.0" fill="#e49010" opacity="0.7"/><polygon points="330.0,60.0 520.0,60.0 565.0,140.0 620.0,250.0 700.0,330.0 640.0,420.0 520.0,480.0 380.0,500.0 290.0,470.0 255.0,400.0 300.0,330.0 272.0,230.0 300.0,150.0" fill="#84cc10"/><polygon points="340.0,60.0 480.0,60.0 500.0,200.0 520.0,330.0 420.0,400.0 300.0,420.0 270.0,330.0 290.0,200.0" fill="#40c410" opacity="0.9"/></g><g filter="url(#hbb_16)"><polygon points="280.0,230.0 330.0,150.0 400.0,140.0 400.0,260.0 380.0,380.0 290.0,410.0 262.0,330.0" fill="#14c010" opacity="0.95"/></g><g filter="url(#hbb_22)"><polygon points="560.0,80.0 800.0,120.0 800.0,400.0 700.0,330.0 620.0,250.0" fill="#a8cc10" opacity="0.9"/><polygon points="520.0,480.0 640.0,420.0 720.0,360.0 800.0,420.0 800.0,520.0 600.0,520.0" fill="#b8cc10" opacity="0.7"/><polygon points="100.0,220.0 220.0,230.0 260.0,330.0 200.0,400.0 100.0,400.0" fill="#e09410"/></g><g filter="url(#hbb_12)"><polygon points="100.0,285.0 172.0,295.0 178.0,345.0 100.0,355.0" fill="#e81808"/><polygon points="150.0,440.0 220.0,480.0 275.0,550.0 255.0,620.0 230.0,710.0 170.0,710.0" fill="#20c020"/></g><g filter="url(#hbb_8)"><polygon points="80.0,455.0 150.0,465.0 195.0,508.0 246.0,552.0 228.0,600.0 200.0,672.0 80.0,650.0" fill="#0808f0"/></g></g><ellipse cx="340" cy="177" rx="19.5" ry="18.5" fill="none" stroke="#0c0c64" stroke-width="4.6"/><ellipse cx="592" cy="177" rx="19.5" ry="18.5" fill="none" stroke="#0c0c64" stroke-width="4.6"/><ellipse cx="224" cy="305" rx="19.5" ry="18.5" fill="none" stroke="#0c0c64" stroke-width="4.6"/><ellipse cx="347" cy="313" rx="19.5" ry="18.5" fill="none" stroke="#0c0c64" stroke-width="4.6"/><ellipse cx="466" cy="322" rx="19.5" ry="18.5" fill="none" stroke="#0c0c64" stroke-width="4.6"/><ellipse cx="586" cy="313" rx="19.5" ry="18.5" fill="none" stroke="#0c0c64" stroke-width="4.6"/><ellipse cx="708" cy="305" rx="19.5" ry="18.5" fill="none" stroke="#0c0c64" stroke-width="4.6"/><ellipse cx="216" cy="434" rx="19.5" ry="18.5" fill="none" stroke="#0c0c64" stroke-width="4.6"/><ellipse cx="360" cy="434" rx="19.5" ry="18.5" fill="none" stroke="#0c0c64" stroke-width="4.6"/><ellipse cx="466" cy="434" rx="19.5" ry="18.5" fill="none" stroke="#0c0c64" stroke-width="4.6"/><ellipse cx="572" cy="434" rx="19.5" ry="18.5" fill="none" stroke="#0c0c64" stroke-width="4.6"/><ellipse cx="717" cy="434" rx="19.5" ry="18.5" fill="none" stroke="#0c0c64" stroke-width="4.6"/><ellipse cx="216" cy="568" rx="19.5" ry="18.5" fill="none" stroke="#0c0c64" stroke-width="4.6"/><ellipse cx="347" cy="560" rx="19.5" ry="18.5" fill="none" stroke="#0c0c64" stroke-width="4.6"/><ellipse cx="466" cy="552" rx="19.5" ry="18.5" fill="none" stroke="#0c0c64" stroke-width="4.6"/><ellipse cx="586" cy="560" rx="19.5" ry="18.5" fill="none" stroke="#0c0c64" stroke-width="4.6"/><ellipse cx="708" cy="568" rx="19.5" ry="18.5" fill="none" stroke="#0c0c64" stroke-width="4.6"/><ellipse cx="466" cy="688" rx="19.5" ry="18.5" fill="none" stroke="#0c0c64" stroke-width="4.6"/><ellipse cx="370" cy="750" rx="19.5" ry="18.5" fill="none" stroke="#0c0c64" stroke-width="4.6"/><ellipse cx="563" cy="750" rx="19.5" ry="18.5" fill="none" stroke="#0c0c64" stroke-width="4.6"/></svg>
<div style="position:absolute;left:1133.4px;top:463px;width:204.2px;height:189.2px;box-sizing:border-box;border:1.2px solid #7070ff;box-shadow:inset 0 0 0 2.4px #0000ee;"></div>
<div style="position:absolute;left:1218.49px;top:449.00px;font-size:12px;line-height:16px;color:#e8f0f4;white-space:nowrap;transform:scaleX(0.9000);transform-origin:50% 50%;">Sigma</div>
<svg style="position:absolute;left:1130px;top:460px" width="212" height="195" viewBox="0 0 933 858"><defs><clipPath id="hcs"><polygon points="467.5,103.0 450.8,103.1 434.2,103.4 420.0,104.0 410.7,104.7 403.8,105.8 395.0,108.0 382.3,111.5 367.7,116.1 352.0,122.0 335.1,129.6 317.2,138.6 300.0,148.0 283.9,157.4 268.5,167.2 254.0,178.0 240.5,190.3 227.9,203.5 216.0,217.0 204.7,230.1 194.3,243.5 185.0,258.0 177.2,274.3 170.6,291.6 165.0,309.0 160.3,326.0 156.7,342.9 154.0,360.0 152.6,377.4 152.2,394.9 152.0,412.0 151.7,427.8 151.6,443.2 151.5,460.0 151.3,479.6 151.2,500.6 151.7,520.6 152.6,538.5 154.0,555.5 156.8,571.8 161.6,587.8 167.9,603.2 174.7,618.0 181.5,632.1 189.0,645.5 197.8,659.0 208.6,672.9 220.9,686.7 233.7,700.0 246.8,712.6 260.5,724.6 274.8,736.0 289.6,746.9 305.0,757.2 321.0,766.7 337.7,775.2 355.0,783.0 372.3,789.8 389.6,795.9 407.0,801.1 423.5,805.2 438.7,808.3 453.1,810.3 467.5,811.0 481.9,810.3 496.3,808.3 511.5,805.2 528.0,801.1 545.4,795.9 562.7,789.8 580.0,783.0 597.3,775.2 614.0,766.7 630.0,757.2 645.4,746.9 660.2,736.0 674.5,724.6 688.2,712.6 701.3,700.0 714.1,686.7 726.4,672.9 737.2,659.0 746.0,645.5 753.5,632.1 760.3,618.0 767.1,603.2 773.4,587.8 778.2,571.8 781.0,555.5 782.4,538.5 783.3,520.6 783.8,500.6 783.7,479.6 783.5,460.0 783.4,443.2 783.3,427.8 783.0,412.0 782.8,394.9 782.4,377.4 781.0,360.0 778.3,342.9 774.7,326.0 770.0,309.0 764.4,291.6 757.8,274.3 750.0,258.0 740.7,243.5 730.3,230.1 719.0,217.0 707.1,203.5 694.5,190.3 681.0,178.0 666.5,167.2 651.1,157.4 635.0,148.0 617.8,138.6 599.9,129.6 583.0,122.0 567.3,116.1 552.7,111.5 540.0,108.0 531.2,105.8 524.3,104.7 515.0,104.0 500.8,103.4 484.2,103.1" fill="#000"/></clipPath><filter id="hbs_8" filterUnits="userSpaceOnUse" x="-100" y="-100" width="1133" height="1058"><feGaussianBlur stdDeviation="8"/></filter><filter id="hbs_12" filterUnits="userSpaceOnUse" x="-100" y="-100" width="1133" height="1058"><feGaussianBlur stdDeviation="12"/></filter><filter id="hbs_16" filterUnits="userSpaceOnUse" x="-100" y="-100" width="1133" height="1058"><feGaussianBlur stdDeviation="16"/></filter><filter id="hbs_22" filterUnits="userSpaceOnUse" x="-100" y="-100" width="1133" height="1058"><feGaussianBlur stdDeviation="22"/></filter><filter id="hbs_30" filterUnits="userSpaceOnUse" x="-100" y="-100" width="1133" height="1058"><feGaussianBlur stdDeviation="30"/></filter></defs><path d="M396 92 L441 43 Q478 24 515 43 L558 92 Z M431 78 L457 50 Q480 44 505 50 L529 78 Z" fill="#0808f0" fill-rule="evenodd"/><ellipse cx="103.4" cy="476.5" rx="29" ry="59" fill="#000" stroke="#0808f0" stroke-width="18.5"/><ellipse cx="831.6" cy="476.5" rx="29" ry="59" fill="#000" stroke="#0808f0" stroke-width="18.5"/><polygon points="467.5,80.0 452.7,80.5 437.9,81.9 423.0,84.0 407.8,86.7 392.4,90.1 377.0,94.0 361.7,98.2 346.3,103.0 331.0,109.0 315.7,116.6 300.3,125.4 285.0,135.0 269.5,145.1 254.0,155.9 239.0,168.0 224.6,181.8 210.7,196.8 198.0,212.0 186.6,227.0 176.4,242.2 167.0,258.0 158.4,274.6 150.6,291.8 144.0,309.0 138.6,326.0 134.4,342.9 131.0,360.0 128.6,377.6 127.0,395.3 126.0,412.0 125.5,426.9 125.4,440.9 125.5,455.0 125.5,469.8 125.6,484.9 126.0,500.0 126.3,515.3 126.9,530.6 128.6,546.0 131.8,561.3 136.2,576.6 141.4,592.0 147.3,607.5 154.1,623.0 162.0,638.5 171.3,654.1 181.7,669.7 192.7,684.7 203.9,698.9 215.7,712.6 228.6,725.7 243.1,738.3 258.6,750.4 274.8,761.6 291.3,771.9 308.4,781.3 326.0,789.8 344.3,797.4 363.1,804.1 382.5,810.3 404.0,816.3 426.1,821.7 444.0,825.7 454.6,827.9 461.1,828.8 467.5,829.0 473.9,828.8 480.4,827.9 491.0,825.7 508.9,821.7 531.0,816.3 552.5,810.3 571.9,804.1 590.7,797.4 609.0,789.8 626.6,781.3 643.7,771.9 660.2,761.6 676.4,750.4 691.9,738.3 706.4,725.7 719.3,712.6 731.1,698.9 742.3,684.7 753.3,669.7 763.7,654.1 773.0,638.5 780.9,623.0 787.7,607.5 793.6,592.0 798.8,576.6 803.2,561.3 806.4,546.0 808.1,530.6 808.7,515.3 809.0,500.0 809.4,484.9 809.5,469.8 809.5,455.0 809.6,440.9 809.5,426.9 809.0,412.0 808.0,395.3 806.4,377.6 804.0,360.0 800.6,342.9 796.4,326.0 791.0,309.0 784.4,291.8 776.6,274.6 768.0,258.0 758.6,242.2 748.4,227.0 737.0,212.0 724.3,196.8 710.4,181.8 696.0,168.0 681.0,155.9 665.5,145.1 650.0,135.0 634.7,125.4 619.3,116.6 604.0,109.0 588.7,103.0 573.3,98.2 558.0,94.0 542.6,90.1 527.2,86.7 512.0,84.0 497.1,81.9 482.3,80.5" fill="#0808f0"/><g clip-path="url(#hcs)"><rect x="0" y="0" width="933" height="858" fill="#d8c810"/><g filter="url(#hbs_22)"><polygon points="100.0,450.0 300.0,425.0 500.0,470.0 800.0,510.0 800.0,620.0 600.0,650.0 400.0,610.0 250.0,600.0 100.0,580.0" fill="#e0a010"/><polygon points="100.0,330.0 300.0,330.0 400.0,420.0 100.0,450.0" fill="#e4b810" opacity="0.6"/><polygon points="545.0,335.0 700.0,325.0 800.0,330.0 800.0,490.0 700.0,455.0 620.0,405.0" fill="#78cc18"/><polygon points="640.0,370.0 800.0,370.0 800.0,460.0 700.0,430.0" fill="#48c418" opacity="0.8"/><polygon points="150.0,560.0 400.0,580.0 650.0,660.0 800.0,600.0 800.0,850.0 150.0,850.0" fill="#e07808" opacity="0.95"/></g><g filter="url(#hbs_16)"><polygon points="120.0,620.0 260.0,585.0 400.0,625.0 520.0,680.0 650.0,725.0 720.0,690.0 720.0,850.0 120.0,850.0" fill="#dc0000"/></g></g><ellipse cx="340" cy="177" rx="19.5" ry="18.5" fill="none" stroke="#0c0c64" stroke-width="4.6"/><ellipse cx="592" cy="177" rx="19.5" ry="18.5" fill="none" stroke="#0c0c64" stroke-width="4.6"/><ellipse cx="224" cy="305" rx="19.5" ry="18.5" fill="none" stroke="#0c0c64" stroke-width="4.6"/><ellipse cx="347" cy="313" rx="19.5" ry="18.5" fill="none" stroke="#0c0c64" stroke-width="4.6"/><ellipse cx="466" cy="322" rx="19.5" ry="18.5" fill="none" stroke="#0c0c64" stroke-width="4.6"/><ellipse cx="586" cy="313" rx="19.5" ry="18.5" fill="none" stroke="#0c0c64" stroke-width="4.6"/><ellipse cx="708" cy="305" rx="19.5" ry="18.5" fill="none" stroke="#0c0c64" stroke-width="4.6"/><ellipse cx="216" cy="434" rx="19.5" ry="18.5" fill="none" stroke="#0c0c64" stroke-width="4.6"/><ellipse cx="360" cy="434" rx="19.5" ry="18.5" fill="none" stroke="#0c0c64" stroke-width="4.6"/><ellipse cx="466" cy="434" rx="19.5" ry="18.5" fill="none" stroke="#0c0c64" stroke-width="4.6"/><ellipse cx="572" cy="434" rx="19.5" ry="18.5" fill="none" stroke="#0c0c64" stroke-width="4.6"/><ellipse cx="717" cy="434" rx="19.5" ry="18.5" fill="none" stroke="#0c0c64" stroke-width="4.6"/><ellipse cx="216" cy="568" rx="19.5" ry="18.5" fill="none" stroke="#0c0c64" stroke-width="4.6"/><ellipse cx="347" cy="560" rx="19.5" ry="18.5" fill="none" stroke="#0c0c64" stroke-width="4.6"/><ellipse cx="466" cy="552" rx="19.5" ry="18.5" fill="none" stroke="#0c0c64" stroke-width="4.6"/><ellipse cx="586" cy="560" rx="19.5" ry="18.5" fill="none" stroke="#0c0c64" stroke-width="4.6"/><ellipse cx="708" cy="568" rx="19.5" ry="18.5" fill="none" stroke="#0c0c64" stroke-width="4.6"/><ellipse cx="466" cy="688" rx="19.5" ry="18.5" fill="none" stroke="#0c0c64" stroke-width="4.6"/><ellipse cx="370" cy="750" rx="19.5" ry="18.5" fill="none" stroke="#0c0c64" stroke-width="4.6"/><ellipse cx="563" cy="750" rx="19.5" ry="18.5" fill="none" stroke="#0c0c64" stroke-width="4.6"/></svg>
<div style="position:absolute;left:0px;top:669.6px;width:1351px;height:190px;background:#3c3c3c;"></div>
<div style="position:absolute;left:2.3px;top:670.6px;width:1349px;height:190px;background:#e4ebf3;"></div>
<div style="position:absolute;left:7px;top:672.3px;width:1337px;height:186px;background:#000;"></div>
<div style="position:absolute;left:11px;top:676.2px;width:1328.6px;height:17.6px;background:#add8e6;"></div>
<div style="position:absolute;left:564.89px;top:676.60px;font-size:12px;line-height:16px;color:#000;white-space:nowrap;transform:scaleX(0.9286);transform-origin:50% 50%;">Workload, HighEngagement, Distraction</div>
<svg style="position:absolute;left:0;top:0" width="1351" height="858" viewBox="0 0 1351 858"><path d="M37.0 831.0 V702.7 H1329.0 V831.0" fill="none" stroke="#b8c0c4" stroke-width="1.2"/><path d="M37.2 702.7 V831.0" fill="none" stroke="#c4d4d4" stroke-width="2"/><path d="M40.7 740.9 H1328.5" stroke="#dcdcdc" stroke-width="1" stroke-dasharray="6.4 3.5"/><path d="M40.7 791.8 H1328.5" stroke="#dcdcdc" stroke-width="1" stroke-dasharray="6.4 3.5"/><path d="M31.0 830.0 H37.5" stroke="#c4d0d4" stroke-width="1.2"/><path d="M31.0 766.4 H37.5" stroke="#c4d0d4" stroke-width="1.2"/><path d="M31.0 702.7 H37.5" stroke="#c4d0d4" stroke-width="1.2"/><path d="M37.5 832.0 V838.2" stroke="#c4d0d4" stroke-width="1.2"/><path d="M123.6 832.0 V838.2" stroke="#c4d0d4" stroke-width="1.2"/><path d="M209.6 832.0 V838.2" stroke="#c4d0d4" stroke-width="1.2"/><path d="M295.7 832.0 V838.2" stroke="#c4d0d4" stroke-width="1.2"/><path d="M381.8 832.0 V838.2" stroke="#c4d0d4" stroke-width="1.2"/><path d="M467.8 832.0 V838.2" stroke="#c4d0d4" stroke-width="1.2"/><path d="M553.9 832.0 V838.2" stroke="#c4d0d4" stroke-width="1.2"/><path d="M640.0 832.0 V838.2" stroke="#c4d0d4" stroke-width="1.2"/><path d="M726.0 832.0 V838.2" stroke="#c4d0d4" stroke-width="1.2"/><path d="M812.1 832.0 V838.2" stroke="#c4d0d4" stroke-width="1.2"/><path d="M898.2 832.0 V838.2" stroke="#c4d0d4" stroke-width="1.2"/><path d="M984.2 832.0 V838.2" stroke="#c4d0d4" stroke-width="1.2"/><path d="M1070.3 832.0 V838.2" stroke="#c4d0d4" stroke-width="1.2"/><path d="M1156.4 832.0 V838.2" stroke="#c4d0d4" stroke-width="1.2"/><path d="M1242.4 832.0 V838.2" stroke="#c4d0d4" stroke-width="1.2"/><path d="M1328.5 832.0 V838.2" stroke="#c4d0d4" stroke-width="1.2"/><path d="M36.5 831.3 H1328.5" stroke="#e4ecfa" stroke-width="2.6"/><polyline points="37.5,828.7 123.6,828.7 209.6,828.2 295.7,825.8 381.8,824.4 467.8,828.3 553.9,828.7 640.0,828.7 726.0,828.7 812.1,828.7 898.2,828.7 984.2,828.7 1070.3,828.7 1156.4,828.7 1242.4,828.7 1328.5,828.7" fill="none" stroke="#0000f4" stroke-width="2.8" stroke-linejoin="round"/><polyline points="37.5,773.5 123.6,792.5 209.6,798.0 295.7,816.5 381.8,791.0 467.8,751.0 553.9,774.0 640.0,805.0 726.0,757.5 812.1,727.0 898.2,774.0 984.2,821.5 1070.3,796.0 1156.4,781.5 1242.4,808.5 1328.5,761.0" fill="none" stroke="#0f780f" stroke-width="3" stroke-linejoin="round"/><polyline points="37.5,758.5 123.6,754.0 209.6,748.0 295.7,758.0 381.8,766.5 467.8,748.0 553.9,732.0 640.0,741.0 726.0,750.0 812.1,746.5 898.2,735.0 984.2,730.5 1070.3,737.0 1156.4,739.5 1242.4,746.5 1328.5,761.0" fill="none" stroke="#ffff18" stroke-width="3.2" stroke-linejoin="round"/><rect x="1218.3" y="773.4" width="19.4" height="14" fill="#000" stroke="#e8e8e8" stroke-width="1"/><polyline points="1219,782.9 1224.5,777.4 1230,782.9 1237,776.9" fill="none" stroke="#ffff18" stroke-width="3" stroke-linejoin="miter"/><rect x="1218.3" y="791.3" width="19.4" height="14" fill="#000" stroke="#e8e8e8" stroke-width="1"/><polyline points="1219,800.8 1224.5,795.3 1230,800.8 1237,794.8" fill="none" stroke="#0f780f" stroke-width="3" stroke-linejoin="miter"/><rect x="1218.3" y="809.1999999999999" width="19.4" height="14" fill="#000" stroke="#e8e8e8" stroke-width="1"/><polyline points="1219,818.6999999999999 1224.5,813.1999999999999 1230,818.6999999999999 1237,812.6999999999999" fill="none" stroke="#0000f4" stroke-width="3" stroke-linejoin="miter"/><rect x="109.5" y="854.5" width="4.5" height="4" fill="#f4f4f4"/></svg>
<div style="position:absolute;left:1242.20px;top:772.60px;font-size:12px;line-height:16px;color:#c6dae6;white-space:nowrap;transform:scaleX(0.9115);transform-origin:0 50%;">Workload</div>
<div style="position:absolute;left:1242.20px;top:790.50px;font-size:12px;line-height:16px;color:#c6dae6;white-space:nowrap;transform:scaleX(0.9015);transform-origin:0 50%;">HighEngagement</div>
<div style="position:absolute;left:1242.20px;top:808.40px;font-size:12px;line-height:16px;color:#c6dae6;white-space:nowrap;transform:scaleX(0.9491);transform-origin:0 50%;">Distraction</div>
<div style="position:absolute;left:27.49px;top:837.30px;font-size:12px;line-height:16px;color:#c6dae6;white-space:nowrap;transform:scaleX(0.9190);transform-origin:50% 50%;">141</div>
<div style="position:absolute;left:113.56px;top:837.30px;font-size:12px;line-height:16px;color:#c6dae6;white-space:nowrap;transform:scaleX(0.9190);transform-origin:50% 50%;">142</div>
<div style="position:absolute;left:199.62px;top:837.30px;font-size:12px;line-height:16px;color:#c6dae6;white-space:nowrap;transform:scaleX(0.9190);transform-origin:50% 50%;">143</div>
<div style="position:absolute;left:285.69px;top:837.30px;font-size:12px;line-height:16px;color:#c6dae6;white-space:nowrap;transform:scaleX(0.9190);transform-origin:50% 50%;">144</div>
<div style="position:absolute;left:371.76px;top:837.30px;font-size:12px;line-height:16px;color:#c6dae6;white-space:nowrap;transform:scaleX(0.9190);transform-origin:50% 50%;">145</div>
<div style="position:absolute;left:457.82px;top:837.30px;font-size:12px;line-height:16px;color:#c6dae6;white-space:nowrap;transform:scaleX(0.9190);transform-origin:50% 50%;">146</div>
<div style="position:absolute;left:543.89px;top:837.30px;font-size:12px;line-height:16px;color:#c6dae6;white-space:nowrap;transform:scaleX(0.9190);transform-origin:50% 50%;">147</div>
<div style="position:absolute;left:629.96px;top:837.30px;font-size:12px;line-height:16px;color:#c6dae6;white-space:nowrap;transform:scaleX(0.9190);transform-origin:50% 50%;">148</div>
<div style="position:absolute;left:716.02px;top:837.30px;font-size:12px;line-height:16px;color:#c6dae6;white-space:nowrap;transform:scaleX(0.9190);transform-origin:50% 50%;">149</div>
<div style="position:absolute;left:802.09px;top:837.30px;font-size:12px;line-height:16px;color:#c6dae6;white-space:nowrap;transform:scaleX(0.9190);transform-origin:50% 50%;">150</div>
<div style="position:absolute;left:888.16px;top:837.30px;font-size:12px;line-height:16px;color:#c6dae6;white-space:nowrap;transform:scaleX(0.9190);transform-origin:50% 50%;">151</div>
<div style="position:absolute;left:974.22px;top:837.30px;font-size:12px;line-height:16px;color:#c6dae6;white-space:nowrap;transform:scaleX(0.9190);transform-origin:50% 50%;">152</div>
<div style="position:absolute;left:1060.29px;top:837.30px;font-size:12px;line-height:16px;color:#c6dae6;white-space:nowrap;transform:scaleX(0.9190);transform-origin:50% 50%;">153</div>
<div style="position:absolute;left:1146.36px;top:837.30px;font-size:12px;line-height:16px;color:#c6dae6;white-space:nowrap;transform:scaleX(0.9190);transform-origin:50% 50%;">154</div>
<div style="position:absolute;left:1232.42px;top:837.30px;font-size:12px;line-height:16px;color:#c6dae6;white-space:nowrap;transform:scaleX(0.9190);transform-origin:50% 50%;">155</div>
<div style="position:absolute;left:1316.49px;top:837.30px;font-size:12px;line-height:16px;color:#c6dae6;white-space:nowrap;transform:scaleX(0.9190);transform-origin:50% 50%;">156</div>
<div style="position:absolute;left:21.33px;top:694.70px;font-size:12px;line-height:16px;color:#c6dae6;white-space:nowrap;">1</div>
<div style="position:absolute;left:11.52px;top:758.40px;font-size:12px;line-height:16px;color:#c6dae6;white-space:nowrap;transform:scaleX(0.9232);transform-origin:100% 50%;">0.5</div>
<div style="position:absolute;left:21.33px;top:822.00px;font-size:12px;line-height:16px;color:#c6dae6;white-space:nowrap;">0</div>
</div></body></html>
